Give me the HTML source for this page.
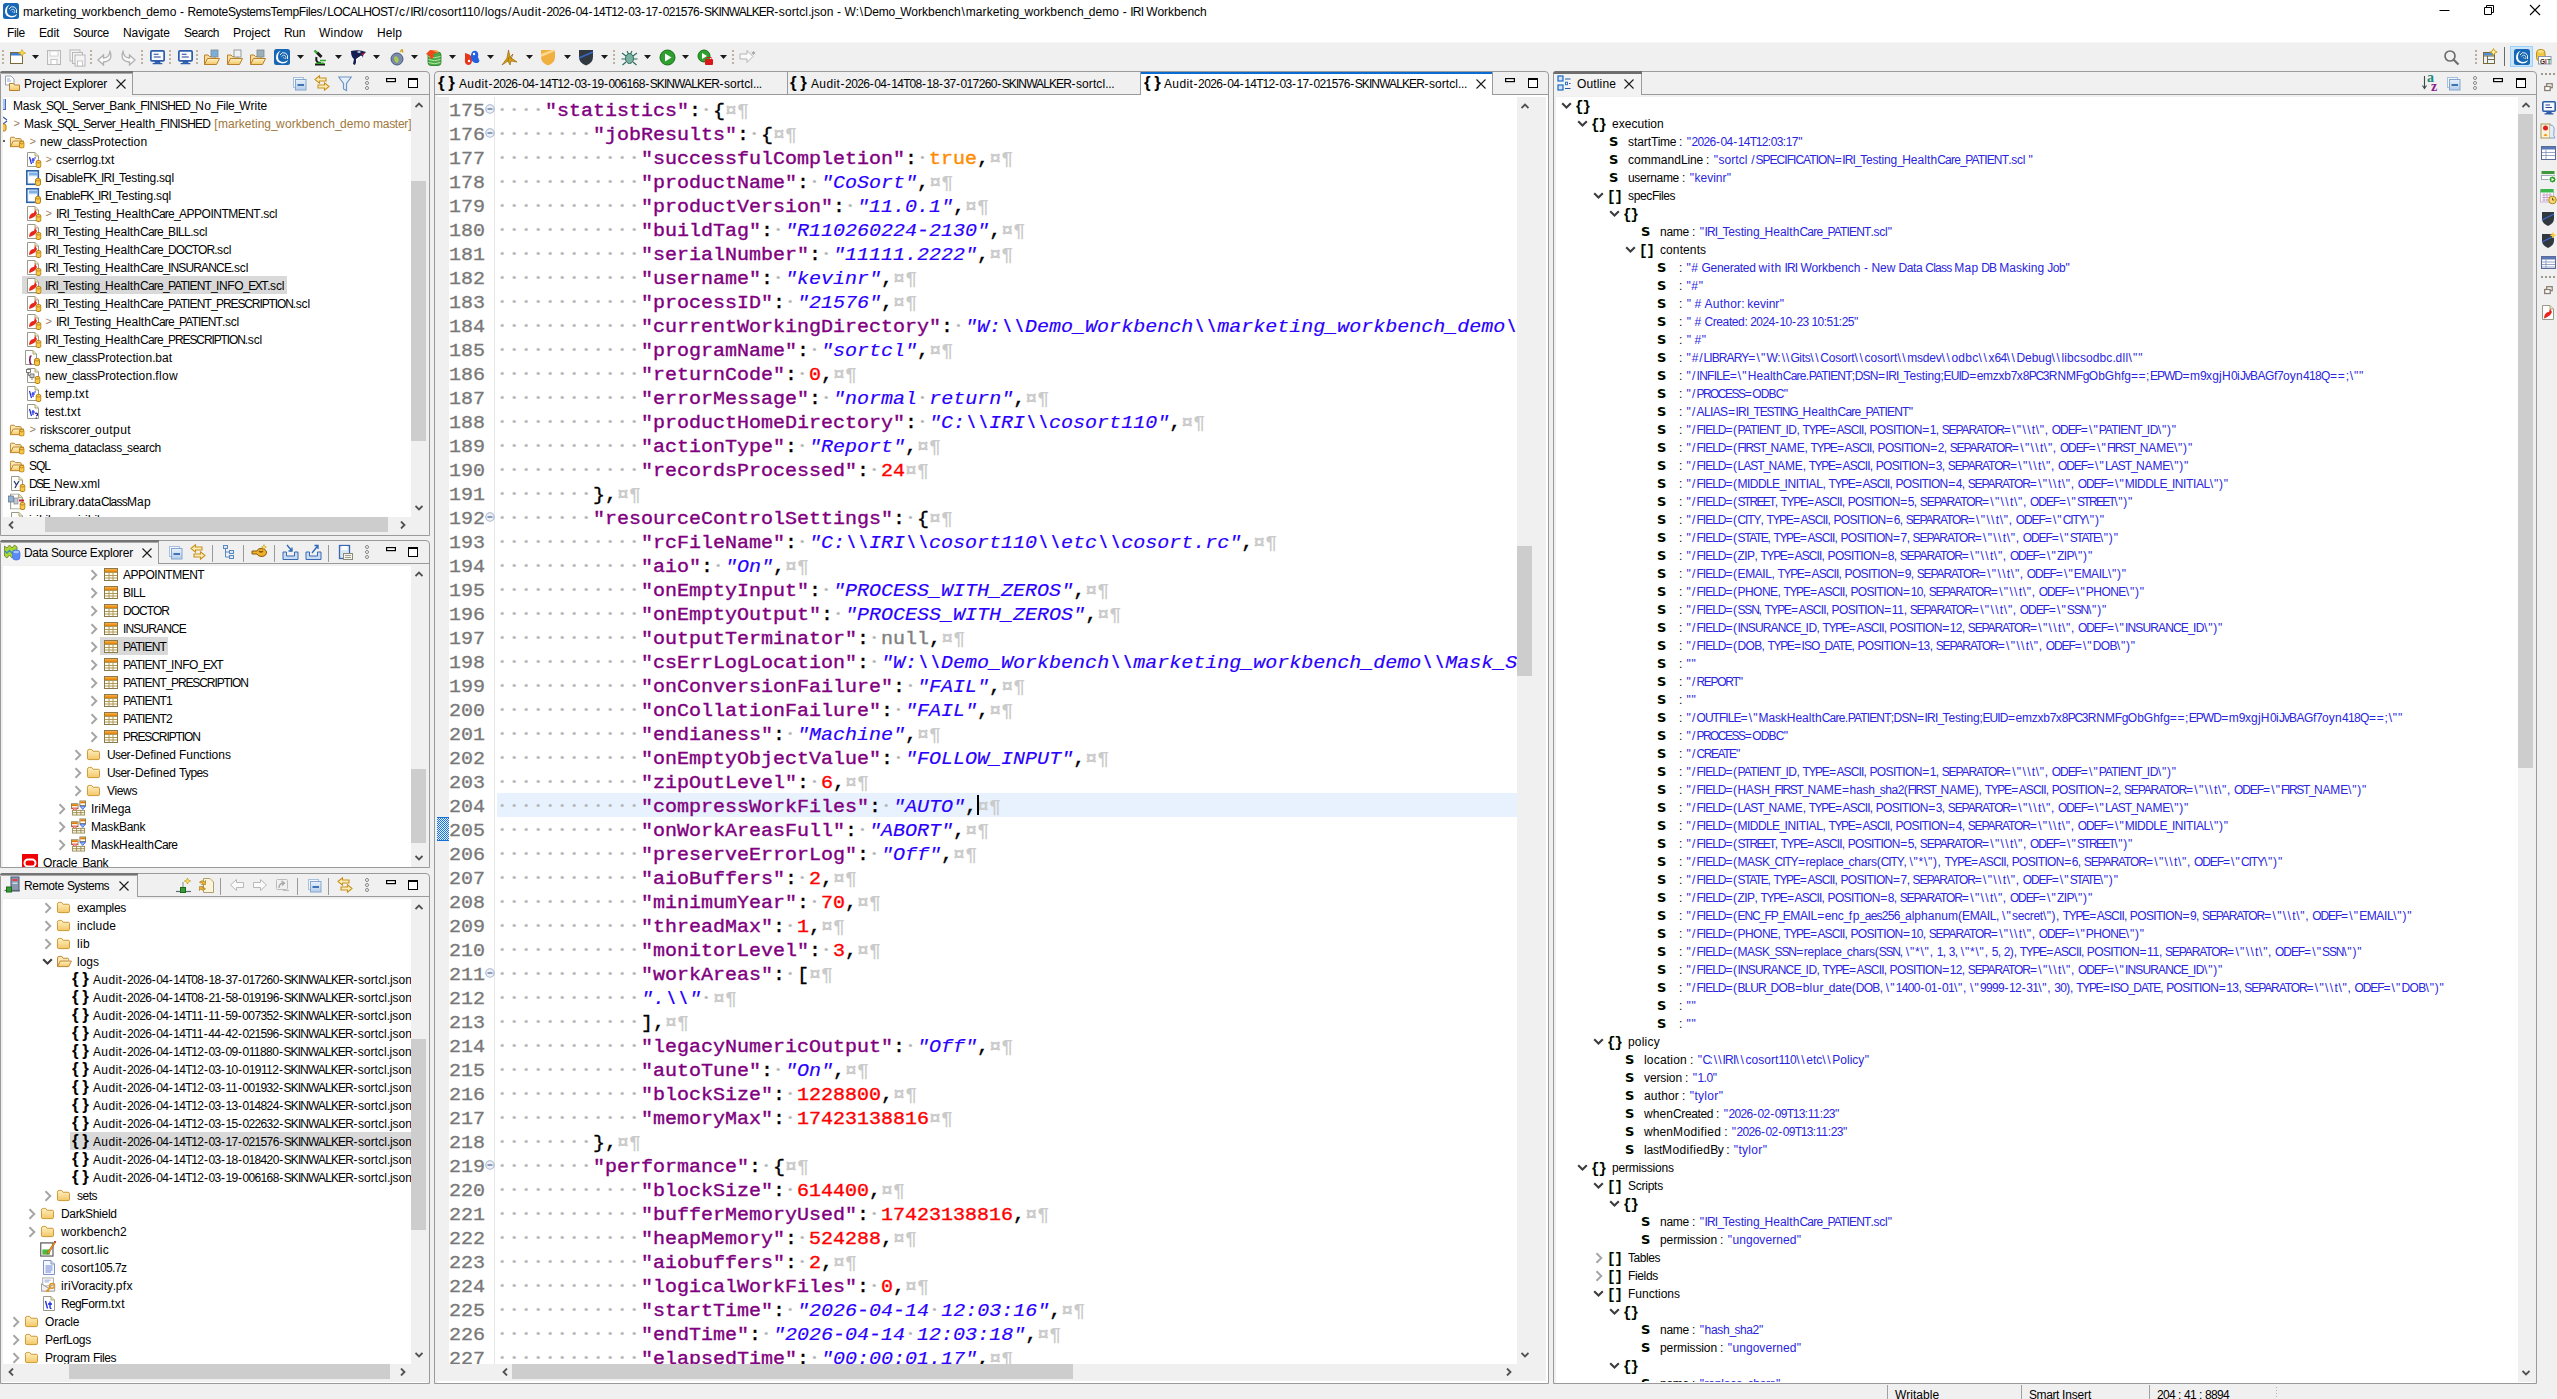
<!DOCTYPE html><html><head><meta charset="utf-8"><title>IRI Workbench</title><style>
*{margin:0;padding:0}
html,body{width:2557px;height:1399px;overflow:hidden;background:#f0f0f0}
body{position:relative;font:12px "Liberation Sans",sans-serif;color:#000}
.a{position:absolute}
.t{position:absolute;white-space:pre;font:12px "Liberation Sans",sans-serif;line-height:18px;height:18px}
.jb{position:absolute;white-space:pre;font:bold 17px "Liberation Sans",sans-serif;line-height:20px;letter-spacing:-0.600px;width:18px}
.ob{position:absolute;white-space:pre;font:bold 14px "Liberation Mono",monospace;line-height:18px;letter-spacing:-0.800px;text-shadow:0 0 1px #b8f0b8;margin-top:1.500px}
.os{position:absolute;white-space:pre;font:bold 13px "DejaVu Sans","Liberation Sans",sans-serif;line-height:18px;text-shadow:0 0 1px #b8f0b8;margin-top:1px}
.ln{position:absolute;left:11.500px;width:32.400px;text-align:right;font:18px "Liberation Mono",monospace;line-height:24px;height:24px;color:#787878;margin-top:1.500px;transform:scaleX(1.1111);transform-origin:0 0;-webkit-text-stroke:0.300px #787878}
.cl{position:absolute;left:60px;white-space:pre;font:18px "Liberation Mono",monospace;line-height:24px;height:24px;margin-top:1.500px;transform:scaleX(1.1111);transform-origin:0 0;-webkit-text-stroke:0.350px}
.cl i{font-style:normal}
.cl .k{color:#800080}
.cl .v{color:#2a00ff;font-style:italic;-webkit-text-stroke:0.150px}
.cl .d{color:#ff0000}
.cl .b{color:#ff8c00}
.cl .n{color:#808080}
.cl .p{color:#000}
.cl .w{color:#cbcbcb;font-style:normal;font-weight:bold;-webkit-text-stroke:0}
.cl .x{color:#b6b6b6;font-style:normal;-webkit-text-stroke:0;font-size:11px;letter-spacing:4.200px;margin-left:1.400px;margin-right:-1.400px;position:relative;top:-2.400px}
.t i{font-style:normal}
.c6{margin-left:0.30px;letter-spacing:0.30px}
.c7{margin-left:0.35px;letter-spacing:0.35px}
.c10{margin-left:0.50px;letter-spacing:0.50px}
.c16{margin-left:0.80px;letter-spacing:0.80px}
.c17{margin-left:0.85px;letter-spacing:0.85px}
.qm34{letter-spacing:-1.70px}
.qm33{letter-spacing:-1.65px}
.qm32{letter-spacing:-1.60px}
.qm31{letter-spacing:-1.55px}
.qm29{letter-spacing:-1.45px}
.qm28{letter-spacing:-1.40px}
.qm27{letter-spacing:-1.35px}
.qm26{letter-spacing:-1.30px}
.qm25{letter-spacing:-1.25px}
.qm24{letter-spacing:-1.20px}
.qm23{letter-spacing:-1.15px}
.qm22{letter-spacing:-1.10px}
.qm21{letter-spacing:-1.05px}
.qm20{letter-spacing:-1.00px}
.qm19{letter-spacing:-0.95px}
.qm18{letter-spacing:-0.90px}
.qm17{letter-spacing:-0.85px}
.qm16{letter-spacing:-0.80px}
.qm15{letter-spacing:-0.75px}
.qm14{letter-spacing:-0.70px}
.qm13{letter-spacing:-0.65px}
.qm12{letter-spacing:-0.60px}
.qm11{letter-spacing:-0.55px}
.qm10{letter-spacing:-0.50px}
.qm9{letter-spacing:-0.45px}
.qm8{letter-spacing:-0.40px}
.qm7{letter-spacing:-0.35px}
.qm6{letter-spacing:-0.30px}
.qm5{letter-spacing:-0.25px}
.qm4{letter-spacing:-0.20px}
.qm3{letter-spacing:-0.15px}
.qm2{letter-spacing:-0.10px}
.qm1{letter-spacing:-0.05px}
.q0{letter-spacing:0.00px}
.q1{letter-spacing:0.05px}
.q2{letter-spacing:0.10px}
.q3{letter-spacing:0.15px}
.q4{letter-spacing:0.20px}
.q5{letter-spacing:0.25px}
.q7{letter-spacing:0.35px}
.q8{letter-spacing:0.40px}
.q9{letter-spacing:0.45px}
.q10{letter-spacing:0.50px}
.q11{letter-spacing:0.55px}
.q12{letter-spacing:0.60px}
.q13{letter-spacing:0.65px}
.q14{letter-spacing:0.70px}
.q15{letter-spacing:0.75px}
.q16{letter-spacing:0.80px}
.q18{letter-spacing:0.90px}
.q20{letter-spacing:1.00px}
.q21{letter-spacing:1.05px}
.q23{letter-spacing:1.15px}
.q24{letter-spacing:1.20px}
.q27{letter-spacing:1.35px}
.q33{letter-spacing:1.65px}
</style></head><body>

<svg width="0" height="0" style="position:absolute">
<defs>
<linearGradient id="gFold" x1="0" y1="0" x2="0" y2="1"><stop offset="0" stop-color="#fff1c4"/><stop offset="1" stop-color="#f3c766"/></linearGradient>
<linearGradient id="gBlue" x1="0" y1="0" x2="0" y2="1"><stop offset="0" stop-color="#e8f1fb"/><stop offset="1" stop-color="#b4cdea"/></linearGradient>
<linearGradient id="gTab" x1="0" y1="0" x2="0" y2="1"><stop offset="0" stop-color="#ffb347"/><stop offset="1" stop-color="#e07b00"/></linearGradient>
</defs></svg>

<div class="a" style="left:0px;top:0px;width:2557px;height:42px;background:#fff;"></div>
<div class="a" style="left:0px;top:42px;width:2557px;height:1px;background:#f7f7f7;"></div>
<svg class="a" style="left:3px;top:3px;" width="16" height="16" viewBox="0 0 16 16"><rect x="0" y="0" width="16" height="16" rx="2.500" fill="#1767b4"/><path d="M7 1.500 Q1.500 3.500 2 9 Q2.500 13.500 8 14.500 Q13 14.500 14 11 Q11 13.500 7.500 12.800 Q4 11.500 4 8 Q4 3.500 7 1.500 Z" fill="#fff"/><path d="M6 6 Q8 2.500 11.500 4 Q14.500 6 13.500 10" fill="none" stroke="#fff" stroke-width="0.900"/><path d="M7.500 7.500 Q9 5.500 11 6.500 Q12.500 8 11.500 10" fill="none" stroke="#dbe8f6" stroke-width="0.800"/><path d="M9 9 Q10 8 10.500 9.500" fill="none" stroke="#dbe8f6" stroke-width="0.700"/></svg>
<div class="t" style="left:23px;top:3px;"><i class="q2">marketing</i><i class="qm32">_</i><i class="q3">workbench</i><i class="qm32">_</i><i class="q1">demo</i><i class="qm6"> </i><i class="c10">-</i><i class="qm6"> </i><i class="qm5">Remote</i><i class="qm10">Systems</i><i class="qm5">Temp</i><i class="qm8">Files</i><i class="c17">/</i><i class="qm13">LOCALHOST</i><i class="c17">/</i><i class="q1">c</i><i class="c17">/</i><i class="qm15">IRI</i><i class="c17">/</i><i class="q2">cosort</i><i class="qm6">110</i><i class="c17">/</i><i class="q1">logs</i><i class="c17">/</i><i class="q8">Audit</i><i class="c10">-</i><i class="qm12">2026</i><i class="c10">-</i><i class="qm12">04</i><i class="c10">-</i><i class="qm12">14</i><i class="qm25">T</i><i class="qm12">12</i><i class="c10">-</i><i class="qm12">03</i><i class="c10">-</i><i class="qm12">17</i><i class="c10">-</i><i class="qm12">021576</i><i class="c10">-</i><i class="qm17">SKINWALKER</i><i class="c10">-</i><i class="q2">sortcl</i><i class="qm6">.</i><i class="q1">json</i><i class="qm6"> </i><i class="c10">-</i><i class="qm6"> </i><i class="qm4">W</i><i class="q14">:\</i><i class="qm3">Demo</i><i class="qm32">_</i><i class="q0">Workbench</i><i class="c17">\</i><i class="q2">marketing</i><i class="qm32">_</i><i class="q3">workbench</i><i class="qm32">_</i><i class="q1">demo</i><i class="qm6"> </i><i class="c10">-</i><i class="qm6"> </i><i class="qm15">IRI</i><i class="qm6"> </i><i class="q0">Workbench</i></div>
<svg class="a" style="left:2433px;top:0" width="124" height="24"><path d="M6.500 10.500 H16.500" stroke="#000" stroke-width="1"/><path d="M51.500 7.500 H58.500 V14.500 H51.500 Z M53.500 7.500 V5.500 H60.500 V12.500 H58.500" fill="none" stroke="#000" stroke-width="1"/><path d="M97 5 L107 15 M107 5 L97 15" stroke="#000" stroke-width="1.100"/></svg>
<div class="t" style="left:7px;top:24px;"><i class="qm7">File</i></div>
<div class="t" style="left:39px;top:24px;"><i class="qm3">Edit</i></div>
<div class="t" style="left:73px;top:24px;"><i class="qm7">Source</i></div>
<div class="t" style="left:123px;top:24px;"><i class="qm1">Navigate</i></div>
<div class="t" style="left:184px;top:24px;"><i class="qm10">Search</i></div>
<div class="t" style="left:233px;top:24px;"><i class="qm1">Project</i></div>
<div class="t" style="left:284px;top:24px;"><i class="qm7">Run</i></div>
<div class="t" style="left:319px;top:24px;"><i class="q4">Window</i></div>
<div class="t" style="left:377px;top:24px;"><i class="q2">Help</i></div>
<div class="a" style="left:1.5px;top:50px;width:2px;height:2px;background:#bdb29e;"></div>
<div class="a" style="left:1.5px;top:54px;width:2px;height:2px;background:#bdb29e;"></div>
<div class="a" style="left:1.5px;top:58px;width:2px;height:2px;background:#bdb29e;"></div>
<div class="a" style="left:1.5px;top:62px;width:2px;height:2px;background:#bdb29e;"></div>
<svg class="a" style="left:9px;top:49px" width="17" height="17"><rect x="1.500" y="3.500" width="12" height="11" fill="#fff" stroke="#7a6a3a"/><rect x="2" y="4" width="11" height="2.500" fill="#3f7fd0"/><path d="M13 0.500 L14.200 3 L16.700 4 L14.200 5 L13 7.500 L11.800 5 L9.300 4 L11.800 3 Z" fill="#ffd84a" stroke="#c89a10" stroke-width="0.600"/></svg>
<svg class="a" style="left:31.5px;top:55px" width="7" height="4"><path d="M0 0 H7 L3.500 4 Z" fill="#1a1a1a"/></svg>
<svg class="a" style="left:46px;top:49px" width="17" height="17"><rect x="1.500" y="1.500" width="13" height="14" fill="#f4f4f4" stroke="#b8b8b8"/><rect x="4" y="2" width="8" height="5" fill="#fff" stroke="#c8c8c8" stroke-width="0.800"/><rect x="5" y="10.500" width="6" height="5" fill="#fff" stroke="#b8b8b8" stroke-width="0.800"/></svg>
<svg class="a" style="left:69px;top:49px" width="18" height="18"><rect x="1" y="1" width="10" height="11" fill="#f4f4f4" stroke="#b8b8b8"/><rect x="3.500" y="3.500" width="10" height="11" fill="#f4f4f4" stroke="#b8b8b8"/><rect x="6" y="6" width="10" height="11" fill="#f4f4f4" stroke="#b8b8b8"/><rect x="8.500" y="12" width="5" height="5" fill="#fff" stroke="#b8b8b8" stroke-width="0.800"/></svg>
<div class="a" style="left:89.5px;top:50px;width:2px;height:2px;background:#bdb29e;"></div>
<div class="a" style="left:89.5px;top:54px;width:2px;height:2px;background:#bdb29e;"></div>
<div class="a" style="left:89.5px;top:58px;width:2px;height:2px;background:#bdb29e;"></div>
<div class="a" style="left:89.5px;top:62px;width:2px;height:2px;background:#bdb29e;"></div>
<svg class="a" style="left:97px;top:50px" width="18" height="16"><path d="M1 10 L6.500 5 V8 Q12 8 13 1.500 Q16.500 11 6.500 12 V15 Z" fill="#fafafa" stroke="#b0b0b0" stroke-width="1.300"/></svg>
<svg class="a" style="left:118px;top:50px" width="18" height="16"><path d="M17 10 L11.500 5 V8 Q6 8 5 1.500 Q1.500 11 11.500 12 V15 Z" fill="#fafafa" stroke="#b0b0b0" stroke-width="1.300"/></svg>
<div class="a" style="left:140.5px;top:50px;width:2px;height:2px;background:#bdb29e;"></div>
<div class="a" style="left:140.5px;top:54px;width:2px;height:2px;background:#bdb29e;"></div>
<div class="a" style="left:140.5px;top:58px;width:2px;height:2px;background:#bdb29e;"></div>
<div class="a" style="left:140.5px;top:62px;width:2px;height:2px;background:#bdb29e;"></div>
<svg class="a" style="left:150px;top:50px;" width="15" height="15" viewBox="0 0 14 14"><rect x="0.800" y="0.800" width="12.400" height="9.400" rx="1" fill="#f6fbff" stroke="#2d5cab" stroke-width="1.600"/><path d="M3.500 4 H8 M3.500 6.500 H10" stroke="#2a3f8f" stroke-width="1"/><path d="M5 10.500 H9 V12 H5 Z M2.500 12.800 H11.500" stroke="#2d5cab" stroke-width="1.200" fill="#2d5cab"/></svg>
<div class="a" style="left:168.5px;top:50px;width:2px;height:2px;background:#bdb29e;"></div>
<div class="a" style="left:168.5px;top:54px;width:2px;height:2px;background:#bdb29e;"></div>
<div class="a" style="left:168.5px;top:58px;width:2px;height:2px;background:#bdb29e;"></div>
<div class="a" style="left:168.5px;top:62px;width:2px;height:2px;background:#bdb29e;"></div>
<svg class="a" style="left:178px;top:50px;" width="15" height="15" viewBox="0 0 14 14"><rect x="0.800" y="0.800" width="12.400" height="9.400" rx="1" fill="#f6fbff" stroke="#2d5cab" stroke-width="1.600"/><path d="M3.500 4 H8 M3.500 6.500 H10" stroke="#2a3f8f" stroke-width="1"/><path d="M5 10.500 H9 V12 H5 Z M2.500 12.800 H11.500" stroke="#2d5cab" stroke-width="1.200" fill="#2d5cab"/></svg>
<div class="a" style="left:195.5px;top:50px;width:2px;height:2px;background:#bdb29e;"></div>
<div class="a" style="left:195.5px;top:54px;width:2px;height:2px;background:#bdb29e;"></div>
<div class="a" style="left:195.5px;top:58px;width:2px;height:2px;background:#bdb29e;"></div>
<div class="a" style="left:195.5px;top:62px;width:2px;height:2px;background:#bdb29e;"></div>
<svg class="a" style="left:203px;top:49px" width="18" height="17"><path d="M1.500 15.500 V6 H5 L6.500 7.500 H12 V9" fill="#f8dc9c" stroke="#b8802a"/><path d="M1.500 15.500 L4.500 9.500 H16.500 L13.500 15.500 Z" fill="url(#gFold)" stroke="#b8802a"/><rect x="8" y="1" width="7" height="7" fill="#7ab0d8" stroke="#808890" stroke-width="0.800"/></svg>
<svg class="a" style="left:226px;top:49px" width="18" height="17"><path d="M1.500 15.500 V6 H5 L6.500 7.500 H12 V9" fill="#f8dc9c" stroke="#b8802a"/><path d="M1.500 15.500 L4.500 9.500 H16.500 L13.500 15.500 Z" fill="url(#gFold)" stroke="#b8802a"/><rect x="8" y="1" width="7" height="7" fill="#f0f0f4" stroke="#808890" stroke-width="0.800"/></svg>
<svg class="a" style="left:249px;top:49px" width="18" height="17"><path d="M1.500 15.500 V6 H5 L6.500 7.500 H12 V9" fill="#f8dc9c" stroke="#b8802a"/><path d="M1.500 15.500 L4.500 9.500 H16.500 L13.500 15.500 Z" fill="url(#gFold)" stroke="#b8802a"/><rect x="8" y="1" width="7" height="7" fill="#9ab0b8" stroke="#808890" stroke-width="0.800"/></svg>
<svg class="a" style="left:274px;top:49px;" width="16" height="16" viewBox="0 0 16 16"><rect x="0" y="0" width="16" height="16" rx="2.500" fill="#1767b4"/><path d="M7 1.500 Q1.500 3.500 2 9 Q2.500 13.500 8 14.500 Q13 14.500 14 11 Q11 13.500 7.500 12.800 Q4 11.500 4 8 Q4 3.500 7 1.500 Z" fill="#fff"/><path d="M6 6 Q8 2.500 11.500 4 Q14.500 6 13.500 10" fill="none" stroke="#fff" stroke-width="0.900"/><path d="M7.500 7.500 Q9 5.500 11 6.500 Q12.500 8 11.500 10" fill="none" stroke="#dbe8f6" stroke-width="0.800"/><path d="M9 9 Q10 8 10.500 9.500" fill="none" stroke="#dbe8f6" stroke-width="0.700"/></svg>
<svg class="a" style="left:296.5px;top:55px" width="7" height="4"><path d="M0 0 H7 L3.500 4 Z" fill="#1a1a1a"/></svg>
<svg class="a" style="left:312px;top:49px" width="17" height="17"><path d="M5 3.500 L9.500 8" stroke="#1a1a1a" stroke-width="3"/><path d="M4.500 8 Q3 14 9 14" stroke="#1a1a1a" stroke-width="2" fill="none"/><path d="M3 15.500 H13" stroke="#1a1a1a" stroke-width="2"/><path d="M2.500 1.500 L5 4" stroke="#2fa82a" stroke-width="2.400"/><path d="M8 11.500 H14 M4 14.200 H12" stroke="#2fa82a" stroke-width="1.500"/></svg>
<svg class="a" style="left:334.5px;top:55px" width="7" height="4"><path d="M0 0 H7 L3.500 4 Z" fill="#1a1a1a"/></svg>
<svg class="a" style="left:350px;top:49px" width="18" height="17"><path d="M1 2 Q9 0 16 3 L13 6 Q14 8 11 9 L7 11 L5 16 L3 15 L4 10 Q1 8 1 2 Z" fill="#141e50"/><path d="M6 10 L11 6.500 L13 8 L8 11 L6 15 Z" fill="#fff"/><path d="M11 5 L15 3.500 L13 6.500 Z" fill="#c02030"/><ellipse cx="9" cy="3" rx="1.800" ry="0.800" fill="#fff"/></svg>
<svg class="a" style="left:372.5px;top:55px" width="7" height="4"><path d="M0 0 H7 L3.500 4 Z" fill="#1a1a1a"/></svg>
<svg class="a" style="left:389px;top:49px" width="17" height="17"><circle cx="8" cy="10" r="6" fill="#7a8aa8" stroke="#4a5a80"/><path d="M5 8 Q8 6 9 9 Q11 12 8 14 Q5 13 5 8Z" fill="#a8c850"/><path d="M11 3 L13 0.500 L14 3.500" stroke="#c8a020" stroke-width="1.200" fill="#ffe060"/></svg>
<svg class="a" style="left:410.5px;top:55px" width="7" height="4"><path d="M0 0 H7 L3.500 4 Z" fill="#1a1a1a"/></svg>
<svg class="a" style="left:425px;top:49px" width="17" height="17"><rect x="3" y="3" width="13" height="13.500" rx="3" fill="#4aa848" stroke="#2a7a2a" stroke-width="0.800"/><path d="M3.500 7.500 Q9.500 10 15.500 7.500 M3.500 10.500 Q9.500 13 15.500 10.500 M3.500 13.500 Q9.500 16 15.500 13.500" stroke="#b8e8a8" stroke-width="1" fill="none"/><path d="M1 5 L5 1 L10 1.500 L12 4 L8 5 L9 8 L6 10 L4 6.500 Z" fill="#f04818"/><path d="M8 2 L12 1 L13 4" fill="#f8a030"/></svg>
<svg class="a" style="left:448.5px;top:55px" width="7" height="4"><path d="M0 0 H7 L3.500 4 Z" fill="#1a1a1a"/></svg>
<svg class="a" style="left:463px;top:49px" width="17" height="17"><path d="M2 4 L5 5 Q9 6 9 11 Q9 16 5 16 Q1 15 2 10 Z" fill="#e83418"/><path d="M15 14 L12 14 Q7 12 8 6 Q9 1 13 2 Q16 3 15 8 L16.500 12 Z" fill="#2460e0"/><circle cx="6" cy="12" r="1.200" fill="#fff"/><circle cx="11" cy="5" r="1.200" fill="#fff"/></svg>
<svg class="a" style="left:486.5px;top:55px" width="7" height="4"><path d="M0 0 H7 L3.500 4 Z" fill="#1a1a1a"/></svg>
<svg class="a" style="left:501px;top:49px" width="18" height="17"><path d="M7.500 1 L9 8 L16 13 L10 12 L9 16 L7 12 L1 16 L6 9 Z" fill="#d8a010" stroke="#8a5a00" stroke-width="0.600"/><path d="M9 8 L12 5 L10 10 M7 12 L8 8" stroke="#8a5a00" stroke-width="0.700" fill="none"/></svg>
<svg class="a" style="left:525.5px;top:55px" width="7" height="4"><path d="M0 0 H7 L3.500 4 Z" fill="#1a1a1a"/></svg>
<svg class="a" style="left:540px;top:49px" width="16" height="17"><path d="M1 1 H15 V8 Q15 14 8 16.500 Q1 14 1 8 Z" fill="#f0b040"/><path d="M1 8 L15 2 V1 H12 L1 5 Z" fill="#ffd890"/></svg>
<svg class="a" style="left:563.5px;top:55px" width="7" height="4"><path d="M0 0 H7 L3.500 4 Z" fill="#1a1a1a"/></svg>
<svg class="a" style="left:578px;top:49px" width="16" height="17"><path d="M1 1 H15 V8 Q15 14 8 16.500 Q1 14 1 8 Z" fill="#303840"/><path d="M1 9 L15 3" stroke="#3a68c8" stroke-width="1.500"/></svg>
<svg class="a" style="left:600.5px;top:55px" width="7" height="4"><path d="M0 0 H7 L3.500 4 Z" fill="#1a1a1a"/></svg>
<div class="a" style="left:612.5px;top:50px;width:2px;height:2px;background:#bdb29e;"></div>
<div class="a" style="left:612.5px;top:54px;width:2px;height:2px;background:#bdb29e;"></div>
<div class="a" style="left:612.5px;top:58px;width:2px;height:2px;background:#bdb29e;"></div>
<div class="a" style="left:612.5px;top:62px;width:2px;height:2px;background:#bdb29e;"></div>
<svg class="a" style="left:621px;top:49px" width="17" height="17"><ellipse cx="8.500" cy="9.500" rx="4" ry="5" fill="#7ab0a0" stroke="#2a6a5a"/><path d="M1 4 L5 7 M16 4 L12 7 M0.500 10 H4.500 M12.500 10 H16.500 M1.500 16 L5 13 M15.500 16 L12 13 M6 2 L7.500 5 M11 2 L9.500 5" stroke="#2a6a5a" stroke-width="1.100"/></svg>
<svg class="a" style="left:643.5px;top:55px" width="7" height="4"><path d="M0 0 H7 L3.500 4 Z" fill="#1a1a1a"/></svg>
<svg class="a" style="left:659px;top:49px" width="17" height="17"><circle cx="8.500" cy="8.500" r="7.500" fill="#2fa02f" stroke="#1a701a"/><path d="M6 4.500 L12.500 8.500 L6 12.500 Z" fill="#fff"/></svg>
<svg class="a" style="left:681.5px;top:55px" width="7" height="4"><path d="M0 0 H7 L3.500 4 Z" fill="#1a1a1a"/></svg>
<svg class="a" style="left:697px;top:49px" width="17" height="17"><circle cx="7" cy="7" r="6" fill="#2fa02f" stroke="#1a701a"/><path d="M5 4 L10 7 L5 10 Z" fill="#fff"/><rect x="8" y="10" width="8" height="6" rx="1" fill="#d81818"/><rect x="10" y="8.500" width="4" height="2" fill="none" stroke="#d81818"/></svg>
<svg class="a" style="left:719.5px;top:55px" width="7" height="4"><path d="M0 0 H7 L3.500 4 Z" fill="#1a1a1a"/></svg>
<div class="a" style="left:731.5px;top:50px;width:2px;height:2px;background:#bdb29e;"></div>
<div class="a" style="left:731.5px;top:54px;width:2px;height:2px;background:#bdb29e;"></div>
<div class="a" style="left:731.5px;top:58px;width:2px;height:2px;background:#bdb29e;"></div>
<div class="a" style="left:731.5px;top:62px;width:2px;height:2px;background:#bdb29e;"></div>
<svg class="a" style="left:739px;top:49px" width="18" height="15"><path d="M1 5 H8 V1.500 L14 7.500 L8 13.500 V10 H1 Z" fill="#fafafa" stroke="#b4b4b4"/><path d="M14.500 2 V6 M12.700 3 L16.300 5 M16.300 3 L12.700 5" stroke="#a0a0a0" stroke-width="0.800"/></svg>
<svg class="a" style="left:2440px;top:46px" width="22" height="22"><circle cx="10" cy="10" r="5" fill="none" stroke="#6e6e6e" stroke-width="1.700"/><path d="M13.500 13.500 L18.500 18.500" stroke="#6e6e6e" stroke-width="2.200"/></svg>
<div class="a" style="left:2475px;top:50px;width:2px;height:2px;background:#b9ad98;"></div>
<div class="a" style="left:2475px;top:54px;width:2px;height:2px;background:#b9ad98;"></div>
<div class="a" style="left:2475px;top:58px;width:2px;height:2px;background:#b9ad98;"></div>
<div class="a" style="left:2475px;top:62px;width:2px;height:2px;background:#b9ad98;"></div>
<svg class="a" style="left:2482px;top:48px" width="17" height="17"><rect x="1.500" y="4.500" width="11" height="11" fill="#eaf4fc" stroke="#7a6a3a"/><rect x="2" y="5" width="10" height="2.500" fill="#4f8fd8"/><path d="M1.500 8 H12.500 M5.500 8 V15.500 M5.500 11.500 H12.500" stroke="#7a6a3a"/><path d="M11.500 0.500 L12.700 3 L15.200 4 L12.700 5 L11.500 7.500 L10.300 5 L7.800 4 L10.300 3 Z" fill="#fff1b0" stroke="#c89a10" stroke-width="0.900"/></svg>
<div class="a" style="left:2504px;top:47px;width:1px;height:19px;background:#6a6a6a;"></div>
<div class="a" style="left:2510px;top:46px;width:23px;height:21px;background:#cce4f7;border:1px solid #99d1ff;box-sizing:border-box;"></div>
<svg class="a" style="left:2514px;top:49px;" width="16" height="16" viewBox="0 0 16 16"><rect x="0" y="0" width="16" height="16" rx="2.500" fill="#1767b4"/><path d="M7 1.500 Q1.500 3.500 2 9 Q2.500 13.500 8 14.500 Q13 14.500 14 11 Q11 13.500 7.500 12.800 Q4 11.500 4 8 Q4 3.500 7 1.500 Z" fill="#fff"/><path d="M6 6 Q8 2.500 11.500 4 Q14.500 6 13.500 10" fill="none" stroke="#fff" stroke-width="0.900"/><path d="M7.500 7.500 Q9 5.500 11 6.500 Q12.500 8 11.500 10" fill="none" stroke="#dbe8f6" stroke-width="0.800"/><path d="M9 9 Q10 8 10.500 9.500" fill="none" stroke="#dbe8f6" stroke-width="0.700"/></svg>
<svg class="a" style="left:2535px;top:48px" width="18" height="17"><rect x="1.500" y="1.500" width="8.500" height="11.500" rx="3.500" fill="#f2c84a" stroke="#b8901c"/><ellipse cx="5.700" cy="3.500" rx="3" ry="1.200" fill="#fae28a"/><rect x="3.500" y="8.500" width="12.500" height="7.500" fill="#fff" stroke="#8a94b0"/></svg>
<div class="a" style="left:2540px;top:57.500px;font:bold 6.500px 'Liberation Sans',sans-serif;line-height:7px;letter-spacing:0"><span style="color:#222">G</span><span style="color:#c02020">I</span><span style="color:#208020">T</span></div>
<div class="a" style="left:0px;top:71px;width:430px;height:465px;border:1px solid #9a9a9a;border-radius:4px 4px 0 0;background:#f0f0f0;box-sizing:border-box"></div>
<div class="a" style="left:132px;top:94px;width:298px;height:1px;background:#9a9a9a;"></div>
<div class="a" style="left:3px;top:97px;width:424px;height:438px;background:#fff;"></div>
<div class="a" style="left:1px;top:72px;width:131px;height:24px;background:#f3f3f3;"></div>
<div class="a" style="left:132px;top:72px;width:1px;height:23px;background:#9a9a9a;"></div>
<div class="a" style="left:0px;top:71px;width:133px;height:2px;background:#747474;border-radius:3px 0 0 0;"></div>
<div class="a" style="left:1px;top:73px;width:132px;height:1px;background:#a8a8a8;"></div>
<svg class="a" style="left:4px;top:75px" width="17" height="17"><path d="M1.500 1 H7 L10 4 V10 H1.500 Z" fill="#fff" stroke="#9aa0b0"/><path d="M3 4 H6 M3 6 H7" stroke="#7a90d0" stroke-width="0.800"/><path d="M5.500 8.500 H9.500 L10.500 10 H15.500 V15.500 H5.500 Z" fill="url(#gFold)" stroke="#b8802a"/></svg>
<div class="t" style="left:24px;top:75px;"><i class="qm1">Project</i><i class="qm7"> </i><i class="qm4">Explorer</i></div>
<svg class="a" style="left:116px;top:79px;" width="10" height="10" viewBox="0 0 10 10"><path d="M0.500 0.500 L9.500 9.500 M9.500 0.500 L0.500 9.500" stroke="#1a1a1a" stroke-width="1.100"/></svg>
<svg class="a" style="left:293px;top:77px;" width="14" height="14" viewBox="0 0 14 14"><rect x="0.500" y="0.500" width="10" height="10" fill="#f2f7fc" stroke="#a9c0dc"/><rect x="2.500" y="2.500" width="10.500" height="10.500" fill="url(#gBlue)" stroke="#86a6cf"/><path d="M4.500 8 H11" stroke="#1c5aa6" stroke-width="1.600"/></svg>
<svg class="a" style="left:314px;top:75px;" width="16" height="16" viewBox="0 0 16 16"><path d="M1 4.500 L5.500 0.800 V3 H12 V6 H5.500 V8.200 Z" fill="#fdeeb8" stroke="#c8901c" stroke-width="1.100"/><path d="M15 11.500 L10.500 7.800 V10 H4 V13 H10.500 V15.200 Z" fill="#fdeeb8" stroke="#c8901c" stroke-width="1.100"/></svg>
<svg class="a" style="left:338px;top:76px;" width="14" height="16" viewBox="0 0 14 16"><path d="M0.700 1 H13.300 L8.500 7.500 V14.500 L5.500 13 V7.500 Z" fill="#e7f0fa" stroke="#6d96c6" stroke-width="1.200"/></svg>
<svg class="a" style="left:365px;top:75px;" width="4" height="16" viewBox="0 0 4 16"><circle cx="2" cy="3" r="1.500" fill="#fff" stroke="#6a6a6a" stroke-width="0.800"/><circle cx="2" cy="8" r="1.500" fill="#fff" stroke="#6a6a6a" stroke-width="0.800"/><circle cx="2" cy="13" r="1.500" fill="#fff" stroke="#6a6a6a" stroke-width="0.800"/></svg>
<svg class="a" style="left:386px;top:78px;" width="10" height="5" viewBox="0 0 10 5"><rect x="0.600" y="0.600" width="8.800" height="3" fill="#fff" stroke="#000" stroke-width="1.200"/></svg>
<svg class="a" style="left:408px;top:78px;" width="10" height="10" viewBox="0 0 10 10"><rect x="0.500" y="0.500" width="9" height="9" fill="#fff" stroke="#000" stroke-width="1"/><rect x="0" y="0" width="10" height="2" fill="#000"/></svg>
<div class="a" style="left:3px;top:96px;width:408px;height:421px;overflow:hidden">
<div class="a" style="left:0px;top:3px;width:3px;height:11px;background:#a8c8f0;border-right:1px solid #4a68b8;border-bottom:1px solid #4a68b8;box-sizing:border-box;"></div>
<div class="t" style="left:10px;top:1px;"><i class="qm3">Mask</i><i class="qm33">_</i><i class="qm20">SQL</i><i class="qm33">_</i><i class="qm11">Server</i><i class="qm33">_</i><i class="qm7">Bank</i><i class="qm33">_</i><i class="qm15">FINISHED</i><i class="qm33">_</i><i class="q7">No</i><i class="qm33">_</i><i class="qm7">File</i><i class="qm33">_</i><i class="q1">Write</i></div>
<svg class="a" style="left:0;top:19px" width="5" height="17"><path d="M0 2 L4 5 M0 9 L4 6" stroke="#3a5aa8" stroke-width="1.200"/><rect x="-2" y="9" width="5" height="7" rx="1.800" fill="#f7c948" stroke="#b47a12"/></svg>
<div class="t" style="left:10px;top:18px;color:#9a7c5c;font-size:11px;"><i class="c10">&gt;</i></div>
<div class="t" style="left:21px;top:19px;"><i class="qm3">Mask</i><i class="qm33">_</i><i class="qm20">SQL</i><i class="qm33">_</i><i class="qm11">Server</i><i class="qm33">_</i><i class="q1">Health</i><i class="qm33">_</i><i class="qm15">FINISHED</i></div>
<div class="t" style="left:211px;top:19px;color:#a0783c;"><i class="c6">[</i><i class="q1">marketing</i><i class="qm33">_</i><i class="q2">workbench</i><i class="qm33">_</i><i class="q0">demo</i><i class="qm7"> </i><i class="qm6">master</i><i class="c6">]</i></div>
<div class="a" style="left:0px;top:44px;width:1.5px;height:2px;background:#606060;"></div>
<svg class="a" style="left:6px;top:37px;" width="17" height="16" viewBox="0 0 18 16"><g transform="translate(0,2.5)"><path d="M1.500 11.500 L1.500 2.500 Q1.500 1.500 2.500 1.500 L5.500 1.500 L7 3 L12 3 Q13 3 13 4.500 L13 5.500" fill="#fbe7b0" stroke="#b8802a" stroke-width="1"/><path d="M1.500 11.500 L4.500 5.500 L15.500 5.500 L12.500 11.500 Z" fill="url(#gFold)" stroke="#b8802a" stroke-width="1"/></g><svg x="10.500" y="8" width="6" height="8" viewBox="0 0 6 8"><rect x="0.5" y="0.5" width="5" height="7" rx="1.8" fill="#f7c948" stroke="#b47a12" stroke-width="1"/><path d="M1 2.5 Q3 3.6 5 2.5" fill="none" stroke="#b47a12" stroke-width="0.8"/></svg></svg>
<div class="t" style="left:26px;top:36px;color:#9a7c5c;font-size:11px;"><i class="c10">&gt;</i></div>
<div class="t" style="left:37px;top:37px;"><i class="q0">new</i><i class="qm33">_</i><i class="qm9">class</i><i class="q2">Protection</i></div>
<svg class="a" style="left:24px;top:56px;" width="15" height="16" viewBox="0 0 15 16"><svg x="0" y="0" width="12" height="15" viewBox="0 0 12 15"><path d="M0.5 0.5 H8 L11.5 4 V14.5 H0.5 Z" fill="#fff" stroke="#9a9a8a" stroke-width="1"/><path d="M8 0.5 V4 H11.5" fill="#ece6c8" stroke="#b0a670" stroke-width="1"/></svg><path d="M2.500 5 L4.500 12 M6 6 V11 M4.500 8 H8 M7.500 6.500 L8.500 5.500" stroke="#1a2ae0" stroke-width="1.200" fill="none"/><svg x="8.500" y="8" width="6" height="8" viewBox="0 0 6 8"><rect x="0.5" y="0.5" width="5" height="7" rx="1.8" fill="#f7c948" stroke="#b47a12" stroke-width="1"/><path d="M1 2.5 Q3 3.6 5 2.5" fill="none" stroke="#b47a12" stroke-width="0.8"/></svg></svg>
<div class="t" style="left:42px;top:54px;color:#9a7c5c;font-size:11px;"><i class="c10">&gt;</i></div>
<div class="t" style="left:53px;top:55px;"><i class="qm2">cserrlog</i><i class="qm7">.</i><i class="q9">txt</i></div>
<svg class="a" style="left:23px;top:74px;" width="16" height="16" viewBox="0 0 16 16"><rect x="0.8" y="0.8" width="11.500" height="13.500" fill="#eaf3ff" stroke="#2d64a8" stroke-width="1.600"/><rect x="3" y="2.500" width="8" height="3" fill="#7fb0e8"/><rect x="3" y="7" width="8" height="6" fill="#fff"/><svg x="9" y="8" width="6" height="8" viewBox="0 0 6 8"><rect x="0.5" y="0.5" width="5" height="7" rx="1.8" fill="#f7c948" stroke="#b47a12" stroke-width="1"/><path d="M1 2.5 Q3 3.6 5 2.5" fill="none" stroke="#b47a12" stroke-width="0.8"/></svg></svg>
<div class="t" style="left:42px;top:73px;"><i class="qm6">Disable</i><i class="qm23">FK</i><i class="qm33">_</i><i class="qm16">IRI</i><i class="qm33">_</i><i class="qm3">Testing</i><i class="qm7">.</i><i class="qm2">sql</i></div>
<svg class="a" style="left:23px;top:92px;" width="16" height="16" viewBox="0 0 16 16"><rect x="0.8" y="0.8" width="11.500" height="13.500" fill="#eaf3ff" stroke="#2d64a8" stroke-width="1.600"/><rect x="3" y="2.500" width="8" height="3" fill="#7fb0e8"/><rect x="3" y="7" width="8" height="6" fill="#fff"/><svg x="9" y="8" width="6" height="8" viewBox="0 0 6 8"><rect x="0.5" y="0.5" width="5" height="7" rx="1.8" fill="#f7c948" stroke="#b47a12" stroke-width="1"/><path d="M1 2.5 Q3 3.6 5 2.5" fill="none" stroke="#b47a12" stroke-width="0.8"/></svg></svg>
<div class="t" style="left:42px;top:91px;"><i class="qm8">Enable</i><i class="qm23">FK</i><i class="qm33">_</i><i class="qm16">IRI</i><i class="qm33">_</i><i class="qm3">Testing</i><i class="qm7">.</i><i class="qm2">sql</i></div>
<svg class="a" style="left:24px;top:110px;" width="15" height="16" viewBox="0 0 15 16"><svg x="0" y="0" width="12" height="15" viewBox="0 0 12 15"><path d="M0.5 0.5 H8 L11.5 4 V14.5 H0.5 Z" fill="#fff" stroke="#9a9a8a" stroke-width="1"/><path d="M8 0.5 V4 H11.5" fill="#ece6c8" stroke="#b0a670" stroke-width="1"/></svg><path d="M2 12 Q3 7 7 7 L8 3.500 L10 7 Q9 10 6 11.5 L2.500 13 Z" fill="#e8261c"/><svg x="8.500" y="8" width="6" height="8" viewBox="0 0 6 8"><rect x="0.5" y="0.5" width="5" height="7" rx="1.8" fill="#f7c948" stroke="#b47a12" stroke-width="1"/><path d="M1 2.5 Q3 3.6 5 2.5" fill="none" stroke="#b47a12" stroke-width="0.8"/></svg></svg>
<div class="t" style="left:42px;top:108px;color:#9a7c5c;font-size:11px;"><i class="c10">&gt;</i></div>
<div class="t" style="left:53px;top:109px;"><i class="qm16">IRI</i><i class="qm33">_</i><i class="qm3">Testing</i><i class="qm33">_</i><i class="q1">Health</i><i class="qm15">Care</i><i class="qm33">_</i><i class="qm10">APPOINTMENT</i><i class="qm7">.</i><i class="qm4">scl</i></div>
<svg class="a" style="left:24px;top:128px;" width="15" height="16" viewBox="0 0 15 16"><svg x="0" y="0" width="12" height="15" viewBox="0 0 12 15"><path d="M0.5 0.5 H8 L11.5 4 V14.5 H0.5 Z" fill="#fff" stroke="#9a9a8a" stroke-width="1"/><path d="M8 0.5 V4 H11.5" fill="#ece6c8" stroke="#b0a670" stroke-width="1"/></svg><path d="M2 12 Q3 7 7 7 L8 3.500 L10 7 Q9 10 6 11.5 L2.500 13 Z" fill="#e8261c"/><svg x="8.500" y="8" width="6" height="8" viewBox="0 0 6 8"><rect x="0.5" y="0.5" width="5" height="7" rx="1.8" fill="#f7c948" stroke="#b47a12" stroke-width="1"/><path d="M1 2.5 Q3 3.6 5 2.5" fill="none" stroke="#b47a12" stroke-width="0.8"/></svg></svg>
<div class="t" style="left:42px;top:127px;"><i class="qm16">IRI</i><i class="qm33">_</i><i class="qm3">Testing</i><i class="qm33">_</i><i class="q1">Health</i><i class="qm15">Care</i><i class="qm33">_</i><i class="qm13">BILL</i><i class="qm7">.</i><i class="qm4">scl</i></div>
<svg class="a" style="left:24px;top:146px;" width="15" height="16" viewBox="0 0 15 16"><svg x="0" y="0" width="12" height="15" viewBox="0 0 12 15"><path d="M0.5 0.5 H8 L11.5 4 V14.5 H0.5 Z" fill="#fff" stroke="#9a9a8a" stroke-width="1"/><path d="M8 0.5 V4 H11.5" fill="#ece6c8" stroke="#b0a670" stroke-width="1"/></svg><path d="M2 12 Q3 7 7 7 L8 3.500 L10 7 Q9 10 6 11.5 L2.500 13 Z" fill="#e8261c"/><svg x="8.500" y="8" width="6" height="8" viewBox="0 0 6 8"><rect x="0.5" y="0.5" width="5" height="7" rx="1.8" fill="#f7c948" stroke="#b47a12" stroke-width="1"/><path d="M1 2.5 Q3 3.6 5 2.5" fill="none" stroke="#b47a12" stroke-width="0.8"/></svg></svg>
<div class="t" style="left:42px;top:145px;"><i class="qm16">IRI</i><i class="qm33">_</i><i class="qm3">Testing</i><i class="qm33">_</i><i class="q1">Health</i><i class="qm15">Care</i><i class="qm33">_</i><i class="qm19">DOCTOR</i><i class="qm7">.</i><i class="qm4">scl</i></div>
<svg class="a" style="left:24px;top:164px;" width="15" height="16" viewBox="0 0 15 16"><svg x="0" y="0" width="12" height="15" viewBox="0 0 12 15"><path d="M0.5 0.5 H8 L11.5 4 V14.5 H0.5 Z" fill="#fff" stroke="#9a9a8a" stroke-width="1"/><path d="M8 0.5 V4 H11.5" fill="#ece6c8" stroke="#b0a670" stroke-width="1"/></svg><path d="M2 12 Q3 7 7 7 L8 3.500 L10 7 Q9 10 6 11.5 L2.500 13 Z" fill="#e8261c"/><svg x="8.500" y="8" width="6" height="8" viewBox="0 0 6 8"><rect x="0.5" y="0.5" width="5" height="7" rx="1.8" fill="#f7c948" stroke="#b47a12" stroke-width="1"/><path d="M1 2.5 Q3 3.6 5 2.5" fill="none" stroke="#b47a12" stroke-width="0.8"/></svg></svg>
<div class="t" style="left:42px;top:163px;"><i class="qm16">IRI</i><i class="qm33">_</i><i class="qm3">Testing</i><i class="qm33">_</i><i class="q1">Health</i><i class="qm15">Care</i><i class="qm33">_</i><i class="qm17">INSURANCE</i><i class="qm7">.</i><i class="qm4">scl</i></div>
<div class="a" style="left:19px;top:180px;width:265px;height:18px;background:#d9d9d9;"></div>
<svg class="a" style="left:24px;top:182px;" width="15" height="16" viewBox="0 0 15 16"><svg x="0" y="0" width="12" height="15" viewBox="0 0 12 15"><path d="M0.5 0.5 H8 L11.5 4 V14.5 H0.5 Z" fill="#fff" stroke="#9a9a8a" stroke-width="1"/><path d="M8 0.5 V4 H11.5" fill="#ece6c8" stroke="#b0a670" stroke-width="1"/></svg><path d="M2 12 Q3 7 7 7 L8 3.500 L10 7 Q9 10 6 11.5 L2.500 13 Z" fill="#e8261c"/><svg x="8.500" y="8" width="6" height="8" viewBox="0 0 6 8"><rect x="0.5" y="0.5" width="5" height="7" rx="1.8" fill="#f7c948" stroke="#b47a12" stroke-width="1"/><path d="M1 2.5 Q3 3.6 5 2.5" fill="none" stroke="#b47a12" stroke-width="0.8"/></svg></svg>
<div class="t" style="left:42px;top:181px;"><i class="qm16">IRI</i><i class="qm33">_</i><i class="qm3">Testing</i><i class="qm33">_</i><i class="q1">Health</i><i class="qm15">Care</i><i class="qm33">_</i><i class="qm17">PATIENT</i><i class="qm33">_</i><i class="qm8">INFO</i><i class="qm33">_</i><i class="qm29">EXT</i><i class="qm7">.</i><i class="qm4">scl</i></div>
<svg class="a" style="left:24px;top:200px;" width="15" height="16" viewBox="0 0 15 16"><svg x="0" y="0" width="12" height="15" viewBox="0 0 12 15"><path d="M0.5 0.5 H8 L11.5 4 V14.5 H0.5 Z" fill="#fff" stroke="#9a9a8a" stroke-width="1"/><path d="M8 0.5 V4 H11.5" fill="#ece6c8" stroke="#b0a670" stroke-width="1"/></svg><path d="M2 12 Q3 7 7 7 L8 3.500 L10 7 Q9 10 6 11.5 L2.500 13 Z" fill="#e8261c"/><svg x="8.500" y="8" width="6" height="8" viewBox="0 0 6 8"><rect x="0.5" y="0.5" width="5" height="7" rx="1.8" fill="#f7c948" stroke="#b47a12" stroke-width="1"/><path d="M1 2.5 Q3 3.6 5 2.5" fill="none" stroke="#b47a12" stroke-width="0.8"/></svg></svg>
<div class="t" style="left:42px;top:199px;"><i class="qm16">IRI</i><i class="qm33">_</i><i class="qm3">Testing</i><i class="qm33">_</i><i class="q1">Health</i><i class="qm15">Care</i><i class="qm33">_</i><i class="qm17">PATIENT</i><i class="qm33">_</i><i class="qm22">PRESCRIPTION</i><i class="qm7">.</i><i class="qm4">scl</i></div>
<svg class="a" style="left:24px;top:218px;" width="15" height="16" viewBox="0 0 15 16"><svg x="0" y="0" width="12" height="15" viewBox="0 0 12 15"><path d="M0.5 0.5 H8 L11.5 4 V14.5 H0.5 Z" fill="#fff" stroke="#9a9a8a" stroke-width="1"/><path d="M8 0.5 V4 H11.5" fill="#ece6c8" stroke="#b0a670" stroke-width="1"/></svg><path d="M2 12 Q3 7 7 7 L8 3.500 L10 7 Q9 10 6 11.5 L2.500 13 Z" fill="#e8261c"/><svg x="8.500" y="8" width="6" height="8" viewBox="0 0 6 8"><rect x="0.5" y="0.5" width="5" height="7" rx="1.8" fill="#f7c948" stroke="#b47a12" stroke-width="1"/><path d="M1 2.5 Q3 3.6 5 2.5" fill="none" stroke="#b47a12" stroke-width="0.8"/></svg></svg>
<div class="t" style="left:42px;top:216px;color:#9a7c5c;font-size:11px;"><i class="c10">&gt;</i></div>
<div class="t" style="left:53px;top:217px;"><i class="qm16">IRI</i><i class="qm33">_</i><i class="qm3">Testing</i><i class="qm33">_</i><i class="q1">Health</i><i class="qm15">Care</i><i class="qm33">_</i><i class="qm17">PATIENT</i><i class="qm7">.</i><i class="qm4">scl</i></div>
<svg class="a" style="left:24px;top:236px;" width="15" height="16" viewBox="0 0 15 16"><svg x="0" y="0" width="12" height="15" viewBox="0 0 12 15"><path d="M0.5 0.5 H8 L11.5 4 V14.5 H0.5 Z" fill="#fff" stroke="#9a9a8a" stroke-width="1"/><path d="M8 0.5 V4 H11.5" fill="#ece6c8" stroke="#b0a670" stroke-width="1"/></svg><path d="M2 12 Q3 7 7 7 L8 3.500 L10 7 Q9 10 6 11.5 L2.500 13 Z" fill="#e8261c"/><svg x="8.500" y="8" width="6" height="8" viewBox="0 0 6 8"><rect x="0.5" y="0.5" width="5" height="7" rx="1.8" fill="#f7c948" stroke="#b47a12" stroke-width="1"/><path d="M1 2.5 Q3 3.6 5 2.5" fill="none" stroke="#b47a12" stroke-width="0.8"/></svg></svg>
<div class="t" style="left:42px;top:235px;"><i class="qm16">IRI</i><i class="qm33">_</i><i class="qm3">Testing</i><i class="qm33">_</i><i class="q1">Health</i><i class="qm15">Care</i><i class="qm33">_</i><i class="qm22">PRESCRIPTION</i><i class="qm7">.</i><i class="qm4">scl</i></div>
<svg class="a" style="left:22px;top:254px;" width="16" height="16" viewBox="0 0 16 16"><svg x="0" y="0" width="12" height="15" viewBox="0 0 12 15"><path d="M0.5 0.5 H8 L11.5 4 V14.5 H0.5 Z" fill="#fff" stroke="#9a9a8a" stroke-width="1"/><path d="M8 0.5 V4 H11.5" fill="#ece6c8" stroke="#b0a670" stroke-width="1"/></svg><path d="M6.500 6 Q5 6 5 7.500 V9 Q5 10 4 10 Q5 10 5 11 V12.500 Q5 14 6.500 14" stroke="#7a0a5a" stroke-width="1.500" fill="none"/><svg x="9" y="8" width="6" height="8" viewBox="0 0 6 8"><rect x="0.5" y="0.5" width="5" height="7" rx="1.8" fill="#f7c948" stroke="#b47a12" stroke-width="1"/><path d="M1 2.5 Q3 3.6 5 2.5" fill="none" stroke="#b47a12" stroke-width="0.8"/></svg></svg>
<div class="t" style="left:42px;top:253px;"><i class="q0">new</i><i class="qm33">_</i><i class="qm9">class</i><i class="q2">Protection</i><i class="qm7">.</i><i class="q2">bat</i></div>
<svg class="a" style="left:23px;top:272px;" width="15" height="16" viewBox="0 0 15 16"><svg x="1" y="0" width="12" height="15" viewBox="0 0 12 15"><path d="M0.5 0.5 H8 L11.5 4 V14.5 H0.5 Z" fill="#fff" stroke="#9a9a8a" stroke-width="1"/><path d="M8 0.5 V4 H11.5" fill="#ece6c8" stroke="#b0a670" stroke-width="1"/></svg><rect x="0.500" y="1.500" width="4" height="3" fill="#fff" stroke="#606060" stroke-width="0.800"/><rect x="4" y="6" width="4" height="3.500" fill="#d0d0d8" stroke="#606060" stroke-width="0.800"/><path d="M2.500 4.500 V7.500 H4 M6 9.500 V12" stroke="#606060" stroke-width="0.800" fill="none"/><svg x="8.500" y="8" width="6" height="8" viewBox="0 0 6 8"><rect x="0.5" y="0.5" width="5" height="7" rx="1.8" fill="#f7c948" stroke="#b47a12" stroke-width="1"/><path d="M1 2.5 Q3 3.6 5 2.5" fill="none" stroke="#b47a12" stroke-width="0.8"/></svg></svg>
<div class="t" style="left:42px;top:271px;"><i class="q0">new</i><i class="qm33">_</i><i class="qm9">class</i><i class="q2">Protection</i><i class="qm7">.</i><i class="q8">flow</i></div>
<svg class="a" style="left:24px;top:290px;" width="15" height="16" viewBox="0 0 15 16"><svg x="0" y="0" width="12" height="15" viewBox="0 0 12 15"><path d="M0.5 0.5 H8 L11.5 4 V14.5 H0.5 Z" fill="#fff" stroke="#9a9a8a" stroke-width="1"/><path d="M8 0.5 V4 H11.5" fill="#ece6c8" stroke="#b0a670" stroke-width="1"/></svg><path d="M2.500 5 L4.500 12 M6 6 V11 M4.500 8 H8 M7.500 6.500 L8.500 5.500" stroke="#1a2ae0" stroke-width="1.200" fill="none"/><svg x="8.500" y="8" width="6" height="8" viewBox="0 0 6 8"><rect x="0.5" y="0.5" width="5" height="7" rx="1.8" fill="#f7c948" stroke="#b47a12" stroke-width="1"/><path d="M1 2.5 Q3 3.6 5 2.5" fill="none" stroke="#b47a12" stroke-width="0.8"/></svg></svg>
<div class="t" style="left:42px;top:289px;"><i class="q2">temp</i><i class="qm7">.</i><i class="q9">txt</i></div>
<svg class="a" style="left:24px;top:308px;" width="15" height="16" viewBox="0 0 15 16"><svg x="0" y="0" width="12" height="15" viewBox="0 0 12 15"><path d="M0.5 0.5 H8 L11.5 4 V14.5 H0.5 Z" fill="#fff" stroke="#9a9a8a" stroke-width="1"/><path d="M8 0.5 V4 H11.5" fill="#ece6c8" stroke="#b0a670" stroke-width="1"/></svg><path d="M2.500 5 L4.500 12 M6 6 V11 M4.500 8 H8" stroke="#1a2ae0" stroke-width="1.200" fill="none"/><path d="M8 9.500 Q10.500 8.500 10.500 10.500 Q10.500 11.500 9.300 12 M9.300 13.500 V14.500" stroke="#201890" stroke-width="1.300" fill="none"/></svg>
<div class="t" style="left:42px;top:307px;"><i class="qm2">test</i><i class="qm7">.</i><i class="q9">txt</i></div>
<svg class="a" style="left:6px;top:325px;" width="17" height="16" viewBox="0 0 18 16"><g transform="translate(0,2.5)"><path d="M1.500 11.500 L1.500 2.500 Q1.500 1.500 2.500 1.500 L5.500 1.500 L7 3 L12 3 Q13 3 13 4.500 L13 5.500" fill="#fbe7b0" stroke="#b8802a" stroke-width="1"/><path d="M1.500 11.500 L4.500 5.500 L15.500 5.500 L12.500 11.500 Z" fill="url(#gFold)" stroke="#b8802a" stroke-width="1"/></g><svg x="10.500" y="8" width="6" height="8" viewBox="0 0 6 8"><rect x="0.5" y="0.5" width="5" height="7" rx="1.8" fill="#f7c948" stroke="#b47a12" stroke-width="1"/><path d="M1 2.5 Q3 3.6 5 2.5" fill="none" stroke="#b47a12" stroke-width="0.8"/></svg></svg>
<div class="t" style="left:26px;top:324px;color:#9a7c5c;font-size:11px;"><i class="c10">&gt;</i></div>
<div class="t" style="left:37px;top:325px;"><i class="qm4">riskscorer</i><i class="qm33">_</i><i class="q9">output</i></div>
<svg class="a" style="left:6px;top:343px;" width="17" height="16" viewBox="0 0 18 16"><g transform="translate(0,2.5)"><path d="M1.500 11.500 L1.500 2.500 Q1.500 1.500 2.500 1.500 L5.500 1.500 L7 3 L12 3 Q13 3 13 4.500 L13 5.500" fill="#fbe7b0" stroke="#b8802a" stroke-width="1"/><path d="M1.500 11.500 L4.500 5.500 L15.500 5.500 L12.500 11.500 Z" fill="url(#gFold)" stroke="#b8802a" stroke-width="1"/></g><svg x="10.500" y="8" width="6" height="8" viewBox="0 0 6 8"><rect x="0.5" y="0.5" width="5" height="7" rx="1.8" fill="#f7c948" stroke="#b47a12" stroke-width="1"/><path d="M1 2.5 Q3 3.6 5 2.5" fill="none" stroke="#b47a12" stroke-width="0.8"/></svg></svg>
<div class="t" style="left:26px;top:343px;"><i class="qm7">schema</i><i class="qm33">_</i><i class="qm6">dataclass</i><i class="qm33">_</i><i class="qm7">search</i></div>
<svg class="a" style="left:6px;top:361px;" width="17" height="16" viewBox="0 0 18 16"><g transform="translate(0,2.5)"><path d="M1.500 11.500 L1.500 2.500 Q1.500 1.500 2.500 1.500 L5.500 1.500 L7 3 L12 3 Q13 3 13 4.500 L13 5.500" fill="#fbe7b0" stroke="#b8802a" stroke-width="1"/><path d="M1.500 11.500 L4.500 5.500 L15.500 5.500 L12.500 11.500 Z" fill="url(#gFold)" stroke="#b8802a" stroke-width="1"/></g><svg x="10.500" y="8" width="6" height="8" viewBox="0 0 6 8"><rect x="0.5" y="0.5" width="5" height="7" rx="1.8" fill="#f7c948" stroke="#b47a12" stroke-width="1"/><path d="M1 2.5 Q3 3.6 5 2.5" fill="none" stroke="#b47a12" stroke-width="0.8"/></svg></svg>
<div class="t" style="left:26px;top:361px;"><i class="qm20">SQL</i></div>
<svg class="a" style="left:8px;top:380px;" width="15" height="16" viewBox="0 0 15 16"><svg x="0" y="0" width="12" height="15" viewBox="0 0 12 15"><path d="M0.5 0.5 H8 L11.5 4 V14.5 H0.5 Z" fill="#fff" stroke="#9a9a8a" stroke-width="1"/><path d="M8 0.5 V4 H11.5" fill="#ece6c8" stroke="#b0a670" stroke-width="1"/></svg><path d="M3 5 L5.500 9 L8 5 M5.500 9 L4 12" stroke="#303a70" stroke-width="1.300" fill="none"/><svg x="8.500" y="8" width="6" height="8" viewBox="0 0 6 8"><rect x="0.5" y="0.5" width="5" height="7" rx="1.8" fill="#f7c948" stroke="#b47a12" stroke-width="1"/><path d="M1 2.5 Q3 3.6 5 2.5" fill="none" stroke="#b47a12" stroke-width="0.8"/></svg></svg>
<div class="t" style="left:26px;top:379px;"><i class="qm31">DSE</i><i class="qm33">_</i><i class="q0">New</i><i class="qm7">.</i><i class="q2">xml</i></div>
<svg class="a" style="left:5px;top:397px;" width="18" height="17" viewBox="0 0 18 17"><svg x="2" y="0.5" width="13" height="16" viewBox="0 0 12 15"><path d="M0.5 0.5 H8 L11.5 4 V14.5 H0.5 Z" fill="#fff" stroke="#9a9a8a" stroke-width="1"/><path d="M8 0.5 V4 H11.5" fill="#ece6c8" stroke="#b0a670" stroke-width="1"/></svg><rect x="0.500" y="3" width="5" height="6" fill="#8fb0d8" stroke="#607080" stroke-width="0.700"/><rect x="6" y="5" width="4" height="6" fill="#c0c8d0" stroke="#808890" stroke-width="0.700"/><rect x="11" y="6.500" width="5" height="2" fill="#c02030"/><svg x="11.500" y="9" width="6" height="8" viewBox="0 0 6 8"><rect x="0.5" y="0.5" width="5" height="7" rx="1.8" fill="#f7c948" stroke="#b47a12" stroke-width="1"/><path d="M1 2.5 Q3 3.6 5 2.5" fill="none" stroke="#b47a12" stroke-width="0.8"/></svg></svg>
<div class="t" style="left:26px;top:397px;"><i class="q4">iri</i><i class="qm2">Library</i><i class="qm7">.</i><i class="qm2">data</i><i class="qm16">Class</i><i class="q4">Map</i></div>
<svg class="a" style="left:8px;top:416px;" width="12" height="15" viewBox="0 0 12 15"><path d="M0.5 0.5 H8 L11.5 4 V14.5 H0.5 Z" fill="#fff" stroke="#9a9a8a" stroke-width="1"/><path d="M8 0.5 V4 H11.5" fill="#ece6c8" stroke="#b0a670" stroke-width="1"/></svg>
<div class="t" style="left:26px;top:415px;"><i class="q4">iri</i><i class="qm2">Library</i><i class="qm7">.</i><i class="q4">iri</i><i class="qm2">Library</i></div>
</div>
<div class="a" style="left:411px;top:96px;width:18px;height:421px;background:#f0f0f0;"></div>
<div class="a" style="left:411px;top:181px;width:15px;height:260px;background:#cdcdcd;"></div>
<svg class="a" style="left:415px;top:102px;" width="8" height="6" viewBox="0 0 8 6"><path d="M0.500 5 L4 1.500 L7.500 5" fill="none" stroke="#505050" stroke-width="1.800"/></svg>
<svg class="a" style="left:415px;top:505px;" width="8" height="6" viewBox="0 0 8 6"><path d="M0.500 1 L4 4.500 L7.500 1" fill="none" stroke="#505050" stroke-width="1.800"/></svg>
<div class="a" style="left:3px;top:517px;width:408px;height:18px;background:#f0f0f0;"></div>
<div class="a" style="left:45px;top:517px;width:343px;height:15px;background:#cdcdcd;"></div>
<svg class="a" style="left:8px;top:521px;" width="6" height="8" viewBox="0 0 6 8"><path d="M5 0.500 L1.500 4 L5 7.500" fill="none" stroke="#505050" stroke-width="1.800"/></svg>
<svg class="a" style="left:400px;top:521px;" width="6" height="8" viewBox="0 0 6 8"><path d="M1 0.500 L4.500 4 L1 7.500" fill="none" stroke="#505050" stroke-width="1.800"/></svg>
<div class="a" style="left:411px;top:517px;width:18px;height:18px;background:#f0f0f0;"></div>
<div class="a" style="left:0px;top:540px;width:430px;height:328px;border:1px solid #9a9a9a;border-radius:4px 4px 0 0;background:#f0f0f0;box-sizing:border-box"></div>
<div class="a" style="left:158px;top:563px;width:272px;height:1px;background:#9a9a9a;"></div>
<div class="a" style="left:3px;top:566px;width:424px;height:301px;background:#fff;"></div>
<div class="a" style="left:1px;top:541px;width:157px;height:24px;background:#f3f3f3;"></div>
<div class="a" style="left:158px;top:541px;width:1px;height:23px;background:#9a9a9a;"></div>
<div class="a" style="left:0px;top:540px;width:159px;height:2px;background:#747474;border-radius:3px 0 0 0;"></div>
<div class="a" style="left:1px;top:542px;width:158px;height:1px;background:#a8a8a8;"></div>
<svg class="a" style="left:4px;top:544px" width="17" height="17"><path d="M0.500 2 L3 4 L5.500 1 L8 4 L10.500 1 L13 3 V13 L10.500 11 L8 14 L5.500 11 L3 14 L0.500 12 Z" fill="#a8d830" stroke="#6a7a30" stroke-width="0.800"/><path d="M1 7 L3 9 L5.500 6.500 L8 9 L10.500 6.500 L13 8" stroke="#3a90c0" stroke-width="1.500" fill="none"/><rect x="8.500" y="6" width="7.500" height="10" rx="3" fill="#5a8af8" stroke="#3a68e0" stroke-width="0.600"/><ellipse cx="12.200" cy="8" rx="3" ry="1.300" fill="#a8c4ff"/></svg>
<div class="t" style="left:24px;top:544px;"><i class="qm7">Data Source </i><i class="qm4">Explorer</i></div>
<svg class="a" style="left:142px;top:548px;" width="10" height="10" viewBox="0 0 10 10"><path d="M0.500 0.500 L9.500 9.500 M9.500 0.500 L0.500 9.500" stroke="#1a1a1a" stroke-width="1.100"/></svg>
<svg class="a" style="left:169px;top:546px;" width="14" height="14" viewBox="0 0 14 14"><rect x="0.500" y="0.500" width="10" height="10" fill="#f2f7fc" stroke="#a9c0dc"/><rect x="2.500" y="2.500" width="10.500" height="10.500" fill="url(#gBlue)" stroke="#86a6cf"/><path d="M4.500 8 H11" stroke="#1c5aa6" stroke-width="1.600"/></svg>
<svg class="a" style="left:190px;top:544px;" width="16" height="16" viewBox="0 0 16 16"><path d="M1 4.500 L5.500 0.800 V3 H12 V6 H5.500 V8.200 Z" fill="#fdeeb8" stroke="#c8901c" stroke-width="1.100"/><path d="M15 11.500 L10.500 7.800 V10 H4 V13 H10.500 V15.200 Z" fill="#fdeeb8" stroke="#c8901c" stroke-width="1.100"/></svg>
<div class="a" style="left:212px;top:545px;width:1px;height:17px;background:#9a9a9a;"></div>
<svg class="a" style="left:222px;top:544px" width="16" height="16"><path d="M3.500 3 V13 H7 M3.500 8 H7" stroke="#5a88c0" fill="none"/><rect x="1.500" y="1.500" width="4" height="3" fill="#dbe8f8" stroke="#5a88c0"/><rect x="7.500" y="6.500" width="4" height="3" fill="#dbe8f8" stroke="#5a88c0"/><rect x="7.500" y="11.500" width="4" height="3" fill="#dbe8f8" stroke="#5a88c0"/></svg>
<div class="a" style="left:243px;top:545px;width:1px;height:17px;background:#9a9a9a;"></div>
<svg class="a" style="left:251px;top:544px" width="18" height="16"><path d="M1 7 H6 Q7 4 10 4.500 Q15 5 15.500 8 Q15.500 12 11 12.500 Q7 12.500 6 10 H1 Z" fill="#f0b030" stroke="#8a5a00" stroke-width="1"/><path d="M8 7 Q10 9 12 7" stroke="#8a5a00" fill="none" stroke-width="1.200"/><path d="M13 0.500 L13.800 2.200 L15.500 3 L13.800 3.800 L13 5.500 L12.200 3.800 L10.500 3 L12.200 2.200 Z" fill="#ffe060" stroke="#b89010" stroke-width="0.500"/></svg>
<div class="a" style="left:274px;top:545px;width:1px;height:17px;background:#9a9a9a;"></div>
<svg class="a" style="left:282px;top:544px" width="17" height="17"><path d="M1 8 V15.500 H16 V8 H12.500 V12 H4.500 V8 Z" fill="#c8dcf4" stroke="#3a68b0"/><path d="M5 1 L10 7 M10 3.500 V7 H6.500" stroke="#2a68b8" stroke-width="1.300" fill="none"/></svg>
<svg class="a" style="left:305px;top:544px" width="17" height="17"><path d="M1 8 V15.500 H16 V8 H12.500 V12 H4.500 V8 Z" fill="#c8dcf4" stroke="#3a68b0"/><path d="M7 9 L13 1.500 M9.500 1.500 H13 V5" stroke="#2a68b8" stroke-width="1.300" fill="none"/></svg>
<div class="a" style="left:328px;top:545px;width:1px;height:17px;background:#9a9a9a;"></div>
<svg class="a" style="left:338px;top:544px" width="16" height="17"><rect x="1.500" y="1.500" width="10" height="13" fill="#dbe8f8" stroke="#3a68b0" stroke-width="1.300"/><rect x="3.500" y="2" width="6" height="4" fill="#fff"/><rect x="5.500" y="9.500" width="9" height="6" fill="#f4f4ec" stroke="#8a8a7a"/><path d="M7 11.500 H13 M7 13.500 H13" stroke="#8a8a7a" stroke-width="0.800"/></svg>
<svg class="a" style="left:365px;top:544px;" width="4" height="16" viewBox="0 0 4 16"><circle cx="2" cy="3" r="1.500" fill="#fff" stroke="#6a6a6a" stroke-width="0.800"/><circle cx="2" cy="8" r="1.500" fill="#fff" stroke="#6a6a6a" stroke-width="0.800"/><circle cx="2" cy="13" r="1.500" fill="#fff" stroke="#6a6a6a" stroke-width="0.800"/></svg>
<svg class="a" style="left:386px;top:547px;" width="10" height="5" viewBox="0 0 10 5"><rect x="0.600" y="0.600" width="8.800" height="3" fill="#fff" stroke="#000" stroke-width="1.200"/></svg>
<svg class="a" style="left:408px;top:547px;" width="10" height="10" viewBox="0 0 10 10"><rect x="0.500" y="0.500" width="9" height="9" fill="#fff" stroke="#000" stroke-width="1"/><rect x="0" y="0" width="10" height="2" fill="#000"/></svg>
<div class="a" style="left:3px;top:565px;width:408px;height:302px;overflow:hidden">
<svg class="a" style="left:87px;top:4px;" width="8" height="12" viewBox="0 0 8 12"><path d="M1.500 1.300 L6.300 6 L1.500 10.700" fill="none" stroke="#a4a4a4" stroke-width="1.900"/></svg>
<svg class="a" style="left:101px;top:2.5px;" width="14" height="13" viewBox="0 0 14 13"><rect x="0.5" y="0.5" width="13" height="12" fill="#fffdf4" stroke="#8a7a4a" stroke-width="1"/><rect x="1" y="1" width="12" height="3" fill="url(#gTab)"/><path d="M1 4.5 H13 M1 7.5 H13 M1 10 H13 M5 4 V12 M9 4 V12" stroke="#b09a5a" stroke-width="1" fill="none"/></svg>
<div class="t" style="left:120px;top:1px;"><i class="qm10">APPOINTMENT</i></div>
<svg class="a" style="left:87px;top:22px;" width="8" height="12" viewBox="0 0 8 12"><path d="M1.500 1.300 L6.300 6 L1.500 10.700" fill="none" stroke="#a4a4a4" stroke-width="1.900"/></svg>
<svg class="a" style="left:101px;top:20.5px;" width="14" height="13" viewBox="0 0 14 13"><rect x="0.5" y="0.5" width="13" height="12" fill="#fffdf4" stroke="#8a7a4a" stroke-width="1"/><rect x="1" y="1" width="12" height="3" fill="url(#gTab)"/><path d="M1 4.5 H13 M1 7.5 H13 M1 10 H13 M5 4 V12 M9 4 V12" stroke="#b09a5a" stroke-width="1" fill="none"/></svg>
<div class="t" style="left:120px;top:19px;"><i class="qm13">BILL</i></div>
<svg class="a" style="left:87px;top:40px;" width="8" height="12" viewBox="0 0 8 12"><path d="M1.500 1.300 L6.300 6 L1.500 10.700" fill="none" stroke="#a4a4a4" stroke-width="1.900"/></svg>
<svg class="a" style="left:101px;top:38.5px;" width="14" height="13" viewBox="0 0 14 13"><rect x="0.5" y="0.5" width="13" height="12" fill="#fffdf4" stroke="#8a7a4a" stroke-width="1"/><rect x="1" y="1" width="12" height="3" fill="url(#gTab)"/><path d="M1 4.5 H13 M1 7.5 H13 M1 10 H13 M5 4 V12 M9 4 V12" stroke="#b09a5a" stroke-width="1" fill="none"/></svg>
<div class="t" style="left:120px;top:37px;"><i class="qm19">DOCTOR</i></div>
<svg class="a" style="left:87px;top:58px;" width="8" height="12" viewBox="0 0 8 12"><path d="M1.500 1.300 L6.300 6 L1.500 10.700" fill="none" stroke="#a4a4a4" stroke-width="1.900"/></svg>
<svg class="a" style="left:101px;top:56.5px;" width="14" height="13" viewBox="0 0 14 13"><rect x="0.5" y="0.5" width="13" height="12" fill="#fffdf4" stroke="#8a7a4a" stroke-width="1"/><rect x="1" y="1" width="12" height="3" fill="url(#gTab)"/><path d="M1 4.5 H13 M1 7.5 H13 M1 10 H13 M5 4 V12 M9 4 V12" stroke="#b09a5a" stroke-width="1" fill="none"/></svg>
<div class="t" style="left:120px;top:55px;"><i class="qm17">INSURANCE</i></div>
<div class="a" style="left:97px;top:72px;width:68px;height:18px;background:#d9d9d9;"></div>
<svg class="a" style="left:87px;top:76px;" width="8" height="12" viewBox="0 0 8 12"><path d="M1.500 1.300 L6.300 6 L1.500 10.700" fill="none" stroke="#a4a4a4" stroke-width="1.900"/></svg>
<svg class="a" style="left:101px;top:74.5px;" width="14" height="13" viewBox="0 0 14 13"><rect x="0.5" y="0.5" width="13" height="12" fill="#fffdf4" stroke="#8a7a4a" stroke-width="1"/><rect x="1" y="1" width="12" height="3" fill="url(#gTab)"/><path d="M1 4.5 H13 M1 7.5 H13 M1 10 H13 M5 4 V12 M9 4 V12" stroke="#b09a5a" stroke-width="1" fill="none"/></svg>
<div class="t" style="left:120px;top:73px;"><i class="qm17">PATIENT</i></div>
<svg class="a" style="left:87px;top:94px;" width="8" height="12" viewBox="0 0 8 12"><path d="M1.500 1.300 L6.300 6 L1.500 10.700" fill="none" stroke="#a4a4a4" stroke-width="1.900"/></svg>
<svg class="a" style="left:101px;top:92.5px;" width="14" height="13" viewBox="0 0 14 13"><rect x="0.5" y="0.5" width="13" height="12" fill="#fffdf4" stroke="#8a7a4a" stroke-width="1"/><rect x="1" y="1" width="12" height="3" fill="url(#gTab)"/><path d="M1 4.5 H13 M1 7.5 H13 M1 10 H13 M5 4 V12 M9 4 V12" stroke="#b09a5a" stroke-width="1" fill="none"/></svg>
<div class="t" style="left:120px;top:91px;"><i class="qm17">PATIENT</i><i class="qm33">_</i><i class="qm8">INFO</i><i class="qm33">_</i><i class="qm29">EXT</i></div>
<svg class="a" style="left:87px;top:112px;" width="8" height="12" viewBox="0 0 8 12"><path d="M1.500 1.300 L6.300 6 L1.500 10.700" fill="none" stroke="#a4a4a4" stroke-width="1.900"/></svg>
<svg class="a" style="left:101px;top:110.5px;" width="14" height="13" viewBox="0 0 14 13"><rect x="0.5" y="0.5" width="13" height="12" fill="#fffdf4" stroke="#8a7a4a" stroke-width="1"/><rect x="1" y="1" width="12" height="3" fill="url(#gTab)"/><path d="M1 4.5 H13 M1 7.5 H13 M1 10 H13 M5 4 V12 M9 4 V12" stroke="#b09a5a" stroke-width="1" fill="none"/></svg>
<div class="t" style="left:120px;top:109px;"><i class="qm17">PATIENT</i><i class="qm33">_</i><i class="qm22">PRESCRIPTION</i></div>
<svg class="a" style="left:87px;top:130px;" width="8" height="12" viewBox="0 0 8 12"><path d="M1.500 1.300 L6.300 6 L1.500 10.700" fill="none" stroke="#a4a4a4" stroke-width="1.900"/></svg>
<svg class="a" style="left:101px;top:128.5px;" width="14" height="13" viewBox="0 0 14 13"><rect x="0.5" y="0.5" width="13" height="12" fill="#fffdf4" stroke="#8a7a4a" stroke-width="1"/><rect x="1" y="1" width="12" height="3" fill="url(#gTab)"/><path d="M1 4.5 H13 M1 7.5 H13 M1 10 H13 M5 4 V12 M9 4 V12" stroke="#b09a5a" stroke-width="1" fill="none"/></svg>
<div class="t" style="left:120px;top:127px;"><i class="qm17">PATIENT</i><i class="qm13">1</i></div>
<svg class="a" style="left:87px;top:148px;" width="8" height="12" viewBox="0 0 8 12"><path d="M1.500 1.300 L6.300 6 L1.500 10.700" fill="none" stroke="#a4a4a4" stroke-width="1.900"/></svg>
<svg class="a" style="left:101px;top:146.5px;" width="14" height="13" viewBox="0 0 14 13"><rect x="0.5" y="0.5" width="13" height="12" fill="#fffdf4" stroke="#8a7a4a" stroke-width="1"/><rect x="1" y="1" width="12" height="3" fill="url(#gTab)"/><path d="M1 4.5 H13 M1 7.5 H13 M1 10 H13 M5 4 V12 M9 4 V12" stroke="#b09a5a" stroke-width="1" fill="none"/></svg>
<div class="t" style="left:120px;top:145px;"><i class="qm17">PATIENT</i><i class="qm13">2</i></div>
<svg class="a" style="left:87px;top:166px;" width="8" height="12" viewBox="0 0 8 12"><path d="M1.500 1.300 L6.300 6 L1.500 10.700" fill="none" stroke="#a4a4a4" stroke-width="1.900"/></svg>
<svg class="a" style="left:101px;top:164.5px;" width="14" height="13" viewBox="0 0 14 13"><rect x="0.5" y="0.5" width="13" height="12" fill="#fffdf4" stroke="#8a7a4a" stroke-width="1"/><rect x="1" y="1" width="12" height="3" fill="url(#gTab)"/><path d="M1 4.5 H13 M1 7.5 H13 M1 10 H13 M5 4 V12 M9 4 V12" stroke="#b09a5a" stroke-width="1" fill="none"/></svg>
<div class="t" style="left:120px;top:163px;"><i class="qm22">PRESCRIPTION</i></div>
<svg class="a" style="left:71px;top:184px;" width="8" height="12" viewBox="0 0 8 12"><path d="M1.500 1.300 L6.300 6 L1.500 10.700" fill="none" stroke="#a4a4a4" stroke-width="1.900"/></svg>
<svg class="a" style="left:83px;top:182.5px;" width="15" height="13" viewBox="0 0 16 14"><path d="M1.5 3.5 Q1.5 1.5 3.5 1.5 L6 1.5 L7.5 3.5 L13 3.5 Q14.5 3.5 14.5 5 L14.5 11 Q14.5 12.5 13 12.5 L3 12.5 Q1.5 12.5 1.5 11 Z" fill="url(#gFold)" stroke="#c8922a" stroke-width="1"/></svg>
<div class="t" style="left:104px;top:181px;"><i class="qm12">User</i><i class="c10">-</i><i class="qm1">Defined</i><i class="qm7"> </i><i class="q0">Functions</i></div>
<svg class="a" style="left:71px;top:202px;" width="8" height="12" viewBox="0 0 8 12"><path d="M1.500 1.300 L6.300 6 L1.500 10.700" fill="none" stroke="#a4a4a4" stroke-width="1.900"/></svg>
<svg class="a" style="left:83px;top:200.5px;" width="15" height="13" viewBox="0 0 16 14"><path d="M1.5 3.5 Q1.5 1.5 3.5 1.5 L6 1.5 L7.5 3.5 L13 3.5 Q14.5 3.5 14.5 5 L14.5 11 Q14.5 12.5 13 12.5 L3 12.5 Q1.5 12.5 1.5 11 Z" fill="url(#gFold)" stroke="#c8922a" stroke-width="1"/></svg>
<div class="t" style="left:104px;top:199px;"><i class="qm12">User</i><i class="c10">-</i><i class="qm1">Defined</i><i class="qm7"> </i><i class="qm12">Types</i></div>
<svg class="a" style="left:71px;top:220px;" width="8" height="12" viewBox="0 0 8 12"><path d="M1.500 1.300 L6.300 6 L1.500 10.700" fill="none" stroke="#a4a4a4" stroke-width="1.900"/></svg>
<svg class="a" style="left:83px;top:218.5px;" width="15" height="13" viewBox="0 0 16 14"><path d="M1.5 3.5 Q1.5 1.5 3.5 1.5 L6 1.5 L7.5 3.5 L13 3.5 Q14.5 3.5 14.5 5 L14.5 11 Q14.5 12.5 13 12.5 L3 12.5 Q1.5 12.5 1.5 11 Z" fill="url(#gFold)" stroke="#c8922a" stroke-width="1"/></svg>
<div class="t" style="left:104px;top:217px;"><i class="qm7">Views</i></div>
<svg class="a" style="left:55px;top:238px;" width="8" height="12" viewBox="0 0 8 12"><path d="M1.500 1.300 L6.300 6 L1.500 10.700" fill="none" stroke="#a4a4a4" stroke-width="1.900"/></svg>
<svg class="a" style="left:68px;top:235px;" width="15" height="16" viewBox="0 0 16 16"><rect x="0.5" y="3.5" width="7" height="5" fill="#fff" stroke="#8a7a4a"/><rect x="1" y="4" width="6" height="2" fill="#e07b00"/><rect x="9.500" y="0.5" width="6" height="5" fill="#fff" stroke="#8a7a4a"/><rect x="10" y="1" width="5" height="2" fill="#e07b00"/><path d="M1 8 L4 11 L7 8 Z" fill="#ffb0b0" stroke="#d03030" stroke-width="0.8"/><path d="M9.500 6 L12.5 9.500 L15.5 6 Z" fill="#a0c0ff" stroke="#2050d0" stroke-width="0.8"/><rect x="1.500" y="10.5" width="13" height="5" fill="#fffdf0" stroke="#9a8a50"/><path d="M6 10.5 V15.5 M10.5 10.5 V15.5 M1.5 13 H14.5" stroke="#9a8a50" stroke-width="1"/></svg>
<div class="t" style="left:88px;top:235px;"><i class="q0">IriMega</i></div>
<svg class="a" style="left:55px;top:256px;" width="8" height="12" viewBox="0 0 8 12"><path d="M1.500 1.300 L6.300 6 L1.500 10.700" fill="none" stroke="#a4a4a4" stroke-width="1.900"/></svg>
<svg class="a" style="left:68px;top:253px;" width="15" height="16" viewBox="0 0 16 16"><rect x="0.5" y="3.5" width="7" height="5" fill="#fff" stroke="#8a7a4a"/><rect x="1" y="4" width="6" height="2" fill="#e07b00"/><rect x="9.500" y="0.5" width="6" height="5" fill="#fff" stroke="#8a7a4a"/><rect x="10" y="1" width="5" height="2" fill="#e07b00"/><path d="M1 8 L4 11 L7 8 Z" fill="#ffb0b0" stroke="#d03030" stroke-width="0.8"/><path d="M9.500 6 L12.5 9.500 L15.5 6 Z" fill="#a0c0ff" stroke="#2050d0" stroke-width="0.8"/><rect x="1.500" y="10.5" width="13" height="5" fill="#fffdf0" stroke="#9a8a50"/><path d="M6 10.5 V15.5 M10.5 10.5 V15.5 M1.5 13 H14.5" stroke="#9a8a50" stroke-width="1"/></svg>
<div class="t" style="left:88px;top:253px;"><i class="qm3">Mask</i><i class="qm7">Bank</i></div>
<svg class="a" style="left:55px;top:274px;" width="8" height="12" viewBox="0 0 8 12"><path d="M1.500 1.300 L6.300 6 L1.500 10.700" fill="none" stroke="#a4a4a4" stroke-width="1.900"/></svg>
<svg class="a" style="left:68px;top:271px;" width="15" height="16" viewBox="0 0 16 16"><rect x="0.5" y="3.5" width="7" height="5" fill="#fff" stroke="#8a7a4a"/><rect x="1" y="4" width="6" height="2" fill="#e07b00"/><rect x="9.500" y="0.5" width="6" height="5" fill="#fff" stroke="#8a7a4a"/><rect x="10" y="1" width="5" height="2" fill="#e07b00"/><path d="M1 8 L4 11 L7 8 Z" fill="#ffb0b0" stroke="#d03030" stroke-width="0.8"/><path d="M9.500 6 L12.5 9.500 L15.5 6 Z" fill="#a0c0ff" stroke="#2050d0" stroke-width="0.8"/><rect x="1.500" y="10.5" width="13" height="5" fill="#fffdf0" stroke="#9a8a50"/><path d="M6 10.5 V15.5 M10.5 10.5 V15.5 M1.5 13 H14.5" stroke="#9a8a50" stroke-width="1"/></svg>
<div class="t" style="left:88px;top:271px;"><i class="qm3">Mask</i><i class="q1">Health</i><i class="qm15">Care</i></div>
<svg class="a" style="left:19px;top:289px;" width="16" height="16" viewBox="0 0 16 16"><rect x="0" y="0" width="16" height="16" fill="#f00000"/><rect x="2.500" y="5.500" width="11" height="7" rx="3.500" fill="none" stroke="#fff" stroke-width="2"/></svg>
<div class="t" style="left:40px;top:289px;"><i class="qm4">Oracle</i><i class="qm33">_</i><i class="qm7">Bank</i></div>
</div>
<div class="a" style="left:411px;top:565px;width:18px;height:302px;background:#f0f0f0;"></div>
<div class="a" style="left:411px;top:769px;width:15px;height:74px;background:#cdcdcd;"></div>
<svg class="a" style="left:415px;top:571px;" width="8" height="6" viewBox="0 0 8 6"><path d="M0.500 5 L4 1.500 L7.500 5" fill="none" stroke="#505050" stroke-width="1.800"/></svg>
<svg class="a" style="left:415px;top:855px;" width="8" height="6" viewBox="0 0 8 6"><path d="M0.500 1 L4 4.500 L7.500 1" fill="none" stroke="#505050" stroke-width="1.800"/></svg>
<div class="a" style="left:0px;top:873px;width:430px;height:511px;border:1px solid #9a9a9a;border-radius:4px 4px 0 0;background:#f0f0f0;box-sizing:border-box"></div>
<div class="a" style="left:137px;top:896px;width:293px;height:1px;background:#9a9a9a;"></div>
<div class="a" style="left:3px;top:899px;width:424px;height:484px;background:#fff;"></div>
<div class="a" style="left:1px;top:874px;width:136px;height:24px;background:#f3f3f3;"></div>
<div class="a" style="left:137px;top:874px;width:1px;height:23px;background:#9a9a9a;"></div>
<div class="a" style="left:0px;top:873px;width:138px;height:2px;background:#747474;border-radius:3px 0 0 0;"></div>
<div class="a" style="left:1px;top:875px;width:137px;height:1px;background:#a8a8a8;"></div>
<svg class="a" style="left:4px;top:876px" width="17" height="18"><rect x="7" y="1" width="8" height="14" fill="#8a98b0" stroke="#4a5878"/><rect x="8.500" y="3" width="5" height="2" fill="#e84040"/><rect x="8.500" y="6.500" width="5" height="1.500" fill="#d0d8e8"/><path d="M0.500 14.500 H16" stroke="#606870" stroke-width="1.200"/><rect x="2.500" y="11" width="5" height="5" fill="#3a9a3a" stroke="#1a6a1a"/></svg>
<div class="t" style="left:24px;top:877px;"><i class="qm7">Remote </i><i class="qm11">Systems</i></div>
<svg class="a" style="left:119px;top:881px;" width="10" height="10" viewBox="0 0 10 10"><path d="M0.500 0.500 L9.500 9.500 M9.500 0.500 L0.500 9.500" stroke="#1a1a1a" stroke-width="1.100"/></svg>
<svg class="a" style="left:175px;top:877px" width="18" height="17"><path d="M1 14.500 H16" stroke="#606870" stroke-width="1.200"/><rect x="5.500" y="10.500" width="5" height="5" fill="#3a9a3a" stroke="#1a6a1a"/><path d="M8 10 V5" stroke="#8a8a8a"/><path d="M12.500 1 L13.500 3.200 L15.700 4 L13.500 4.800 L12.500 7 L11.500 4.800 L9.300 4 L11.500 3.200 Z" fill="#ffe060" stroke="#b89010" stroke-width="0.600"/></svg>
<svg class="a" style="left:198px;top:877px" width="17" height="17"><path d="M5.500 1.500 H12 L15.500 5 V15.500 H5.500 Z" fill="#fbf4dc" stroke="#b0a070"/><path d="M1.500 5 Q4 2.500 6.500 5 L7.500 3.500 V7.500 H3.500 L5 6.200 Q4 5 2.500 6.200 Z M7.500 12 Q5 14.500 2.500 12 L1.500 13.500 V9.500 H5.500 L4 10.800 Q5 12 6.500 10.800 Z" fill="#f0b830" stroke="#a07010" stroke-width="0.600"/></svg>
<div class="a" style="left:220px;top:878px;width:1px;height:17px;background:#9a9a9a;"></div>
<svg class="a" style="left:229px;top:877px" width="16" height="16"><path d="M1.500 8 L7.500 2.500 V5.500 H14.500 V10.500 H7.500 V13.500 Z" fill="#fafafa" stroke="#b8b8b8"/></svg>
<svg class="a" style="left:252px;top:877px" width="16" height="16"><path d="M14.500 8 L8.500 2.500 V5.500 H1.500 V10.500 H8.500 V13.500 Z" fill="#fafafa" stroke="#b8b8b8"/></svg>
<svg class="a" style="left:275px;top:877px" width="16" height="16"><rect x="1.500" y="2.500" width="11" height="10" rx="1" fill="#f0f0f0" stroke="#bcbcbc"/><path d="M4 11 Q4 6 9 6 M6.500 4 L9.500 6 L7 8.500" stroke="#a8a8a8" stroke-width="1.300" fill="none"/><path d="M8 13.500 H14" stroke="#bcbcbc"/></svg>
<div class="a" style="left:297px;top:878px;width:1px;height:17px;background:#9a9a9a;"></div>
<svg class="a" style="left:308px;top:879px;" width="14" height="14" viewBox="0 0 14 14"><rect x="0.500" y="0.500" width="10" height="10" fill="#f2f7fc" stroke="#a9c0dc"/><rect x="2.500" y="2.500" width="10.500" height="10.500" fill="url(#gBlue)" stroke="#86a6cf"/><path d="M4.500 8 H11" stroke="#1c5aa6" stroke-width="1.600"/></svg>
<div class="a" style="left:328px;top:878px;width:1px;height:17px;background:#9a9a9a;"></div>
<svg class="a" style="left:337px;top:877px;" width="16" height="16" viewBox="0 0 16 16"><path d="M1 4.500 L5.500 0.800 V3 H12 V6 H5.500 V8.200 Z" fill="#fdeeb8" stroke="#c8901c" stroke-width="1.100"/><path d="M15 11.500 L10.500 7.800 V10 H4 V13 H10.500 V15.200 Z" fill="#fdeeb8" stroke="#c8901c" stroke-width="1.100"/></svg>
<svg class="a" style="left:365px;top:877px;" width="4" height="16" viewBox="0 0 4 16"><circle cx="2" cy="3" r="1.500" fill="#fff" stroke="#6a6a6a" stroke-width="0.800"/><circle cx="2" cy="8" r="1.500" fill="#fff" stroke="#6a6a6a" stroke-width="0.800"/><circle cx="2" cy="13" r="1.500" fill="#fff" stroke="#6a6a6a" stroke-width="0.800"/></svg>
<svg class="a" style="left:386px;top:880px;" width="10" height="5" viewBox="0 0 10 5"><rect x="0.600" y="0.600" width="8.800" height="3" fill="#fff" stroke="#000" stroke-width="1.200"/></svg>
<svg class="a" style="left:408px;top:880px;" width="10" height="10" viewBox="0 0 10 10"><rect x="0.500" y="0.500" width="9" height="9" fill="#fff" stroke="#000" stroke-width="1"/><rect x="0" y="0" width="10" height="2" fill="#000"/></svg>
<div class="a" style="left:3px;top:898px;width:408px;height:466px;overflow:hidden">
<svg class="a" style="left:41px;top:4px;" width="8" height="12" viewBox="0 0 8 12"><path d="M1.500 1.300 L6.300 6 L1.500 10.700" fill="none" stroke="#a4a4a4" stroke-width="1.900"/></svg>
<svg class="a" style="left:53px;top:2.5px;" width="15" height="13" viewBox="0 0 16 14"><path d="M1.5 3.5 Q1.5 1.5 3.5 1.5 L6 1.5 L7.5 3.5 L13 3.5 Q14.5 3.5 14.5 5 L14.5 11 Q14.5 12.5 13 12.5 L3 12.5 Q1.5 12.5 1.5 11 Z" fill="url(#gFold)" stroke="#c8922a" stroke-width="1"/></svg>
<div class="t" style="left:74px;top:1px;"><i class="qm6">examples</i></div>
<svg class="a" style="left:41px;top:22px;" width="8" height="12" viewBox="0 0 8 12"><path d="M1.500 1.300 L6.300 6 L1.500 10.700" fill="none" stroke="#a4a4a4" stroke-width="1.900"/></svg>
<svg class="a" style="left:53px;top:20.5px;" width="15" height="13" viewBox="0 0 16 14"><path d="M1.5 3.5 Q1.5 1.5 3.5 1.5 L6 1.5 L7.5 3.5 L13 3.5 Q14.5 3.5 14.5 5 L14.5 11 Q14.5 12.5 13 12.5 L3 12.5 Q1.5 12.5 1.5 11 Z" fill="url(#gFold)" stroke="#c8922a" stroke-width="1"/></svg>
<div class="t" style="left:74px;top:19px;"><i class="q3">include</i></div>
<svg class="a" style="left:41px;top:40px;" width="8" height="12" viewBox="0 0 8 12"><path d="M1.500 1.300 L6.300 6 L1.500 10.700" fill="none" stroke="#a4a4a4" stroke-width="1.900"/></svg>
<svg class="a" style="left:53px;top:38.5px;" width="15" height="13" viewBox="0 0 16 14"><path d="M1.5 3.5 Q1.5 1.5 3.5 1.5 L6 1.5 L7.5 3.5 L13 3.5 Q14.5 3.5 14.5 5 L14.5 11 Q14.5 12.5 13 12.5 L3 12.5 Q1.5 12.5 1.5 11 Z" fill="url(#gFold)" stroke="#c8922a" stroke-width="1"/></svg>
<div class="t" style="left:74px;top:37px;"><i class="q7">lib</i></div>
<svg class="a" style="left:39px;top:59px;" width="11" height="9" viewBox="0 0 12 10"><path d="M1.200 2.500 L6 7.300 L10.800 2.500" fill="none" stroke="#3c3c3c" stroke-width="2.300"/></svg>
<svg class="a" style="left:53px;top:56.5px;" width="17" height="13" viewBox="0 0 18 14"><path d="M1.5 12.5 L1.5 3 Q1.5 1.5 3 1.5 L6 1.5 L7.5 3.5 L12.5 3.5 Q13.5 3.5 13.5 5 L13.5 6" fill="#fbe7b0" stroke="#b8802a" stroke-width="1"/><path d="M1.5 12.5 L4.5 6.5 L16.5 6.5 L13.5 12.5 Z" fill="url(#gFold)" stroke="#b8802a" stroke-width="1"/></svg>
<div class="t" style="left:74px;top:55px;"><i class="q0">logs</i></div>
<div class="jb" style="left:69px;top:71px">{ }</div>
<div class="t" style="left:90px;top:73px;"><i class="q7">Audit</i><i class="c10">-</i><i class="qm13">2026</i><i class="c10">-</i><i class="qm13">04</i><i class="c10">-</i><i class="qm13">14</i><i class="qm27">T</i><i class="qm13">08</i><i class="c10">-</i><i class="qm13">18</i><i class="c10">-</i><i class="qm13">37</i><i class="c10">-</i><i class="qm13">017260</i><i class="c10">-</i><i class="qm18">SKINWALKER</i><i class="c10">-</i><i class="q1">sortcl</i><i class="qm7">.</i><i class="q0">json</i></div>
<div class="jb" style="left:69px;top:89px">{ }</div>
<div class="t" style="left:90px;top:91px;"><i class="q7">Audit</i><i class="c10">-</i><i class="qm13">2026</i><i class="c10">-</i><i class="qm13">04</i><i class="c10">-</i><i class="qm13">14</i><i class="qm27">T</i><i class="qm13">08</i><i class="c10">-</i><i class="qm13">21</i><i class="c10">-</i><i class="qm13">58</i><i class="c10">-</i><i class="qm13">019196</i><i class="c10">-</i><i class="qm18">SKINWALKER</i><i class="c10">-</i><i class="q1">sortcl</i><i class="qm7">.</i><i class="q0">json</i></div>
<div class="jb" style="left:69px;top:107px">{ }</div>
<div class="t" style="left:90px;top:109px;"><i class="q7">Audit</i><i class="c10">-</i><i class="qm13">2026</i><i class="c10">-</i><i class="qm13">04</i><i class="c10">-</i><i class="qm13">14</i><i class="qm27">T</i><i class="qm5">11</i><i class="c10">-</i><i class="qm5">11</i><i class="c10">-</i><i class="qm13">59</i><i class="c10">-</i><i class="qm13">007352</i><i class="c10">-</i><i class="qm18">SKINWALKER</i><i class="c10">-</i><i class="q1">sortcl</i><i class="qm7">.</i><i class="q0">json</i></div>
<div class="jb" style="left:69px;top:125px">{ }</div>
<div class="t" style="left:90px;top:127px;"><i class="q7">Audit</i><i class="c10">-</i><i class="qm13">2026</i><i class="c10">-</i><i class="qm13">04</i><i class="c10">-</i><i class="qm13">14</i><i class="qm27">T</i><i class="qm5">11</i><i class="c10">-</i><i class="qm13">44</i><i class="c10">-</i><i class="qm13">42</i><i class="c10">-</i><i class="qm13">021596</i><i class="c10">-</i><i class="qm18">SKINWALKER</i><i class="c10">-</i><i class="q1">sortcl</i><i class="qm7">.</i><i class="q0">json</i></div>
<div class="jb" style="left:69px;top:143px">{ }</div>
<div class="t" style="left:90px;top:145px;"><i class="q7">Audit</i><i class="c10">-</i><i class="qm13">2026</i><i class="c10">-</i><i class="qm13">04</i><i class="c10">-</i><i class="qm13">14</i><i class="qm27">T</i><i class="qm13">12</i><i class="c10">-</i><i class="qm13">03</i><i class="c10">-</i><i class="qm13">09</i><i class="c10">-</i><i class="qm11">011880</i><i class="c10">-</i><i class="qm18">SKINWALKER</i><i class="c10">-</i><i class="q1">sortcl</i><i class="qm7">.</i><i class="q0">json</i></div>
<div class="jb" style="left:69px;top:161px">{ }</div>
<div class="t" style="left:90px;top:163px;"><i class="q7">Audit</i><i class="c10">-</i><i class="qm13">2026</i><i class="c10">-</i><i class="qm13">04</i><i class="c10">-</i><i class="qm13">14</i><i class="qm27">T</i><i class="qm13">12</i><i class="c10">-</i><i class="qm13">03</i><i class="c10">-</i><i class="qm13">10</i><i class="c10">-</i><i class="qm11">019112</i><i class="c10">-</i><i class="qm18">SKINWALKER</i><i class="c10">-</i><i class="q1">sortcl</i><i class="qm7">.</i><i class="q0">json</i></div>
<div class="jb" style="left:69px;top:179px">{ }</div>
<div class="t" style="left:90px;top:181px;"><i class="q7">Audit</i><i class="c10">-</i><i class="qm13">2026</i><i class="c10">-</i><i class="qm13">04</i><i class="c10">-</i><i class="qm13">14</i><i class="qm27">T</i><i class="qm13">12</i><i class="c10">-</i><i class="qm13">03</i><i class="c10">-</i><i class="qm5">11</i><i class="c10">-</i><i class="qm13">001932</i><i class="c10">-</i><i class="qm18">SKINWALKER</i><i class="c10">-</i><i class="q1">sortcl</i><i class="qm7">.</i><i class="q0">json</i></div>
<div class="jb" style="left:69px;top:197px">{ }</div>
<div class="t" style="left:90px;top:199px;"><i class="q7">Audit</i><i class="c10">-</i><i class="qm13">2026</i><i class="c10">-</i><i class="qm13">04</i><i class="c10">-</i><i class="qm13">14</i><i class="qm27">T</i><i class="qm13">12</i><i class="c10">-</i><i class="qm13">03</i><i class="c10">-</i><i class="qm13">13</i><i class="c10">-</i><i class="qm13">014824</i><i class="c10">-</i><i class="qm18">SKINWALKER</i><i class="c10">-</i><i class="q1">sortcl</i><i class="qm7">.</i><i class="q0">json</i></div>
<div class="jb" style="left:69px;top:215px">{ }</div>
<div class="t" style="left:90px;top:217px;"><i class="q7">Audit</i><i class="c10">-</i><i class="qm13">2026</i><i class="c10">-</i><i class="qm13">04</i><i class="c10">-</i><i class="qm13">14</i><i class="qm27">T</i><i class="qm13">12</i><i class="c10">-</i><i class="qm13">03</i><i class="c10">-</i><i class="qm13">15</i><i class="c10">-</i><i class="qm13">022632</i><i class="c10">-</i><i class="qm18">SKINWALKER</i><i class="c10">-</i><i class="q1">sortcl</i><i class="qm7">.</i><i class="q0">json</i></div>
<div class="a" style="left:67px;top:234px;width:342px;height:18px;background:#d9d9d9;"></div>
<div class="jb" style="left:69px;top:233px">{ }</div>
<div class="t" style="left:90px;top:235px;"><i class="q7">Audit</i><i class="c10">-</i><i class="qm13">2026</i><i class="c10">-</i><i class="qm13">04</i><i class="c10">-</i><i class="qm13">14</i><i class="qm27">T</i><i class="qm13">12</i><i class="c10">-</i><i class="qm13">03</i><i class="c10">-</i><i class="qm13">17</i><i class="c10">-</i><i class="qm13">021576</i><i class="c10">-</i><i class="qm18">SKINWALKER</i><i class="c10">-</i><i class="q1">sortcl</i><i class="qm7">.</i><i class="q0">json</i></div>
<div class="jb" style="left:69px;top:251px">{ }</div>
<div class="t" style="left:90px;top:253px;"><i class="q7">Audit</i><i class="c10">-</i><i class="qm13">2026</i><i class="c10">-</i><i class="qm13">04</i><i class="c10">-</i><i class="qm13">14</i><i class="qm27">T</i><i class="qm13">12</i><i class="c10">-</i><i class="qm13">03</i><i class="c10">-</i><i class="qm13">18</i><i class="c10">-</i><i class="qm13">018420</i><i class="c10">-</i><i class="qm18">SKINWALKER</i><i class="c10">-</i><i class="q1">sortcl</i><i class="qm7">.</i><i class="q0">json</i></div>
<div class="jb" style="left:69px;top:269px">{ }</div>
<div class="t" style="left:90px;top:271px;"><i class="q7">Audit</i><i class="c10">-</i><i class="qm13">2026</i><i class="c10">-</i><i class="qm13">04</i><i class="c10">-</i><i class="qm13">14</i><i class="qm27">T</i><i class="qm13">12</i><i class="c10">-</i><i class="qm13">03</i><i class="c10">-</i><i class="qm13">19</i><i class="c10">-</i><i class="qm13">006168</i><i class="c10">-</i><i class="qm18">SKINWALKER</i><i class="c10">-</i><i class="q1">sortcl</i><i class="qm7">.</i><i class="q0">json</i></div>
<svg class="a" style="left:41px;top:292px;" width="8" height="12" viewBox="0 0 8 12"><path d="M1.500 1.300 L6.300 6 L1.500 10.700" fill="none" stroke="#a4a4a4" stroke-width="1.900"/></svg>
<svg class="a" style="left:53px;top:290.5px;" width="15" height="13" viewBox="0 0 16 14"><path d="M1.5 3.5 Q1.5 1.5 3.5 1.5 L6 1.5 L7.5 3.5 L13 3.5 Q14.5 3.5 14.5 5 L14.5 11 Q14.5 12.5 13 12.5 L3 12.5 Q1.5 12.5 1.5 11 Z" fill="url(#gFold)" stroke="#c8922a" stroke-width="1"/></svg>
<div class="t" style="left:74px;top:289px;"><i class="qm10">sets</i></div>
<svg class="a" style="left:25px;top:310px;" width="8" height="12" viewBox="0 0 8 12"><path d="M1.500 1.300 L6.300 6 L1.500 10.700" fill="none" stroke="#a4a4a4" stroke-width="1.900"/></svg>
<svg class="a" style="left:37px;top:308.5px;" width="15" height="13" viewBox="0 0 16 14"><path d="M1.5 3.5 Q1.5 1.5 3.5 1.5 L6 1.5 L7.5 3.5 L13 3.5 Q14.5 3.5 14.5 5 L14.5 11 Q14.5 12.5 13 12.5 L3 12.5 Q1.5 12.5 1.5 11 Z" fill="url(#gFold)" stroke="#c8922a" stroke-width="1"/></svg>
<div class="t" style="left:58px;top:307px;"><i class="qm7">Dark</i><i class="qm5">Shield</i></div>
<svg class="a" style="left:25px;top:328px;" width="8" height="12" viewBox="0 0 8 12"><path d="M1.500 1.300 L6.300 6 L1.500 10.700" fill="none" stroke="#a4a4a4" stroke-width="1.900"/></svg>
<svg class="a" style="left:37px;top:326.5px;" width="15" height="13" viewBox="0 0 16 14"><path d="M1.5 3.5 Q1.5 1.5 3.5 1.5 L6 1.5 L7.5 3.5 L13 3.5 Q14.5 3.5 14.5 5 L14.5 11 Q14.5 12.5 13 12.5 L3 12.5 Q1.5 12.5 1.5 11 Z" fill="url(#gFold)" stroke="#c8922a" stroke-width="1"/></svg>
<div class="t" style="left:58px;top:325px;"><i class="q2">workbench</i><i class="qm13">2</i></div>
<svg class="a" style="left:37px;top:343px;" width="16" height="16" viewBox="0 0 17 17"><rect x="0.800" y="2" width="13" height="14" fill="#fff" stroke="#555" stroke-width="1.200"/><path d="M2 2 H13" stroke="#888" stroke-width="1.500" stroke-dasharray="1 1"/><rect x="2.500" y="9" width="8" height="5.500" fill="#4cb840"/><path d="M15.500 0.500 L8 12 L7.500 14 L9.500 13 L16.500 1.500 Z" fill="#f0a020" stroke="#a05010" stroke-width="0.600"/><path d="M15.200 0.300 L16.800 1.300" stroke="#c01020" stroke-width="1.500"/></svg>
<div class="t" style="left:58px;top:343px;"><i class="q1">cosort</i><i class="qm7">.</i><i class="q4">lic</i></div>
<svg class="a" style="left:40px;top:361.5px;" width="12" height="15" viewBox="0 0 12 15"><path d="M0.500 0.500 H8 L11.500 4 V14.500 H0.500 Z" fill="#f4f7ff" stroke="#7f93c8" stroke-width="1"/><path d="M8 0.500 V4 H11.500" fill="#dde4f6" stroke="#7f93c8" stroke-width="1"/><path d="M2.500 6 H9.500 M2.500 8 H9.500 M2.500 10 H9.500 M2.500 12 H8" stroke="#5b79c9" stroke-width="0.900"/></svg>
<div class="t" style="left:58px;top:361px;"><i class="q1">cosort</i><i class="qm13">105</i><i class="qm7">.</i><i class="qm13">7</i><i class="qm20">z</i></div>
<svg class="a" style="left:38px;top:379px;" width="15" height="16" viewBox="0 0 17 17"><rect x="2" y="0.500" width="12" height="9" fill="#fff" stroke="#a0a0a0"/><path d="M4 3 H11 M4 5 H9" stroke="#7f93c8" stroke-width="0.900"/><path d="M0.500 7 L8 12 L15.500 7 V15.500 H0.500 Z" fill="#f0f0f0" stroke="#909090"/><circle cx="12.500" cy="9.500" r="2.600" fill="none" stroke="#e0941c" stroke-width="1.700"/><path d="M10.500 11.500 L6 16 M7.500 14.500 L9 16" stroke="#e0941c" stroke-width="1.700" fill="none"/></svg>
<div class="t" style="left:58px;top:379px;"><i class="q4">iri</i><i class="qm2">Voracity</i><i class="qm7">.</i><i class="q7">pfx</i></div>
<svg class="a" style="left:40px;top:397.5px;" width="12" height="15" viewBox="0 0 12 15"><svg x="0" y="0" width="12" height="15" viewBox="0 0 12 15"><path d="M0.5 0.5 H8 L11.5 4 V14.5 H0.5 Z" fill="#fff" stroke="#9a9a8a" stroke-width="1"/><path d="M8 0.5 V4 H11.5" fill="#ece6c8" stroke="#b0a670" stroke-width="1"/></svg><path d="M2.500 5 L4.500 12.500 M7 5.500 V11.500 Q7 12.500 8.500 12.300 M5 8 H9" stroke="#1a2ae0" stroke-width="1.300" fill="none"/></svg>
<div class="t" style="left:58px;top:397px;"><i class="qm13">Reg</i><i class="qm5">Form</i><i class="qm7">.</i><i class="q9">txt</i></div>
<svg class="a" style="left:9px;top:418px;" width="8" height="12" viewBox="0 0 8 12"><path d="M1.500 1.300 L6.300 6 L1.500 10.700" fill="none" stroke="#a4a4a4" stroke-width="1.900"/></svg>
<svg class="a" style="left:21px;top:416.5px;" width="15" height="13" viewBox="0 0 16 14"><path d="M1.5 3.5 Q1.5 1.5 3.5 1.5 L6 1.5 L7.5 3.5 L13 3.5 Q14.5 3.5 14.5 5 L14.5 11 Q14.5 12.5 13 12.5 L3 12.5 Q1.5 12.5 1.5 11 Z" fill="url(#gFold)" stroke="#c8922a" stroke-width="1"/></svg>
<div class="t" style="left:42px;top:415px;"><i class="qm4">Oracle</i></div>
<svg class="a" style="left:9px;top:436px;" width="8" height="12" viewBox="0 0 8 12"><path d="M1.500 1.300 L6.300 6 L1.500 10.700" fill="none" stroke="#a4a4a4" stroke-width="1.900"/></svg>
<svg class="a" style="left:21px;top:434.5px;" width="15" height="13" viewBox="0 0 16 14"><path d="M1.5 3.5 Q1.5 1.5 3.5 1.5 L6 1.5 L7.5 3.5 L13 3.5 Q14.5 3.5 14.5 5 L14.5 11 Q14.5 12.5 13 12.5 L3 12.5 Q1.5 12.5 1.5 11 Z" fill="url(#gFold)" stroke="#c8922a" stroke-width="1"/></svg>
<div class="t" style="left:42px;top:433px;"><i class="qm5">PerfLogs</i></div>
<svg class="a" style="left:9px;top:454px;" width="8" height="12" viewBox="0 0 8 12"><path d="M1.500 1.300 L6.300 6 L1.500 10.700" fill="none" stroke="#a4a4a4" stroke-width="1.900"/></svg>
<svg class="a" style="left:21px;top:452.5px;" width="15" height="13" viewBox="0 0 16 14"><path d="M1.5 3.5 Q1.5 1.5 3.5 1.5 L6 1.5 L7.5 3.5 L13 3.5 Q14.5 3.5 14.5 5 L14.5 11 Q14.5 12.5 13 12.5 L3 12.5 Q1.5 12.5 1.5 11 Z" fill="url(#gFold)" stroke="#c8922a" stroke-width="1"/></svg>
<div class="t" style="left:42px;top:451px;"><i class="qm3">Program</i><i class="qm7"> </i><i class="qm9">Files</i></div>
</div>
<div class="a" style="left:411px;top:898px;width:18px;height:466px;background:#f0f0f0;"></div>
<div class="a" style="left:411px;top:1039px;width:15px;height:191px;background:#cdcdcd;"></div>
<svg class="a" style="left:415px;top:904px;" width="8" height="6" viewBox="0 0 8 6"><path d="M0.500 5 L4 1.500 L7.500 5" fill="none" stroke="#505050" stroke-width="1.800"/></svg>
<svg class="a" style="left:415px;top:1352px;" width="8" height="6" viewBox="0 0 8 6"><path d="M0.500 1 L4 4.500 L7.500 1" fill="none" stroke="#505050" stroke-width="1.800"/></svg>
<div class="a" style="left:3px;top:1364px;width:408px;height:18px;background:#f0f0f0;"></div>
<div class="a" style="left:69px;top:1364px;width:321px;height:15px;background:#cdcdcd;"></div>
<svg class="a" style="left:8px;top:1368px;" width="6" height="8" viewBox="0 0 6 8"><path d="M5 0.500 L1.500 4 L5 7.500" fill="none" stroke="#505050" stroke-width="1.800"/></svg>
<svg class="a" style="left:400px;top:1368px;" width="6" height="8" viewBox="0 0 6 8"><path d="M1 0.500 L4.500 4 L1 7.500" fill="none" stroke="#505050" stroke-width="1.800"/></svg>
<div class="a" style="left:411px;top:1364px;width:18px;height:18px;background:#f0f0f0;"></div>
<div class="a" style="left:434px;top:71px;width:1115px;height:1313px;border:1px solid #9a9a9a;border-radius:4px 4px 0 0;background:#f0f0f0;box-sizing:border-box"></div>
<div class="a" style="left:434px;top:94px;width:1115px;height:1px;background:#9a9a9a;"></div>
<div class="a" style="left:437px;top:97px;width:1109px;height:1286px;background:#fff;"></div>
<div class="a" style="left:435px;top:94px;width:1113px;height:1px;background:#9a9a9a;"></div>
<div class="a" style="left:787px;top:72px;width:1px;height:22px;background:#9a9a9a;"></div>
<div class="a" style="left:1140px;top:72px;width:353px;height:24px;background:#fff;border-left:1px solid #9a9a9a;border-right:1px solid #9a9a9a;box-sizing:border-box;"></div>
<div class="a" style="left:1141px;top:72px;width:351px;height:2px;background:#0a6cd0;"></div>
<div class="jb" style="left:438px;top:73px">{ }</div>
<div class="t" style="left:459px;top:75px;"><i class="q7">Audit</i><i class="c10">-</i><i class="qm13">2026</i><i class="c10">-</i><i class="qm13">04</i><i class="c10">-</i><i class="qm13">14</i><i class="qm27">T</i><i class="qm13">12</i><i class="c10">-</i><i class="qm13">03</i><i class="c10">-</i><i class="qm13">19</i><i class="c10">-</i><i class="qm13">006168</i><i class="c10">-</i><i class="qm18">SKINWALKER</i><i class="c10">-</i><i class="q1">sortcl</i><i class="qm7">...</i></div>
<div class="jb" style="left:790px;top:73px">{ }</div>
<div class="t" style="left:811px;top:75px;"><i class="q7">Audit</i><i class="c10">-</i><i class="qm13">2026</i><i class="c10">-</i><i class="qm13">04</i><i class="c10">-</i><i class="qm13">14</i><i class="qm26">T</i><i class="qm13">08</i><i class="c10">-</i><i class="qm13">18</i><i class="c10">-</i><i class="qm13">37</i><i class="c10">-</i><i class="qm13">017260</i><i class="c10">-</i><i class="qm18">SKINWALKER</i><i class="c10">-</i><i class="q2">sortcl</i><i class="qm6">...</i></div>
<div class="jb" style="left:1144px;top:73px">{ }</div>
<div class="t" style="left:1164px;top:75px;"><i class="q7">Audit</i><i class="c10">-</i><i class="qm13">2026</i><i class="c10">-</i><i class="qm13">04</i><i class="c10">-</i><i class="qm13">14</i><i class="qm26">T</i><i class="qm13">12</i><i class="c10">-</i><i class="qm13">03</i><i class="c10">-</i><i class="qm13">17</i><i class="c10">-</i><i class="qm13">021576</i><i class="c10">-</i><i class="qm18">SKINWALKER</i><i class="c10">-</i><i class="q1">sortcl</i><i class="qm6">...</i></div>
<svg class="a" style="left:1476px;top:79px;" width="10" height="10" viewBox="0 0 10 10"><path d="M0.500 0.500 L9.500 9.500 M9.500 0.500 L0.500 9.500" stroke="#1a1a1a" stroke-width="1.100"/></svg>
<svg class="a" style="left:1505px;top:78px;" width="10" height="5" viewBox="0 0 10 5"><rect x="0.600" y="0.600" width="8.800" height="3" fill="#fff" stroke="#000" stroke-width="1.200"/></svg>
<svg class="a" style="left:1528px;top:78px;" width="10" height="10" viewBox="0 0 10 10"><rect x="0.500" y="0.500" width="9" height="9" fill="#fff" stroke="#000" stroke-width="1"/><rect x="0" y="0" width="10" height="2" fill="#000"/></svg>
<div class="a" style="left:437px;top:95px;width:1111px;height:1288px;background:#fff;"></div>
<div class="a" style="left:437px;top:97px;width:12px;height:1267px;background:#f0f0f0;"></div>
<div class="a" style="left:494px;top:97px;width:1px;height:1267px;background:#e6e6e6;"></div>
<div class="a" style="left:497px;top:793px;width:1020px;height:24px;background:#e8f2fe;"></div>
<div class="a" style="left:437px;top:817px;width:12px;height:24px;background:repeating-conic-gradient(#1874dc 0% 25%, #e4eefc 0% 50%) 0 0/2px 2px;border-top:1px solid #1470d8;border-bottom:1px solid #1470d8;box-sizing:border-box;"></div>
<div class="a" style="left:437px;top:97px;width:1080px;height:1267px;overflow:hidden">
<div class="ln" style="top:0px">175</div>
<svg class="a" style="left:47.5px;top:6.5px;" width="10" height="10" viewBox="0 0 10 10"><circle cx="5" cy="5" r="4.200" fill="#eef2f8" stroke="#a4b4cc" stroke-width="1.100"/><path d="M2.500 5 H7.500" stroke="#3c5a88" stroke-width="1.100"/></svg>
<div class="cl" style="top:0px"><i class="x">••••</i><i class="k">"statistics"</i><i class="p">:</i><i class="x">•</i><i class="p">{</i><i class="w">¤¶</i></div>
<div class="ln" style="top:24px">176</div>
<svg class="a" style="left:47.5px;top:30.5px;" width="10" height="10" viewBox="0 0 10 10"><circle cx="5" cy="5" r="4.200" fill="#eef2f8" stroke="#a4b4cc" stroke-width="1.100"/><path d="M2.500 5 H7.500" stroke="#3c5a88" stroke-width="1.100"/></svg>
<div class="cl" style="top:24px"><i class="x">••••••••</i><i class="k">"jobResults"</i><i class="p">:</i><i class="x">•</i><i class="p">{</i><i class="w">¤¶</i></div>
<div class="ln" style="top:48px">177</div>
<div class="cl" style="top:48px"><i class="x">••••••••••••</i><i class="k">"successfulCompletion"</i><i class="p">:</i><i class="x">•</i><i class="b">true</i><i class="p">,</i><i class="w">¤¶</i></div>
<div class="ln" style="top:72px">178</div>
<div class="cl" style="top:72px"><i class="x">••••••••••••</i><i class="k">"productName"</i><i class="p">:</i><i class="x">•</i><i class="v">"CoSort"</i><i class="p">,</i><i class="w">¤¶</i></div>
<div class="ln" style="top:96px">179</div>
<div class="cl" style="top:96px"><i class="x">••••••••••••</i><i class="k">"productVersion"</i><i class="p">:</i><i class="x">•</i><i class="v">"11.0.1"</i><i class="p">,</i><i class="w">¤¶</i></div>
<div class="ln" style="top:120px">180</div>
<div class="cl" style="top:120px"><i class="x">••••••••••••</i><i class="k">"buildTag"</i><i class="p">:</i><i class="x">•</i><i class="v">"R110260224-2130"</i><i class="p">,</i><i class="w">¤¶</i></div>
<div class="ln" style="top:144px">181</div>
<div class="cl" style="top:144px"><i class="x">••••••••••••</i><i class="k">"serialNumber"</i><i class="p">:</i><i class="x">•</i><i class="v">"11111.2222"</i><i class="p">,</i><i class="w">¤¶</i></div>
<div class="ln" style="top:168px">182</div>
<div class="cl" style="top:168px"><i class="x">••••••••••••</i><i class="k">"username"</i><i class="p">:</i><i class="x">•</i><i class="v">"kevinr"</i><i class="p">,</i><i class="w">¤¶</i></div>
<div class="ln" style="top:192px">183</div>
<div class="cl" style="top:192px"><i class="x">••••••••••••</i><i class="k">"processID"</i><i class="p">:</i><i class="x">•</i><i class="v">"21576"</i><i class="p">,</i><i class="w">¤¶</i></div>
<div class="ln" style="top:216px">184</div>
<div class="cl" style="top:216px"><i class="x">••••••••••••</i><i class="k">"currentWorkingDirectory"</i><i class="p">:</i><i class="x">•</i><i class="v">"W:\\Demo_Workbench\\marketing_workbench_demo\\Mask_SQL_Server_Health_FINISHED"</i><i class="p">,</i><i class="w">¤¶</i></div>
<div class="ln" style="top:240px">185</div>
<div class="cl" style="top:240px"><i class="x">••••••••••••</i><i class="k">"programName"</i><i class="p">:</i><i class="x">•</i><i class="v">"sortcl"</i><i class="p">,</i><i class="w">¤¶</i></div>
<div class="ln" style="top:264px">186</div>
<div class="cl" style="top:264px"><i class="x">••••••••••••</i><i class="k">"returnCode"</i><i class="p">:</i><i class="x">•</i><i class="d">0</i><i class="p">,</i><i class="w">¤¶</i></div>
<div class="ln" style="top:288px">187</div>
<div class="cl" style="top:288px"><i class="x">••••••••••••</i><i class="k">"errorMessage"</i><i class="p">:</i><i class="x">•</i><i class="v">"normal<i class="x">•</i>return"</i><i class="p">,</i><i class="w">¤¶</i></div>
<div class="ln" style="top:312px">188</div>
<div class="cl" style="top:312px"><i class="x">••••••••••••</i><i class="k">"productHomeDirectory"</i><i class="p">:</i><i class="x">•</i><i class="v">"C:\\IRI\\cosort110"</i><i class="p">,</i><i class="w">¤¶</i></div>
<div class="ln" style="top:336px">189</div>
<div class="cl" style="top:336px"><i class="x">••••••••••••</i><i class="k">"actionType"</i><i class="p">:</i><i class="x">•</i><i class="v">"Report"</i><i class="p">,</i><i class="w">¤¶</i></div>
<div class="ln" style="top:360px">190</div>
<div class="cl" style="top:360px"><i class="x">••••••••••••</i><i class="k">"recordsProcessed"</i><i class="p">:</i><i class="x">•</i><i class="d">24</i><i class="w">¤¶</i></div>
<div class="ln" style="top:384px">191</div>
<div class="cl" style="top:384px"><i class="x">••••••••</i><i class="p">},</i><i class="w">¤¶</i></div>
<div class="ln" style="top:408px">192</div>
<svg class="a" style="left:47.5px;top:414.5px;" width="10" height="10" viewBox="0 0 10 10"><circle cx="5" cy="5" r="4.200" fill="#eef2f8" stroke="#a4b4cc" stroke-width="1.100"/><path d="M2.500 5 H7.500" stroke="#3c5a88" stroke-width="1.100"/></svg>
<div class="cl" style="top:408px"><i class="x">••••••••</i><i class="k">"resourceControlSettings"</i><i class="p">:</i><i class="x">•</i><i class="p">{</i><i class="w">¤¶</i></div>
<div class="ln" style="top:432px">193</div>
<div class="cl" style="top:432px"><i class="x">••••••••••••</i><i class="k">"rcFileName"</i><i class="p">:</i><i class="x">•</i><i class="v">"C:\\IRI\\cosort110\\etc\\cosort.rc"</i><i class="p">,</i><i class="w">¤¶</i></div>
<div class="ln" style="top:456px">194</div>
<div class="cl" style="top:456px"><i class="x">••••••••••••</i><i class="k">"aio"</i><i class="p">:</i><i class="x">•</i><i class="v">"On"</i><i class="p">,</i><i class="w">¤¶</i></div>
<div class="ln" style="top:480px">195</div>
<div class="cl" style="top:480px"><i class="x">••••••••••••</i><i class="k">"onEmptyInput"</i><i class="p">:</i><i class="x">•</i><i class="v">"PROCESS_WITH_ZEROS"</i><i class="p">,</i><i class="w">¤¶</i></div>
<div class="ln" style="top:504px">196</div>
<div class="cl" style="top:504px"><i class="x">••••••••••••</i><i class="k">"onEmptyOutput"</i><i class="p">:</i><i class="x">•</i><i class="v">"PROCESS_WITH_ZEROS"</i><i class="p">,</i><i class="w">¤¶</i></div>
<div class="ln" style="top:528px">197</div>
<div class="cl" style="top:528px"><i class="x">••••••••••••</i><i class="k">"outputTerminator"</i><i class="p">:</i><i class="x">•</i><i class="n">null</i><i class="p">,</i><i class="w">¤¶</i></div>
<div class="ln" style="top:552px">198</div>
<div class="cl" style="top:552px"><i class="x">••••••••••••</i><i class="k">"csErrLogLocation"</i><i class="p">:</i><i class="x">•</i><i class="v">"W:\\Demo_Workbench\\marketing_workbench_demo\\Mask_SQL_Server_Health_FINISHED\\cserrlog.txt"</i><i class="p">,</i><i class="w">¤¶</i></div>
<div class="ln" style="top:576px">199</div>
<div class="cl" style="top:576px"><i class="x">••••••••••••</i><i class="k">"onConversionFailure"</i><i class="p">:</i><i class="x">•</i><i class="v">"FAIL"</i><i class="p">,</i><i class="w">¤¶</i></div>
<div class="ln" style="top:600px">200</div>
<div class="cl" style="top:600px"><i class="x">••••••••••••</i><i class="k">"onCollationFailure"</i><i class="p">:</i><i class="x">•</i><i class="v">"FAIL"</i><i class="p">,</i><i class="w">¤¶</i></div>
<div class="ln" style="top:624px">201</div>
<div class="cl" style="top:624px"><i class="x">••••••••••••</i><i class="k">"endianess"</i><i class="p">:</i><i class="x">•</i><i class="v">"Machine"</i><i class="p">,</i><i class="w">¤¶</i></div>
<div class="ln" style="top:648px">202</div>
<div class="cl" style="top:648px"><i class="x">••••••••••••</i><i class="k">"onEmptyObjectValue"</i><i class="p">:</i><i class="x">•</i><i class="v">"FOLLOW_INPUT"</i><i class="p">,</i><i class="w">¤¶</i></div>
<div class="ln" style="top:672px">203</div>
<div class="cl" style="top:672px"><i class="x">••••••••••••</i><i class="k">"zipOutLevel"</i><i class="p">:</i><i class="x">•</i><i class="d">6</i><i class="p">,</i><i class="w">¤¶</i></div>
<div class="ln" style="top:696px">204</div>
<div class="cl" style="top:696px"><i class="x">••••••••••••</i><i class="k">"compressWorkFiles"</i><i class="p">:</i><i class="x">•</i><i class="v">"AUTO"</i><i class="p">,</i><i class="w">¤¶</i></div>
<div class="ln" style="top:720px">205</div>
<div class="cl" style="top:720px"><i class="x">••••••••••••</i><i class="k">"onWorkAreasFull"</i><i class="p">:</i><i class="x">•</i><i class="v">"ABORT"</i><i class="p">,</i><i class="w">¤¶</i></div>
<div class="ln" style="top:744px">206</div>
<div class="cl" style="top:744px"><i class="x">••••••••••••</i><i class="k">"preserveErrorLog"</i><i class="p">:</i><i class="x">•</i><i class="v">"Off"</i><i class="p">,</i><i class="w">¤¶</i></div>
<div class="ln" style="top:768px">207</div>
<div class="cl" style="top:768px"><i class="x">••••••••••••</i><i class="k">"aioBuffers"</i><i class="p">:</i><i class="x">•</i><i class="d">2</i><i class="p">,</i><i class="w">¤¶</i></div>
<div class="ln" style="top:792px">208</div>
<div class="cl" style="top:792px"><i class="x">••••••••••••</i><i class="k">"minimumYear"</i><i class="p">:</i><i class="x">•</i><i class="d">70</i><i class="p">,</i><i class="w">¤¶</i></div>
<div class="ln" style="top:816px">209</div>
<div class="cl" style="top:816px"><i class="x">••••••••••••</i><i class="k">"threadMax"</i><i class="p">:</i><i class="x">•</i><i class="d">1</i><i class="p">,</i><i class="w">¤¶</i></div>
<div class="ln" style="top:840px">210</div>
<div class="cl" style="top:840px"><i class="x">••••••••••••</i><i class="k">"monitorLevel"</i><i class="p">:</i><i class="x">•</i><i class="d">3</i><i class="p">,</i><i class="w">¤¶</i></div>
<div class="ln" style="top:864px">211</div>
<svg class="a" style="left:47.5px;top:870.5px;" width="10" height="10" viewBox="0 0 10 10"><circle cx="5" cy="5" r="4.200" fill="#eef2f8" stroke="#a4b4cc" stroke-width="1.100"/><path d="M2.500 5 H7.500" stroke="#3c5a88" stroke-width="1.100"/></svg>
<div class="cl" style="top:864px"><i class="x">••••••••••••</i><i class="k">"workAreas"</i><i class="p">:</i><i class="x">•</i><i class="p">[</i><i class="w">¤¶</i></div>
<div class="ln" style="top:888px">212</div>
<div class="cl" style="top:888px"><i class="x">••••••••••••</i><i class="v">".\\"</i><i class="x">•</i><i class="w">¤¶</i></div>
<div class="ln" style="top:912px">213</div>
<div class="cl" style="top:912px"><i class="x">••••••••••••</i><i class="p">],</i><i class="w">¤¶</i></div>
<div class="ln" style="top:936px">214</div>
<div class="cl" style="top:936px"><i class="x">••••••••••••</i><i class="k">"legacyNumericOutput"</i><i class="p">:</i><i class="x">•</i><i class="v">"Off"</i><i class="p">,</i><i class="w">¤¶</i></div>
<div class="ln" style="top:960px">215</div>
<div class="cl" style="top:960px"><i class="x">••••••••••••</i><i class="k">"autoTune"</i><i class="p">:</i><i class="x">•</i><i class="v">"On"</i><i class="p">,</i><i class="w">¤¶</i></div>
<div class="ln" style="top:984px">216</div>
<div class="cl" style="top:984px"><i class="x">••••••••••••</i><i class="k">"blockSize"</i><i class="p">:</i><i class="x">•</i><i class="d">1228800</i><i class="p">,</i><i class="w">¤¶</i></div>
<div class="ln" style="top:1008px">217</div>
<div class="cl" style="top:1008px"><i class="x">••••••••••••</i><i class="k">"memoryMax"</i><i class="p">:</i><i class="x">•</i><i class="d">17423138816</i><i class="w">¤¶</i></div>
<div class="ln" style="top:1032px">218</div>
<div class="cl" style="top:1032px"><i class="x">••••••••</i><i class="p">},</i><i class="w">¤¶</i></div>
<div class="ln" style="top:1056px">219</div>
<svg class="a" style="left:47.5px;top:1062.5px;" width="10" height="10" viewBox="0 0 10 10"><circle cx="5" cy="5" r="4.200" fill="#eef2f8" stroke="#a4b4cc" stroke-width="1.100"/><path d="M2.500 5 H7.500" stroke="#3c5a88" stroke-width="1.100"/></svg>
<div class="cl" style="top:1056px"><i class="x">••••••••</i><i class="k">"performance"</i><i class="p">:</i><i class="x">•</i><i class="p">{</i><i class="w">¤¶</i></div>
<div class="ln" style="top:1080px">220</div>
<div class="cl" style="top:1080px"><i class="x">••••••••••••</i><i class="k">"blockSize"</i><i class="p">:</i><i class="x">•</i><i class="d">614400</i><i class="p">,</i><i class="w">¤¶</i></div>
<div class="ln" style="top:1104px">221</div>
<div class="cl" style="top:1104px"><i class="x">••••••••••••</i><i class="k">"bufferMemoryUsed"</i><i class="p">:</i><i class="x">•</i><i class="d">17423138816</i><i class="p">,</i><i class="w">¤¶</i></div>
<div class="ln" style="top:1128px">222</div>
<div class="cl" style="top:1128px"><i class="x">••••••••••••</i><i class="k">"heapMemory"</i><i class="p">:</i><i class="x">•</i><i class="d">524288</i><i class="p">,</i><i class="w">¤¶</i></div>
<div class="ln" style="top:1152px">223</div>
<div class="cl" style="top:1152px"><i class="x">••••••••••••</i><i class="k">"aiobuffers"</i><i class="p">:</i><i class="x">•</i><i class="d">2</i><i class="p">,</i><i class="w">¤¶</i></div>
<div class="ln" style="top:1176px">224</div>
<div class="cl" style="top:1176px"><i class="x">••••••••••••</i><i class="k">"logicalWorkFiles"</i><i class="p">:</i><i class="x">•</i><i class="d">0</i><i class="p">,</i><i class="w">¤¶</i></div>
<div class="ln" style="top:1200px">225</div>
<div class="cl" style="top:1200px"><i class="x">••••••••••••</i><i class="k">"startTime"</i><i class="p">:</i><i class="x">•</i><i class="v">"2026-04-14<i class="x">•</i>12:03:16"</i><i class="p">,</i><i class="w">¤¶</i></div>
<div class="ln" style="top:1224px">226</div>
<div class="cl" style="top:1224px"><i class="x">••••••••••••</i><i class="k">"endTime"</i><i class="p">:</i><i class="x">•</i><i class="v">"2026-04-14<i class="x">•</i>12:03:18"</i><i class="p">,</i><i class="w">¤¶</i></div>
<div class="ln" style="top:1248px">227</div>
<div class="cl" style="top:1248px"><i class="x">••••••••••••</i><i class="k">"elapsedTime"</i><i class="p">:</i><i class="x">•</i><i class="v">"00:00:01.17"</i><i class="p">,</i><i class="w">¤¶</i></div>
<div class="a" style="left:540px;top:698px;width:2px;height:20px;background:#000;"></div>
</div>
<div class="a" style="left:1517px;top:97px;width:18px;height:1267px;background:#f0f0f0;"></div>
<div class="a" style="left:1517px;top:546px;width:15px;height:130px;background:#cdcdcd;"></div>
<svg class="a" style="left:1521px;top:103px;" width="8" height="6" viewBox="0 0 8 6"><path d="M0.500 5 L4 1.500 L7.500 5" fill="none" stroke="#505050" stroke-width="1.800"/></svg>
<svg class="a" style="left:1521px;top:1352px;" width="8" height="6" viewBox="0 0 8 6"><path d="M0.500 1 L4 4.500 L7.500 1" fill="none" stroke="#505050" stroke-width="1.800"/></svg>
<div class="a" style="left:1534px;top:97px;width:12px;height:1267px;background:#f0f0f0;"></div>
<div class="a" style="left:437px;top:1364px;width:1109px;height:17px;background:#f0f0f0;"></div>
<div class="a" style="left:497px;top:1364px;width:1020px;height:17px;background:#f0f0f0;"></div>
<div class="a" style="left:512px;top:1364px;width:561px;height:15px;background:#cdcdcd;"></div>
<svg class="a" style="left:502px;top:1368px;" width="6" height="8" viewBox="0 0 6 8"><path d="M5 0.500 L1.500 4 L5 7.500" fill="none" stroke="#505050" stroke-width="1.800"/></svg>
<svg class="a" style="left:1506px;top:1368px;" width="6" height="8" viewBox="0 0 6 8"><path d="M1 0.500 L4.500 4 L1 7.500" fill="none" stroke="#505050" stroke-width="1.800"/></svg>
<div class="a" style="left:1553px;top:71px;width:984px;height:1313px;border:1px solid #9a9a9a;border-radius:4px 4px 0 0;background:#f0f0f0;box-sizing:border-box"></div>
<div class="a" style="left:1641px;top:94px;width:896px;height:1px;background:#9a9a9a;"></div>
<div class="a" style="left:1556px;top:97px;width:978px;height:1286px;background:#fff;"></div>
<div class="a" style="left:1554px;top:72px;width:87px;height:24px;background:#f3f3f3;"></div>
<div class="a" style="left:1641px;top:72px;width:1px;height:23px;background:#9a9a9a;"></div>
<div class="a" style="left:1553px;top:71px;width:89px;height:3px;background:#6e6e6e;border-radius:4px 0 0 0;"></div>
<svg class="a" style="left:1557px;top:75px" width="16" height="17"><rect x="1" y="1" width="5" height="5" fill="#cfe2f8" stroke="#1c6ac0" stroke-width="1.200"/><rect x="1" y="10" width="5" height="5" fill="#cfe2f8" stroke="#1c6ac0" stroke-width="1.200"/><path d="M8 4 H13.500 M8 13.500 H13.500 M12 8.500 H13.500" stroke="#1c5aa0" stroke-width="1.200"/><rect x="8.500" y="7.200" width="2" height="2.500" fill="none" stroke="#1c6ac0" stroke-width="0.900"/></svg>
<div class="t" style="left:1577px;top:75px;"><i class="q3">Outline</i></div>
<svg class="a" style="left:1624px;top:79px;" width="10" height="10" viewBox="0 0 10 10"><path d="M0.500 0.500 L9.500 9.500 M9.500 0.500 L0.500 9.500" stroke="#1a1a1a" stroke-width="1.100"/></svg>
<svg class="a" style="left:2421px;top:74px" width="19" height="19"><path d="M3.500 2 V14 M1.500 11.500 L3.500 14.500 L5.500 11.500" stroke="#404850" stroke-width="1.100" fill="none"/></svg>
<div class="a" style="left:2427px;top:72px;font:bold 14px 'Liberation Serif',serif;line-height:12px;color:#1c8a7a">a</div>
<div class="a" style="left:2431px;top:81px;font:bold 14px 'Liberation Serif',serif;line-height:12px;color:#8a1c8a">z</div>
<svg class="a" style="left:2447px;top:77px;" width="14" height="14" viewBox="0 0 14 14"><rect x="0.500" y="0.500" width="10" height="10" fill="#f2f7fc" stroke="#a9c0dc"/><rect x="2.500" y="2.500" width="10.500" height="10.500" fill="url(#gBlue)" stroke="#86a6cf"/><path d="M4.500 8 H11" stroke="#1c5aa6" stroke-width="1.600"/></svg>
<svg class="a" style="left:2473px;top:75px;" width="4" height="16" viewBox="0 0 4 16"><circle cx="2" cy="3" r="1.500" fill="#fff" stroke="#6a6a6a" stroke-width="0.800"/><circle cx="2" cy="8" r="1.500" fill="#fff" stroke="#6a6a6a" stroke-width="0.800"/><circle cx="2" cy="13" r="1.500" fill="#fff" stroke="#6a6a6a" stroke-width="0.800"/></svg>
<svg class="a" style="left:2493px;top:78px;" width="10" height="5" viewBox="0 0 10 5"><rect x="0.600" y="0.600" width="8.800" height="3" fill="#fff" stroke="#000" stroke-width="1.200"/></svg>
<svg class="a" style="left:2516px;top:78px;" width="10" height="10" viewBox="0 0 10 10"><rect x="0.500" y="0.500" width="9" height="9" fill="#fff" stroke="#000" stroke-width="1"/><rect x="0" y="0" width="10" height="2" fill="#000"/></svg>
<div class="a" style="left:1556px;top:96px;width:962px;height:1286px;overflow:hidden">
<svg class="a" style="left:5px;top:5px;" width="11" height="9" viewBox="0 0 12 10"><path d="M1.200 2.500 L6 7.300 L10.800 2.500" fill="none" stroke="#3c3c3c" stroke-width="2.300"/></svg>
<div class="ob" style="left:19px;top:0px">{}</div>
<svg class="a" style="left:21px;top:23px;" width="11" height="9" viewBox="0 0 12 10"><path d="M1.200 2.500 L6 7.300 L10.800 2.500" fill="none" stroke="#3c3c3c" stroke-width="2.300"/></svg>
<div class="ob" style="left:35px;top:18px">{}</div>
<div class="t" style="left:56px;top:19px;"><i class="q1">execution</i></div>
<div class="os" style="left:53px;top:36px">S</div>
<div class="t" style="left:72px;top:37px;"><i class="qm1">start</i><i class="qm6">Time</i><i class="qm7"> : </i></div>
<div class="t" style="left:130.5px;top:37px;color:#2a24e0;"><i class="c7">"</i><i class="qm13">2026</i><i class="c10">-</i><i class="qm13">04</i><i class="c10">-</i><i class="qm13">14</i><i class="qm27">T</i><i class="qm13">12</i><i class="qm7">:</i><i class="qm13">03</i><i class="qm7">:</i><i class="qm13">17</i><i class="c7">"</i></div>
<div class="os" style="left:53px;top:54px">S</div>
<div class="t" style="left:72px;top:55px;"><i class="q1">command</i><i class="qm3">Line</i><i class="qm7"> : </i></div>
<div class="t" style="left:157.5px;top:55px;color:#2a24e0;"><i class="c7">"</i><i class="q1">sortcl</i><i class="qm7"> </i><i class="c16">/</i><i class="qm19">SPECIFICATION</i><i class="c10">=</i><i class="qm16">IRI</i><i class="qm33">_</i><i class="qm3">Testing</i><i class="qm33">_</i><i class="q1">Health</i><i class="qm15">Care</i><i class="qm33">_</i><i class="qm17">PATIENT</i><i class="qm7">.</i><i class="qm4">scl</i><i class="qm7"> </i><i class="c7">"</i></div>
<div class="os" style="left:53px;top:72px">S</div>
<div class="t" style="left:72px;top:73px;"><i class="qm6">username</i><i class="qm7"> : </i></div>
<div class="t" style="left:133.5px;top:73px;color:#2a24e0;"><i class="c7">"</i><i class="q0">kevinr</i><i class="c7">"</i></div>
<svg class="a" style="left:37px;top:95px;" width="11" height="9" viewBox="0 0 12 10"><path d="M1.200 2.500 L6 7.300 L10.800 2.500" fill="none" stroke="#3c3c3c" stroke-width="2.300"/></svg>
<div class="ob" style="left:51px;top:90px">[]</div>
<div class="t" style="left:72px;top:91px;"><i class="qm7">spec</i><i class="qm9">Files</i></div>
<svg class="a" style="left:53px;top:113px;" width="11" height="9" viewBox="0 0 12 10"><path d="M1.200 2.500 L6 7.300 L10.800 2.500" fill="none" stroke="#3c3c3c" stroke-width="2.300"/></svg>
<div class="ob" style="left:67px;top:108px">{}</div>
<div class="os" style="left:85px;top:126px">S</div>
<div class="t" style="left:104px;top:127px;"><i class="qm5">name</i><i class="qm7"> : </i></div>
<div class="t" style="left:143.5px;top:127px;color:#2a24e0;"><i class="c7">"</i><i class="qm16">IRI</i><i class="qm33">_</i><i class="qm3">Testing</i><i class="qm33">_</i><i class="q1">Health</i><i class="qm15">Care</i><i class="qm33">_</i><i class="qm17">PATIENT</i><i class="qm7">.</i><i class="qm4">scl</i><i class="c7">"</i></div>
<svg class="a" style="left:69px;top:149px;" width="11" height="9" viewBox="0 0 12 10"><path d="M1.200 2.500 L6 7.300 L10.800 2.500" fill="none" stroke="#3c3c3c" stroke-width="2.300"/></svg>
<div class="ob" style="left:83px;top:144px">[]</div>
<div class="t" style="left:104px;top:145px;"><i class="q2">contents</i></div>
<div class="os" style="left:101px;top:162px">S</div>
<div class="t" style="left:120px;top:163px;"><i class="qm7"> : </i></div>
<div class="t" style="left:130.5px;top:163px;color:#2a24e0;"><i class="q11">"#</i><i class="qm7"> </i><i class="qm6">Generated</i><i class="qm7"> </i><i class="q8">with</i><i class="qm7"> </i><i class="qm16">IRI</i><i class="qm7"> </i><i class="qm1">Workbench</i><i class="qm7"> </i><i class="c10">-</i><i class="qm7"> </i><i class="q0">New</i><i class="qm7"> Data </i><i class="qm16">Class</i><i class="qm7"> </i><i class="q4">Map</i><i class="qm7"> </i><i class="qm17">DB</i><i class="qm7"> </i><i class="q1">Masking</i><i class="qm7"> </i><i class="qm9">Job</i><i class="c7">"</i></div>
<div class="os" style="left:101px;top:180px">S</div>
<div class="t" style="left:120px;top:181px;"><i class="qm7"> : </i></div>
<div class="t" style="left:130.5px;top:181px;color:#2a24e0;"><i class="q12">"#"</i></div>
<div class="os" style="left:101px;top:198px">S</div>
<div class="t" style="left:120px;top:199px;"><i class="qm7"> : </i></div>
<div class="t" style="left:130.5px;top:199px;color:#2a24e0;"><i class="c7">"</i><i class="qm7"> </i><i class="q7">#</i><i class="qm7"> </i><i class="q5">Author</i><i class="qm7">: </i><i class="q0">kevinr</i><i class="c7">"</i></div>
<div class="os" style="left:101px;top:216px">S</div>
<div class="t" style="left:120px;top:217px;"><i class="qm7"> : </i></div>
<div class="t" style="left:130.5px;top:217px;color:#2a24e0;"><i class="c7">"</i><i class="qm7"> </i><i class="q7">#</i><i class="qm7"> </i><i class="qm8">Created</i><i class="qm7">: </i><i class="qm13">2024</i><i class="c10">-</i><i class="qm13">10</i><i class="c10">-</i><i class="qm13">23</i><i class="qm7"> </i><i class="qm13">10</i><i class="qm7">:</i><i class="qm13">51</i><i class="qm7">:</i><i class="qm13">25</i><i class="c7">"</i></div>
<div class="os" style="left:101px;top:234px">S</div>
<div class="t" style="left:120px;top:235px;"><i class="qm7"> : </i></div>
<div class="t" style="left:130.5px;top:235px;color:#2a24e0;"><i class="c7">"</i><i class="qm7"> </i><i class="q11">#"</i></div>
<div class="os" style="left:101px;top:252px">S</div>
<div class="t" style="left:120px;top:253px;"><i class="qm7"> : </i></div>
<div class="t" style="left:130.5px;top:253px;color:#2a24e0;"><i class="q18">"#/</i><i class="qm18">LIBRARY</i><i class="q23">=\"</i><i class="qm7">W</i><i class="q20">:\\</i><i class="qm7">Gits</i><i class="q33">\\</i><i class="qm4">Cosort</i><i class="q33">\\</i><i class="q1">cosort</i><i class="q33">\\</i><i class="qm5">msdev</i><i class="q33">\\</i><i class="q5">odbc</i><i class="q33">\\</i><i class="q0">x</i><i class="qm13">64</i><i class="q33">\\</i><i class="qm1">Debug</i><i class="q33">\\</i><i class="q2">libcsodbc</i><i class="qm7">.</i><i class="q7">dll</i><i class="q21">\""</i></div>
<div class="os" style="left:101px;top:270px">S</div>
<div class="t" style="left:120px;top:271px;"><i class="qm7"> : </i></div>
<div class="t" style="left:130.5px;top:271px;color:#2a24e0;"><i class="q24">"/</i><i class="qm14">INFILE</i><i class="q23">=\"</i><i class="q1">Health</i><i class="qm15">Care</i><i class="qm7">.</i><i class="qm17">PATIENT</i><i class="qm7">;</i><i class="qm16">DSN</i><i class="c10">=</i><i class="qm16">IRI</i><i class="qm33">_</i><i class="qm3">Testing</i><i class="qm7">;</i><i class="qm18">EUID</i><i class="c10">=</i><i class="qm5">emzxb</i><i class="qm13">7</i><i class="q0">x</i><i class="qm13">8</i><i class="qm27">PC</i><i class="qm13">3</i><i class="qm2">RNM</i><i class="qm10">Fg</i><i class="q0">ObGhfg</i><i class="q11">==;</i><i class="qm20">EPWD</i><i class="c10">=</i><i class="q0">m</i><i class="qm13">9</i><i class="q4">xgj</i><i class="q7">H</i><i class="qm13">0</i><i class="q7">i</i><i class="qm20">Jv</i><i class="qm10">BA</i><i class="qm7">Gf</i><i class="qm13">7</i><i class="q4">oyn</i><i class="qm13">418</i><i class="qm7">Q</i><i class="q16">==;\""</i></div>
<div class="os" style="left:101px;top:288px">S</div>
<div class="t" style="left:120px;top:289px;"><i class="qm7"> : </i></div>
<div class="t" style="left:130.5px;top:289px;color:#2a24e0;"><i class="q24">"/</i><i class="qm31">PROCESS</i><i class="c10">=</i><i class="qm18">ODBC</i><i class="c7">"</i></div>
<div class="os" style="left:101px;top:306px">S</div>
<div class="t" style="left:120px;top:307px;"><i class="qm7"> : </i></div>
<div class="t" style="left:130.5px;top:307px;color:#2a24e0;"><i class="q24">"/</i><i class="qm12">ALIAS</i><i class="c10">=</i><i class="qm16">IRI</i><i class="qm33">_</i><i class="qm23">TESTING</i><i class="qm33">_</i><i class="q1">Health</i><i class="qm15">Care</i><i class="qm33">_</i><i class="qm17">PATIENT</i><i class="c7">"</i></div>
<div class="os" style="left:101px;top:324px">S</div>
<div class="t" style="left:120px;top:325px;"><i class="qm7"> : </i></div>
<div class="t" style="left:130.5px;top:325px;color:#2a24e0;"><i class="q24">"/</i><i class="qm20">FIELD</i><i class="q10">=(</i><i class="qm17">PATIENT</i><i class="qm33">_</i><i class="qm10">ID</i><i class="qm7">, </i><i class="qm27">TYPE</i><i class="c10">=</i><i class="qm17">ASCII</i><i class="qm7">, </i><i class="qm13">POSITION</i><i class="c10">=</i><i class="qm13">1</i><i class="qm7">, </i><i class="qm22">SEPARATOR</i><i class="q27">=\"\\</i><i class="q13">t</i><i class="q14">\",</i><i class="qm7"> </i><i class="qm22">ODEF</i><i class="q23">=\"</i><i class="qm17">PATIENT</i><i class="qm33">_</i><i class="qm10">ID</i><i class="q16">\")"</i></div>
<div class="os" style="left:101px;top:342px">S</div>
<div class="t" style="left:120px;top:343px;"><i class="qm7"> : </i></div>
<div class="t" style="left:130.5px;top:343px;color:#2a24e0;"><i class="q24">"/</i><i class="qm20">FIELD</i><i class="q10">=(</i><i class="qm27">FIRST</i><i class="qm33">_</i><i class="qm3">NAME</i><i class="qm7">, </i><i class="qm27">TYPE</i><i class="c10">=</i><i class="qm17">ASCII</i><i class="qm7">, </i><i class="qm13">POSITION</i><i class="c10">=</i><i class="qm13">2</i><i class="qm7">, </i><i class="qm22">SEPARATOR</i><i class="q27">=\"\\</i><i class="q13">t</i><i class="q14">\",</i><i class="qm7"> </i><i class="qm22">ODEF</i><i class="q23">=\"</i><i class="qm27">FIRST</i><i class="qm33">_</i><i class="qm3">NAME</i><i class="q16">\")"</i></div>
<div class="os" style="left:101px;top:360px">S</div>
<div class="t" style="left:120px;top:361px;"><i class="qm7"> : </i></div>
<div class="t" style="left:130.5px;top:361px;color:#2a24e0;"><i class="q24">"/</i><i class="qm20">FIELD</i><i class="q10">=(</i><i class="qm20">LAST</i><i class="qm33">_</i><i class="qm3">NAME</i><i class="qm7">, </i><i class="qm27">TYPE</i><i class="c10">=</i><i class="qm17">ASCII</i><i class="qm7">, </i><i class="qm13">POSITION</i><i class="c10">=</i><i class="qm13">3</i><i class="qm7">, </i><i class="qm22">SEPARATOR</i><i class="q27">=\"\\</i><i class="q13">t</i><i class="q14">\",</i><i class="qm7"> </i><i class="qm22">ODEF</i><i class="q23">=\"</i><i class="qm20">LAST</i><i class="qm33">_</i><i class="qm3">NAME</i><i class="q16">\")"</i></div>
<div class="os" style="left:101px;top:378px">S</div>
<div class="t" style="left:120px;top:379px;"><i class="qm7"> : </i></div>
<div class="t" style="left:130.5px;top:379px;color:#2a24e0;"><i class="q24">"/</i><i class="qm20">FIELD</i><i class="q10">=(</i><i class="qm11">MIDDLE</i><i class="qm33">_</i><i class="qm8">INITIAL</i><i class="qm7">, </i><i class="qm27">TYPE</i><i class="c10">=</i><i class="qm17">ASCII</i><i class="qm7">, </i><i class="qm13">POSITION</i><i class="c10">=</i><i class="qm13">4</i><i class="qm7">, </i><i class="qm22">SEPARATOR</i><i class="q27">=\"\\</i><i class="q13">t</i><i class="q14">\",</i><i class="qm7"> </i><i class="qm22">ODEF</i><i class="q23">=\"</i><i class="qm11">MIDDLE</i><i class="qm33">_</i><i class="qm8">INITIAL</i><i class="q16">\")"</i></div>
<div class="os" style="left:101px;top:396px">S</div>
<div class="t" style="left:120px;top:397px;"><i class="qm7"> : </i></div>
<div class="t" style="left:130.5px;top:397px;color:#2a24e0;"><i class="q24">"/</i><i class="qm20">FIELD</i><i class="q10">=(</i><i class="qm34">STREET</i><i class="qm7">, </i><i class="qm27">TYPE</i><i class="c10">=</i><i class="qm17">ASCII</i><i class="qm7">, </i><i class="qm13">POSITION</i><i class="c10">=</i><i class="qm13">5</i><i class="qm7">, </i><i class="qm22">SEPARATOR</i><i class="q27">=\"\\</i><i class="q13">t</i><i class="q14">\",</i><i class="qm7"> </i><i class="qm22">ODEF</i><i class="q23">=\"</i><i class="qm34">STREET</i><i class="q16">\")"</i></div>
<div class="os" style="left:101px;top:414px">S</div>
<div class="t" style="left:120px;top:415px;"><i class="qm7"> : </i></div>
<div class="t" style="left:130.5px;top:415px;color:#2a24e0;"><i class="q24">"/</i><i class="qm20">FIELD</i><i class="q10">=(</i><i class="qm22">CITY</i><i class="qm7">, </i><i class="qm27">TYPE</i><i class="c10">=</i><i class="qm17">ASCII</i><i class="qm7">, </i><i class="qm13">POSITION</i><i class="c10">=</i><i class="qm13">6</i><i class="qm7">, </i><i class="qm22">SEPARATOR</i><i class="q27">=\"\\</i><i class="q13">t</i><i class="q14">\",</i><i class="qm7"> </i><i class="qm22">ODEF</i><i class="q23">=\"</i><i class="qm22">CITY</i><i class="q16">\")"</i></div>
<div class="os" style="left:101px;top:432px">S</div>
<div class="t" style="left:120px;top:433px;"><i class="qm7"> : </i></div>
<div class="t" style="left:130.5px;top:433px;color:#2a24e0;"><i class="q24">"/</i><i class="qm20">FIELD</i><i class="q10">=(</i><i class="qm28">STATE</i><i class="qm7">, </i><i class="qm27">TYPE</i><i class="c10">=</i><i class="qm17">ASCII</i><i class="qm7">, </i><i class="qm13">POSITION</i><i class="c10">=</i><i class="qm13">7</i><i class="qm7">, </i><i class="qm22">SEPARATOR</i><i class="q27">=\"\\</i><i class="q13">t</i><i class="q14">\",</i><i class="qm7"> </i><i class="qm22">ODEF</i><i class="q23">=\"</i><i class="qm28">STATE</i><i class="q16">\")"</i></div>
<div class="os" style="left:101px;top:450px">S</div>
<div class="t" style="left:120px;top:451px;"><i class="qm7"> : </i></div>
<div class="t" style="left:130.5px;top:451px;color:#2a24e0;"><i class="q24">"/</i><i class="qm20">FIELD</i><i class="q10">=(</i><i class="qm11">ZIP</i><i class="qm7">, </i><i class="qm27">TYPE</i><i class="c10">=</i><i class="qm17">ASCII</i><i class="qm7">, </i><i class="qm13">POSITION</i><i class="c10">=</i><i class="qm13">8</i><i class="qm7">, </i><i class="qm22">SEPARATOR</i><i class="q27">=\"\\</i><i class="q13">t</i><i class="q14">\",</i><i class="qm7"> </i><i class="qm22">ODEF</i><i class="q23">=\"</i><i class="qm11">ZIP</i><i class="q16">\")"</i></div>
<div class="os" style="left:101px;top:468px">S</div>
<div class="t" style="left:120px;top:469px;"><i class="qm7"> : </i></div>
<div class="t" style="left:130.5px;top:469px;color:#2a24e0;"><i class="q24">"/</i><i class="qm20">FIELD</i><i class="q10">=(</i><i class="qm8">EMAIL</i><i class="qm7">, </i><i class="qm27">TYPE</i><i class="c10">=</i><i class="qm17">ASCII</i><i class="qm7">, </i><i class="qm13">POSITION</i><i class="c10">=</i><i class="qm13">9</i><i class="qm7">, </i><i class="qm22">SEPARATOR</i><i class="q27">=\"\\</i><i class="q13">t</i><i class="q14">\",</i><i class="qm7"> </i><i class="qm22">ODEF</i><i class="q23">=\"</i><i class="qm8">EMAIL</i><i class="q16">\")"</i></div>
<div class="os" style="left:101px;top:486px">S</div>
<div class="t" style="left:120px;top:487px;"><i class="qm7"> : </i></div>
<div class="t" style="left:130.5px;top:487px;color:#2a24e0;"><i class="q24">"/</i><i class="qm20">FIELD</i><i class="q10">=(</i><i class="qm11">PHONE</i><i class="qm7">, </i><i class="qm27">TYPE</i><i class="c10">=</i><i class="qm17">ASCII</i><i class="qm7">, </i><i class="qm13">POSITION</i><i class="c10">=</i><i class="qm13">10</i><i class="qm7">, </i><i class="qm22">SEPARATOR</i><i class="q27">=\"\\</i><i class="q13">t</i><i class="q14">\",</i><i class="qm7"> </i><i class="qm22">ODEF</i><i class="q23">=\"</i><i class="qm11">PHONE</i><i class="q16">\")"</i></div>
<div class="os" style="left:101px;top:504px">S</div>
<div class="t" style="left:120px;top:505px;"><i class="qm7"> : </i></div>
<div class="t" style="left:130.5px;top:505px;color:#2a24e0;"><i class="q24">"/</i><i class="qm20">FIELD</i><i class="q10">=(</i><i class="qm24">SSN</i><i class="qm7">, </i><i class="qm27">TYPE</i><i class="c10">=</i><i class="qm17">ASCII</i><i class="qm7">, </i><i class="qm13">POSITION</i><i class="c10">=</i><i class="qm5">11</i><i class="qm7">, </i><i class="qm22">SEPARATOR</i><i class="q27">=\"\\</i><i class="q13">t</i><i class="q14">\",</i><i class="qm7"> </i><i class="qm22">ODEF</i><i class="q23">=\"</i><i class="qm24">SSN</i><i class="q16">\")"</i></div>
<div class="os" style="left:101px;top:522px">S</div>
<div class="t" style="left:120px;top:523px;"><i class="qm7"> : </i></div>
<div class="t" style="left:130.5px;top:523px;color:#2a24e0;"><i class="q24">"/</i><i class="qm20">FIELD</i><i class="q10">=(</i><i class="qm17">INSURANCE</i><i class="qm33">_</i><i class="qm10">ID</i><i class="qm7">, </i><i class="qm27">TYPE</i><i class="c10">=</i><i class="qm17">ASCII</i><i class="qm7">, </i><i class="qm13">POSITION</i><i class="c10">=</i><i class="qm13">12</i><i class="qm7">, </i><i class="qm22">SEPARATOR</i><i class="q27">=\"\\</i><i class="q13">t</i><i class="q14">\",</i><i class="qm7"> </i><i class="qm22">ODEF</i><i class="q23">=\"</i><i class="qm17">INSURANCE</i><i class="qm33">_</i><i class="qm10">ID</i><i class="q16">\")"</i></div>
<div class="os" style="left:101px;top:540px">S</div>
<div class="t" style="left:120px;top:541px;"><i class="qm7"> : </i></div>
<div class="t" style="left:130.5px;top:541px;color:#2a24e0;"><i class="q24">"/</i><i class="qm20">FIELD</i><i class="q10">=(</i><i class="qm13">DOB</i><i class="qm7">, </i><i class="qm27">TYPE</i><i class="c10">=</i><i class="qm18">ISO</i><i class="qm33">_</i><i class="qm21">DATE</i><i class="qm7">, </i><i class="qm13">POSITION</i><i class="c10">=</i><i class="qm13">13</i><i class="qm7">, </i><i class="qm22">SEPARATOR</i><i class="q27">=\"\\</i><i class="q13">t</i><i class="q14">\",</i><i class="qm7"> </i><i class="qm22">ODEF</i><i class="q23">=\"</i><i class="qm13">DOB</i><i class="q16">\")"</i></div>
<div class="os" style="left:101px;top:558px">S</div>
<div class="t" style="left:120px;top:559px;"><i class="qm7"> : </i></div>
<div class="t" style="left:130.5px;top:559px;color:#2a24e0;"><i class="q15">""</i></div>
<div class="os" style="left:101px;top:576px">S</div>
<div class="t" style="left:120px;top:577px;"><i class="qm7"> : </i></div>
<div class="t" style="left:130.5px;top:577px;color:#2a24e0;"><i class="q24">"/</i><i class="qm26">REPORT</i><i class="c7">"</i></div>
<div class="os" style="left:101px;top:594px">S</div>
<div class="t" style="left:120px;top:595px;"><i class="qm7"> : </i></div>
<div class="t" style="left:130.5px;top:595px;color:#2a24e0;"><i class="q15">""</i></div>
<div class="os" style="left:101px;top:612px">S</div>
<div class="t" style="left:120px;top:613px;"><i class="qm7"> : </i></div>
<div class="t" style="left:130.5px;top:613px;color:#2a24e0;"><i class="q24">"/</i><i class="qm19">OUTFILE</i><i class="q23">=\"</i><i class="qm3">Mask</i><i class="q1">Health</i><i class="qm15">Care</i><i class="qm7">.</i><i class="qm17">PATIENT</i><i class="qm7">;</i><i class="qm16">DSN</i><i class="c10">=</i><i class="qm16">IRI</i><i class="qm33">_</i><i class="qm3">Testing</i><i class="qm7">;</i><i class="qm18">EUID</i><i class="c10">=</i><i class="qm5">emzxb</i><i class="qm13">7</i><i class="q0">x</i><i class="qm13">8</i><i class="qm27">PC</i><i class="qm13">3</i><i class="qm2">RNM</i><i class="qm10">Fg</i><i class="q0">ObGhfg</i><i class="q11">==;</i><i class="qm20">EPWD</i><i class="c10">=</i><i class="q0">m</i><i class="qm13">9</i><i class="q4">xgj</i><i class="q7">H</i><i class="qm13">0</i><i class="q7">i</i><i class="qm20">Jv</i><i class="qm10">BA</i><i class="qm7">Gf</i><i class="qm13">7</i><i class="q4">oyn</i><i class="qm13">418</i><i class="qm7">Q</i><i class="q16">==;\""</i></div>
<div class="os" style="left:101px;top:630px">S</div>
<div class="t" style="left:120px;top:631px;"><i class="qm7"> : </i></div>
<div class="t" style="left:130.5px;top:631px;color:#2a24e0;"><i class="q24">"/</i><i class="qm31">PROCESS</i><i class="c10">=</i><i class="qm18">ODBC</i><i class="c7">"</i></div>
<div class="os" style="left:101px;top:648px">S</div>
<div class="t" style="left:120px;top:649px;"><i class="qm7"> : </i></div>
<div class="t" style="left:130.5px;top:649px;color:#2a24e0;"><i class="q24">"/</i><i class="qm29">CREATE</i><i class="c7">"</i></div>
<div class="os" style="left:101px;top:666px">S</div>
<div class="t" style="left:120px;top:667px;"><i class="qm7"> : </i></div>
<div class="t" style="left:130.5px;top:667px;color:#2a24e0;"><i class="q24">"/</i><i class="qm20">FIELD</i><i class="q10">=(</i><i class="qm17">PATIENT</i><i class="qm33">_</i><i class="qm10">ID</i><i class="qm7">, </i><i class="qm27">TYPE</i><i class="c10">=</i><i class="qm17">ASCII</i><i class="qm7">, </i><i class="qm13">POSITION</i><i class="c10">=</i><i class="qm13">1</i><i class="qm7">, </i><i class="qm22">SEPARATOR</i><i class="q27">=\"\\</i><i class="q13">t</i><i class="q14">\",</i><i class="qm7"> </i><i class="qm22">ODEF</i><i class="q23">=\"</i><i class="qm17">PATIENT</i><i class="qm33">_</i><i class="qm10">ID</i><i class="q16">\")"</i></div>
<div class="os" style="left:101px;top:684px">S</div>
<div class="t" style="left:120px;top:685px;"><i class="qm7"> : </i></div>
<div class="t" style="left:130.5px;top:685px;color:#2a24e0;"><i class="q24">"/</i><i class="qm20">FIELD</i><i class="q10">=(</i><i class="qm7">HASH</i><i class="qm33">_</i><i class="qm27">FIRST</i><i class="qm33">_</i><i class="qm3">NAME</i><i class="c10">=</i><i class="qm5">hash</i><i class="qm33">_</i><i class="qm9">sha</i><i class="qm13">2</i><i class="q0">(</i><i class="qm27">FIRST</i><i class="qm33">_</i><i class="qm3">NAME),</i><i class="qm7"> </i><i class="qm27">TYPE</i><i class="c10">=</i><i class="qm17">ASCII</i><i class="qm7">, </i><i class="qm13">POSITION</i><i class="c10">=</i><i class="qm13">2</i><i class="qm7">, </i><i class="qm22">SEPARATOR</i><i class="q27">=\"\\</i><i class="q13">t</i><i class="q14">\",</i><i class="qm7"> </i><i class="qm22">ODEF</i><i class="q23">=\"</i><i class="qm27">FIRST</i><i class="qm33">_</i><i class="qm3">NAME</i><i class="q16">\")"</i></div>
<div class="os" style="left:101px;top:702px">S</div>
<div class="t" style="left:120px;top:703px;"><i class="qm7"> : </i></div>
<div class="t" style="left:130.5px;top:703px;color:#2a24e0;"><i class="q24">"/</i><i class="qm20">FIELD</i><i class="q10">=(</i><i class="qm20">LAST</i><i class="qm33">_</i><i class="qm3">NAME</i><i class="qm7">, </i><i class="qm27">TYPE</i><i class="c10">=</i><i class="qm17">ASCII</i><i class="qm7">, </i><i class="qm13">POSITION</i><i class="c10">=</i><i class="qm13">3</i><i class="qm7">, </i><i class="qm22">SEPARATOR</i><i class="q27">=\"\\</i><i class="q13">t</i><i class="q14">\",</i><i class="qm7"> </i><i class="qm22">ODEF</i><i class="q23">=\"</i><i class="qm20">LAST</i><i class="qm33">_</i><i class="qm3">NAME</i><i class="q16">\")"</i></div>
<div class="os" style="left:101px;top:720px">S</div>
<div class="t" style="left:120px;top:721px;"><i class="qm7"> : </i></div>
<div class="t" style="left:130.5px;top:721px;color:#2a24e0;"><i class="q24">"/</i><i class="qm20">FIELD</i><i class="q10">=(</i><i class="qm11">MIDDLE</i><i class="qm33">_</i><i class="qm8">INITIAL</i><i class="qm7">, </i><i class="qm27">TYPE</i><i class="c10">=</i><i class="qm17">ASCII</i><i class="qm7">, </i><i class="qm13">POSITION</i><i class="c10">=</i><i class="qm13">4</i><i class="qm7">, </i><i class="qm22">SEPARATOR</i><i class="q27">=\"\\</i><i class="q13">t</i><i class="q14">\",</i><i class="qm7"> </i><i class="qm22">ODEF</i><i class="q23">=\"</i><i class="qm11">MIDDLE</i><i class="qm33">_</i><i class="qm8">INITIAL</i><i class="q16">\")"</i></div>
<div class="os" style="left:101px;top:738px">S</div>
<div class="t" style="left:120px;top:739px;"><i class="qm7"> : </i></div>
<div class="t" style="left:130.5px;top:739px;color:#2a24e0;"><i class="q24">"/</i><i class="qm20">FIELD</i><i class="q10">=(</i><i class="qm34">STREET</i><i class="qm7">, </i><i class="qm27">TYPE</i><i class="c10">=</i><i class="qm17">ASCII</i><i class="qm7">, </i><i class="qm13">POSITION</i><i class="c10">=</i><i class="qm13">5</i><i class="qm7">, </i><i class="qm22">SEPARATOR</i><i class="q27">=\"\\</i><i class="q13">t</i><i class="q14">\",</i><i class="qm7"> </i><i class="qm22">ODEF</i><i class="q23">=\"</i><i class="qm34">STREET</i><i class="q16">\")"</i></div>
<div class="os" style="left:101px;top:756px">S</div>
<div class="t" style="left:120px;top:757px;"><i class="qm7"> : </i></div>
<div class="t" style="left:130.5px;top:757px;color:#2a24e0;"><i class="q24">"/</i><i class="qm20">FIELD</i><i class="q10">=(</i><i class="qm10">MASK</i><i class="qm33">_</i><i class="qm22">CITY</i><i class="c10">=</i><i class="qm4">replace</i><i class="qm33">_</i><i class="qm5">chars</i><i class="q0">(</i><i class="qm22">CITY</i><i class="qm7">, </i><i class="q14">\"*\"),</i><i class="qm7"> </i><i class="qm27">TYPE</i><i class="c10">=</i><i class="qm17">ASCII</i><i class="qm7">, </i><i class="qm13">POSITION</i><i class="c10">=</i><i class="qm13">6</i><i class="qm7">, </i><i class="qm22">SEPARATOR</i><i class="q27">=\"\\</i><i class="q13">t</i><i class="q14">\",</i><i class="qm7"> </i><i class="qm22">ODEF</i><i class="q23">=\"</i><i class="qm22">CITY</i><i class="q16">\")"</i></div>
<div class="os" style="left:101px;top:774px">S</div>
<div class="t" style="left:120px;top:775px;"><i class="qm7"> : </i></div>
<div class="t" style="left:130.5px;top:775px;color:#2a24e0;"><i class="q24">"/</i><i class="qm20">FIELD</i><i class="q10">=(</i><i class="qm28">STATE</i><i class="qm7">, </i><i class="qm27">TYPE</i><i class="c10">=</i><i class="qm17">ASCII</i><i class="qm7">, </i><i class="qm13">POSITION</i><i class="c10">=</i><i class="qm13">7</i><i class="qm7">, </i><i class="qm22">SEPARATOR</i><i class="q27">=\"\\</i><i class="q13">t</i><i class="q14">\",</i><i class="qm7"> </i><i class="qm22">ODEF</i><i class="q23">=\"</i><i class="qm28">STATE</i><i class="q16">\")"</i></div>
<div class="os" style="left:101px;top:792px">S</div>
<div class="t" style="left:120px;top:793px;"><i class="qm7"> : </i></div>
<div class="t" style="left:130.5px;top:793px;color:#2a24e0;"><i class="q24">"/</i><i class="qm20">FIELD</i><i class="q10">=(</i><i class="qm11">ZIP</i><i class="qm7">, </i><i class="qm27">TYPE</i><i class="c10">=</i><i class="qm17">ASCII</i><i class="qm7">, </i><i class="qm13">POSITION</i><i class="c10">=</i><i class="qm13">8</i><i class="qm7">, </i><i class="qm22">SEPARATOR</i><i class="q27">=\"\\</i><i class="q13">t</i><i class="q14">\",</i><i class="qm7"> </i><i class="qm22">ODEF</i><i class="q23">=\"</i><i class="qm11">ZIP</i><i class="q16">\")"</i></div>
<div class="os" style="left:101px;top:810px">S</div>
<div class="t" style="left:120px;top:811px;"><i class="qm7"> : </i></div>
<div class="t" style="left:130.5px;top:811px;color:#2a24e0;"><i class="q24">"/</i><i class="qm20">FIELD</i><i class="q10">=(</i><i class="qm22">ENC</i><i class="qm33">_</i><i class="qm23">FP</i><i class="qm33">_</i><i class="qm8">EMAIL</i><i class="c10">=</i><i class="qm2">enc</i><i class="qm33">_</i><i class="q10">fp</i><i class="qm33">_</i><i class="qm16">aes</i><i class="qm13">256</i><i class="qm33">_</i><i class="q1">alphanum</i><i class="q0">(</i><i class="qm8">EMAIL</i><i class="qm7">, </i><i class="q24">\"</i><i class="qm6">secret</i><i class="q10">\"),</i><i class="qm7"> </i><i class="qm27">TYPE</i><i class="c10">=</i><i class="qm17">ASCII</i><i class="qm7">, </i><i class="qm13">POSITION</i><i class="c10">=</i><i class="qm13">9</i><i class="qm7">, </i><i class="qm22">SEPARATOR</i><i class="q27">=\"\\</i><i class="q13">t</i><i class="q14">\",</i><i class="qm7"> </i><i class="qm22">ODEF</i><i class="q23">=\"</i><i class="qm8">EMAIL</i><i class="q16">\")"</i></div>
<div class="os" style="left:101px;top:828px">S</div>
<div class="t" style="left:120px;top:829px;"><i class="qm7"> : </i></div>
<div class="t" style="left:130.5px;top:829px;color:#2a24e0;"><i class="q24">"/</i><i class="qm20">FIELD</i><i class="q10">=(</i><i class="qm11">PHONE</i><i class="qm7">, </i><i class="qm27">TYPE</i><i class="c10">=</i><i class="qm17">ASCII</i><i class="qm7">, </i><i class="qm13">POSITION</i><i class="c10">=</i><i class="qm13">10</i><i class="qm7">, </i><i class="qm22">SEPARATOR</i><i class="q27">=\"\\</i><i class="q13">t</i><i class="q14">\",</i><i class="qm7"> </i><i class="qm22">ODEF</i><i class="q23">=\"</i><i class="qm11">PHONE</i><i class="q16">\")"</i></div>
<div class="os" style="left:101px;top:846px">S</div>
<div class="t" style="left:120px;top:847px;"><i class="qm7"> : </i></div>
<div class="t" style="left:130.5px;top:847px;color:#2a24e0;"><i class="q24">"/</i><i class="qm20">FIELD</i><i class="q10">=(</i><i class="qm10">MASK</i><i class="qm33">_</i><i class="qm24">SSN</i><i class="c10">=</i><i class="qm4">replace</i><i class="qm33">_</i><i class="qm5">chars</i><i class="q0">(</i><i class="qm24">SSN</i><i class="qm7">, </i><i class="q16">\"*\",</i><i class="qm7"> </i><i class="qm13">1</i><i class="qm7">, </i><i class="qm13">3</i><i class="qm7">, </i><i class="q16">\"*\",</i><i class="qm7"> </i><i class="qm13">5</i><i class="qm7">, </i><i class="qm13">2</i><i class="qm3">),</i><i class="qm7"> </i><i class="qm27">TYPE</i><i class="c10">=</i><i class="qm17">ASCII</i><i class="qm7">, </i><i class="qm13">POSITION</i><i class="c10">=</i><i class="qm5">11</i><i class="qm7">, </i><i class="qm22">SEPARATOR</i><i class="q27">=\"\\</i><i class="q13">t</i><i class="q14">\",</i><i class="qm7"> </i><i class="qm22">ODEF</i><i class="q23">=\"</i><i class="qm24">SSN</i><i class="q16">\")"</i></div>
<div class="os" style="left:101px;top:864px">S</div>
<div class="t" style="left:120px;top:865px;"><i class="qm7"> : </i></div>
<div class="t" style="left:130.5px;top:865px;color:#2a24e0;"><i class="q24">"/</i><i class="qm20">FIELD</i><i class="q10">=(</i><i class="qm17">INSURANCE</i><i class="qm33">_</i><i class="qm10">ID</i><i class="qm7">, </i><i class="qm27">TYPE</i><i class="c10">=</i><i class="qm17">ASCII</i><i class="qm7">, </i><i class="qm13">POSITION</i><i class="c10">=</i><i class="qm13">12</i><i class="qm7">, </i><i class="qm22">SEPARATOR</i><i class="q27">=\"\\</i><i class="q13">t</i><i class="q14">\",</i><i class="qm7"> </i><i class="qm22">ODEF</i><i class="q23">=\"</i><i class="qm17">INSURANCE</i><i class="qm33">_</i><i class="qm10">ID</i><i class="q16">\")"</i></div>
<div class="os" style="left:101px;top:882px">S</div>
<div class="t" style="left:120px;top:883px;"><i class="qm7"> : </i></div>
<div class="t" style="left:130.5px;top:883px;color:#2a24e0;"><i class="q24">"/</i><i class="qm20">FIELD</i><i class="q10">=(</i><i class="qm20">BLUR</i><i class="qm33">_</i><i class="qm13">DOB</i><i class="c10">=</i><i class="q5">blur</i><i class="qm33">_</i><i class="qm2">date</i><i class="q0">(</i><i class="qm13">DOB</i><i class="qm7">, </i><i class="q24">\"</i><i class="qm13">1400</i><i class="c10">-</i><i class="qm13">01</i><i class="c10">-</i><i class="qm13">01</i><i class="q14">\",</i><i class="qm7"> </i><i class="q24">\"</i><i class="qm13">9999</i><i class="c10">-</i><i class="qm13">12</i><i class="c10">-</i><i class="qm13">31</i><i class="q14">\",</i><i class="qm7"> </i><i class="qm13">30</i><i class="qm3">),</i><i class="qm7"> </i><i class="qm27">TYPE</i><i class="c10">=</i><i class="qm18">ISO</i><i class="qm33">_</i><i class="qm21">DATE</i><i class="qm7">, </i><i class="qm13">POSITION</i><i class="c10">=</i><i class="qm13">13</i><i class="qm7">, </i><i class="qm22">SEPARATOR</i><i class="q27">=\"\\</i><i class="q13">t</i><i class="q14">\",</i><i class="qm7"> </i><i class="qm22">ODEF</i><i class="q23">=\"</i><i class="qm13">DOB</i><i class="q16">\")"</i></div>
<div class="os" style="left:101px;top:900px">S</div>
<div class="t" style="left:120px;top:901px;"><i class="qm7"> : </i></div>
<div class="t" style="left:130.5px;top:901px;color:#2a24e0;"><i class="q15">""</i></div>
<div class="os" style="left:101px;top:918px">S</div>
<div class="t" style="left:120px;top:919px;"><i class="qm7"> : </i></div>
<div class="t" style="left:130.5px;top:919px;color:#2a24e0;"><i class="q15">""</i></div>
<svg class="a" style="left:37px;top:941px;" width="11" height="9" viewBox="0 0 12 10"><path d="M1.200 2.500 L6 7.300 L10.800 2.500" fill="none" stroke="#3c3c3c" stroke-width="2.300"/></svg>
<div class="ob" style="left:51px;top:936px">{}</div>
<div class="t" style="left:72px;top:937px;"><i class="q4">policy</i></div>
<div class="os" style="left:69px;top:954px">S</div>
<div class="t" style="left:88px;top:955px;"><i class="q4">location</i><i class="qm7"> : </i></div>
<div class="t" style="left:141.5px;top:955px;color:#2a24e0;"><i class="c7">"</i><i class="qm33">C</i><i class="q20">:\\</i><i class="qm16">IRI</i><i class="q33">\\</i><i class="q1">cosort</i><i class="qm8">110</i><i class="q33">\\</i><i class="q0">etc</i><i class="q33">\\</i><i class="q0">Policy</i><i class="c7">"</i></div>
<div class="os" style="left:69px;top:972px">S</div>
<div class="t" style="left:88px;top:973px;"><i class="qm2">version</i><i class="qm7"> : </i></div>
<div class="t" style="left:136.5px;top:973px;color:#2a24e0;"><i class="c7">"</i><i class="qm13">1</i><i class="qm7">.</i><i class="qm13">0</i><i class="c7">"</i></div>
<div class="os" style="left:69px;top:990px">S</div>
<div class="t" style="left:88px;top:991px;"><i class="q3">author</i><i class="qm7"> : </i></div>
<div class="t" style="left:133.5px;top:991px;color:#2a24e0;"><i class="c7">"</i><i class="q5">tylor</i><i class="c7">"</i></div>
<div class="os" style="left:69px;top:1008px">S</div>
<div class="t" style="left:88px;top:1009px;"><i class="q2">when</i><i class="qm8">Created</i><i class="qm7"> : </i></div>
<div class="t" style="left:167.5px;top:1009px;color:#2a24e0;"><i class="c7">"</i><i class="qm13">2026</i><i class="c10">-</i><i class="qm13">02</i><i class="c10">-</i><i class="qm13">09</i><i class="qm27">T</i><i class="qm13">13</i><i class="qm7">:</i><i class="qm5">11</i><i class="qm7">:</i><i class="qm13">23</i><i class="c7">"</i></div>
<div class="os" style="left:69px;top:1026px">S</div>
<div class="t" style="left:88px;top:1027px;"><i class="q2">when</i><i class="q7">Modified</i><i class="qm7"> : </i></div>
<div class="t" style="left:175.5px;top:1027px;color:#2a24e0;"><i class="c7">"</i><i class="qm13">2026</i><i class="c10">-</i><i class="qm13">02</i><i class="c10">-</i><i class="qm13">09</i><i class="qm27">T</i><i class="qm13">13</i><i class="qm7">:</i><i class="qm5">11</i><i class="qm7">:</i><i class="qm13">23</i><i class="c7">"</i></div>
<div class="os" style="left:69px;top:1044px">S</div>
<div class="t" style="left:88px;top:1045px;"><i class="qm3">last</i><i class="q7">Modified</i><i class="qm10">By</i><i class="qm7"> : </i></div>
<div class="t" style="left:177.5px;top:1045px;color:#2a24e0;"><i class="c7">"</i><i class="q5">tylor</i><i class="c7">"</i></div>
<svg class="a" style="left:21px;top:1067px;" width="11" height="9" viewBox="0 0 12 10"><path d="M1.200 2.500 L6 7.300 L10.800 2.500" fill="none" stroke="#3c3c3c" stroke-width="2.300"/></svg>
<div class="ob" style="left:35px;top:1062px">{}</div>
<div class="t" style="left:56px;top:1063px;"><i class="qm4">permissions</i></div>
<svg class="a" style="left:37px;top:1085px;" width="11" height="9" viewBox="0 0 12 10"><path d="M1.200 2.500 L6 7.300 L10.800 2.500" fill="none" stroke="#3c3c3c" stroke-width="2.300"/></svg>
<div class="ob" style="left:51px;top:1080px">[]</div>
<div class="t" style="left:72px;top:1081px;"><i class="qm5">Scripts</i></div>
<svg class="a" style="left:53px;top:1103px;" width="11" height="9" viewBox="0 0 12 10"><path d="M1.200 2.500 L6 7.300 L10.800 2.500" fill="none" stroke="#3c3c3c" stroke-width="2.300"/></svg>
<div class="ob" style="left:67px;top:1098px">{}</div>
<div class="os" style="left:85px;top:1116px">S</div>
<div class="t" style="left:104px;top:1117px;"><i class="qm5">name</i><i class="qm7"> : </i></div>
<div class="t" style="left:143.5px;top:1117px;color:#2a24e0;"><i class="c7">"</i><i class="qm16">IRI</i><i class="qm33">_</i><i class="qm3">Testing</i><i class="qm33">_</i><i class="q1">Health</i><i class="qm15">Care</i><i class="qm33">_</i><i class="qm17">PATIENT</i><i class="qm7">.</i><i class="qm4">scl</i><i class="c7">"</i></div>
<div class="os" style="left:85px;top:1134px">S</div>
<div class="t" style="left:104px;top:1135px;"><i class="qm2">permission</i><i class="qm7"> : </i></div>
<div class="t" style="left:171.5px;top:1135px;color:#2a24e0;"><i class="c7">"</i><i class="q1">ungoverned</i><i class="c7">"</i></div>
<svg class="a" style="left:39px;top:1156px;" width="8" height="12" viewBox="0 0 8 12"><path d="M1.500 1.300 L6.300 6 L1.500 10.700" fill="none" stroke="#a4a4a4" stroke-width="1.900"/></svg>
<div class="ob" style="left:51px;top:1152px">[]</div>
<div class="t" style="left:72px;top:1153px;"><i class="qm9">Tables</i></div>
<svg class="a" style="left:39px;top:1174px;" width="8" height="12" viewBox="0 0 8 12"><path d="M1.500 1.300 L6.300 6 L1.500 10.700" fill="none" stroke="#a4a4a4" stroke-width="1.900"/></svg>
<div class="ob" style="left:51px;top:1170px">[]</div>
<div class="t" style="left:72px;top:1171px;"><i class="qm7">Fields</i></div>
<svg class="a" style="left:37px;top:1193px;" width="11" height="9" viewBox="0 0 12 10"><path d="M1.200 2.500 L6 7.300 L10.800 2.500" fill="none" stroke="#3c3c3c" stroke-width="2.300"/></svg>
<div class="ob" style="left:51px;top:1188px">[]</div>
<div class="t" style="left:72px;top:1189px;"><i class="q0">Functions</i></div>
<svg class="a" style="left:53px;top:1211px;" width="11" height="9" viewBox="0 0 12 10"><path d="M1.200 2.500 L6 7.300 L10.800 2.500" fill="none" stroke="#3c3c3c" stroke-width="2.300"/></svg>
<div class="ob" style="left:67px;top:1206px">{}</div>
<div class="os" style="left:85px;top:1224px">S</div>
<div class="t" style="left:104px;top:1225px;"><i class="qm5">name</i><i class="qm7"> : </i></div>
<div class="t" style="left:143.5px;top:1225px;color:#2a24e0;"><i class="c7">"</i><i class="qm5">hash</i><i class="qm33">_</i><i class="qm9">sha</i><i class="qm13">2</i><i class="c7">"</i></div>
<div class="os" style="left:85px;top:1242px">S</div>
<div class="t" style="left:104px;top:1243px;"><i class="qm2">permission</i><i class="qm7"> : </i></div>
<div class="t" style="left:171.5px;top:1243px;color:#2a24e0;"><i class="c7">"</i><i class="q1">ungoverned</i><i class="c7">"</i></div>
<svg class="a" style="left:53px;top:1265px;" width="11" height="9" viewBox="0 0 12 10"><path d="M1.200 2.500 L6 7.300 L10.800 2.500" fill="none" stroke="#3c3c3c" stroke-width="2.300"/></svg>
<div class="ob" style="left:67px;top:1260px">{}</div>
<div class="os" style="left:85px;top:1278px">S</div>
<div class="t" style="left:104px;top:1279px;"><i class="qm5">name</i><i class="qm7"> : </i></div>
<div class="t" style="left:143.5px;top:1279px;color:#2a24e0;"><i class="c7">"</i><i class="qm4">replace</i><i class="qm33">_</i><i class="qm5">chars</i><i class="c7">"</i></div>
</div>
<div class="a" style="left:2518px;top:96px;width:18px;height:1286px;background:#f0f0f0;"></div>
<div class="a" style="left:2518px;top:114px;width:15px;height:654px;background:#cdcdcd;"></div>
<svg class="a" style="left:2522px;top:102px;" width="8" height="6" viewBox="0 0 8 6"><path d="M0.500 5 L4 1.500 L7.500 5" fill="none" stroke="#505050" stroke-width="1.800"/></svg>
<svg class="a" style="left:2522px;top:1370px;" width="8" height="6" viewBox="0 0 8 6"><path d="M0.500 1 L4 4.500 L7.500 1" fill="none" stroke="#505050" stroke-width="1.800"/></svg>
<div class="a" style="left:2541px;top:73px;width:2px;height:2px;background:#a09888;"></div>
<div class="a" style="left:2545px;top:73px;width:2px;height:2px;background:#a09888;"></div>
<div class="a" style="left:2549px;top:73px;width:2px;height:2px;background:#a09888;"></div>
<div class="a" style="left:2553px;top:73px;width:2px;height:2px;background:#a09888;"></div>
<svg class="a" style="left:2544px;top:83px" width="9" height="9"><rect x="2.700" y="0.700" width="5.500" height="4" fill="#fff" stroke="#8a7e72" stroke-width="1.300"/><rect x="0.700" y="3.500" width="5.500" height="4" fill="#fff" stroke="#8a7e72" stroke-width="1.300"/></svg>
<svg class="a" style="left:2542px;top:101px;" width="14" height="14" viewBox="0 0 14 14"><rect x="0.800" y="0.800" width="12.400" height="9.400" rx="1" fill="#f6fbff" stroke="#2d5cab" stroke-width="1.600"/><path d="M3.500 4 H8 M3.500 6.500 H10" stroke="#2a3f8f" stroke-width="1"/><path d="M5 10.500 H9 V12 H5 Z M2.500 12.800 H11.500" stroke="#2d5cab" stroke-width="1.200" fill="#2d5cab"/></svg>
<svg class="a" style="left:2540px;top:123px" width="16" height="16"><rect x="1" y="1" width="9" height="14" fill="#fbf4dc" stroke="#a89858"/><circle cx="5.500" cy="5" r="2.500" fill="#e02020"/><path d="M3.500 13 Q5.500 8 7.500 13 Z" fill="#f0a020"/><path d="M10 2 Q15 2 14 8 Q13 13 15 15 H10" fill="#e4ecf8" stroke="#8aa0c8"/></svg>
<svg class="a" style="left:2541px;top:146px" width="15" height="14"><rect x="0.500" y="0.500" width="14" height="13" fill="#fff" stroke="#5a6a98"/><rect x="1" y="1" width="13" height="2.500" fill="#5a78b8"/><path d="M1 6.500 H14 M1 9.500 H14 M5 3.500 V13" stroke="#8a98c0" stroke-width="0.900"/></svg>
<svg class="a" style="left:2541px;top:170px" width="16" height="14"><rect x="0.500" y="1" width="13" height="3" fill="#3c9a3c"/><rect x="0.500" y="5.500" width="13" height="4" fill="#fff" stroke="#8a98a8" stroke-width="0.800"/><circle cx="11.500" cy="9.500" r="3.500" fill="#2fa02f" stroke="#fff"/><path d="M10.500 7.800 L13.200 9.500 L10.500 11.200 Z" fill="#fff"/></svg>
<svg class="a" style="left:2540px;top:188px" width="17" height="17"><rect x="0.500" y="2" width="13" height="12" fill="#fff" stroke="#b8a8c8" stroke-width="0.800"/><rect x="0.500" y="1" width="13" height="3.500" fill="#3cb84c"/><path d="M2 7 H12 M2 9.500 H12 M2 12 H8 M4 5 V13.500 M7 5 V13.500 M10 5 V11" stroke="#c090c0" stroke-width="0.800"/><circle cx="12.500" cy="12" r="3.800" fill="#f8d870" stroke="#b08820"/><path d="M12.500 9.800 V12 H14.300" stroke="#6a4a10" fill="none" stroke-width="0.900"/></svg>
<svg class="a" style="left:2541px;top:211px" width="14" height="16"><path d="M1 1 H13 V7.500 Q13 12.500 7 15 Q1 12.500 1 7.500 Z" fill="#303840"/><path d="M1 9 L13 3" stroke="#3a68c8" stroke-width="1.300"/></svg>
<svg class="a" style="left:2541px;top:232px" width="16" height="17"><path d="M1 2 H13 V8.500 Q13 13.500 7 16 Q1 13.500 1 8.500 Z" fill="#303840"/><path d="M1 10 L13 4" stroke="#3a68c8" stroke-width="1.300"/><path d="M12 0.500 V6 M9.300 3.200 H14.700" stroke="#ffd040" stroke-width="1.600"/></svg>
<svg class="a" style="left:2541px;top:256px" width="15" height="13"><rect x="0.500" y="0.500" width="14" height="12" fill="#fff" stroke="#5a6a98"/><rect x="1" y="1" width="13" height="2.500" fill="#5a78b8"/><path d="M1 6 H14 M1 8.500 H14 M1 11 H14 M5 3.500 V12" stroke="#8a98c0" stroke-width="0.900"/></svg>
<div class="a" style="left:2541px;top:276px;width:2px;height:2px;background:#a09888;"></div>
<div class="a" style="left:2545px;top:276px;width:2px;height:2px;background:#a09888;"></div>
<div class="a" style="left:2549px;top:276px;width:2px;height:2px;background:#a09888;"></div>
<div class="a" style="left:2553px;top:276px;width:2px;height:2px;background:#a09888;"></div>
<svg class="a" style="left:2544px;top:286px" width="9" height="9"><rect x="2.700" y="0.700" width="5.500" height="4" fill="#fff" stroke="#8a7e72" stroke-width="1.300"/><rect x="0.700" y="3.500" width="5.500" height="4" fill="#fff" stroke="#8a7e72" stroke-width="1.300"/></svg>
<svg class="a" style="left:2542px;top:305px;" width="12" height="15" viewBox="0 0 12 15"><svg x="0" y="0" width="12" height="15" viewBox="0 0 12 15"><path d="M0.5 0.5 H8 L11.5 4 V14.5 H0.5 Z" fill="#fff" stroke="#9a9a8a" stroke-width="1"/><path d="M8 0.5 V4 H11.5" fill="#ece6c8" stroke="#b0a670" stroke-width="1"/></svg><path d="M2 12.5 Q3 7 7 7 L8 3.500 L10 7 Q9 10 6 11.5 L2.500 13.5 Z" fill="#e8261c"/></svg>
<div class="a" style="left:1887px;top:1385px;width:1px;height:14px;background:#a0a0a0;"></div>
<div class="a" style="left:2021px;top:1385px;width:1px;height:14px;background:#a0a0a0;"></div>
<div class="a" style="left:2149px;top:1385px;width:1px;height:14px;background:#a0a0a0;"></div>
<div class="t" style="left:1895px;top:1386px;"><i class="q1">Writable</i></div>
<div class="t" style="left:2029px;top:1386px;"><i class="qm8">Smart</i><i class="qm7"> </i><i class="qm3">Insert</i></div>
<div class="t" style="left:2157px;top:1386px;"><i class="qm13">204</i><i class="qm7"> : </i><i class="qm13">41</i><i class="qm7"> : </i><i class="qm13">8894</i></div>
<div class="a" style="left:2276px;top:1387px;width:1px;height:1px;background:#b8b0a0;"></div>
<div class="a" style="left:2276px;top:1390px;width:1px;height:1px;background:#b8b0a0;"></div>
<div class="a" style="left:2276px;top:1393px;width:1px;height:1px;background:#b8b0a0;"></div>
<div class="a" style="left:2276px;top:1396px;width:1px;height:1px;background:#b8b0a0;"></div>
</body></html>
